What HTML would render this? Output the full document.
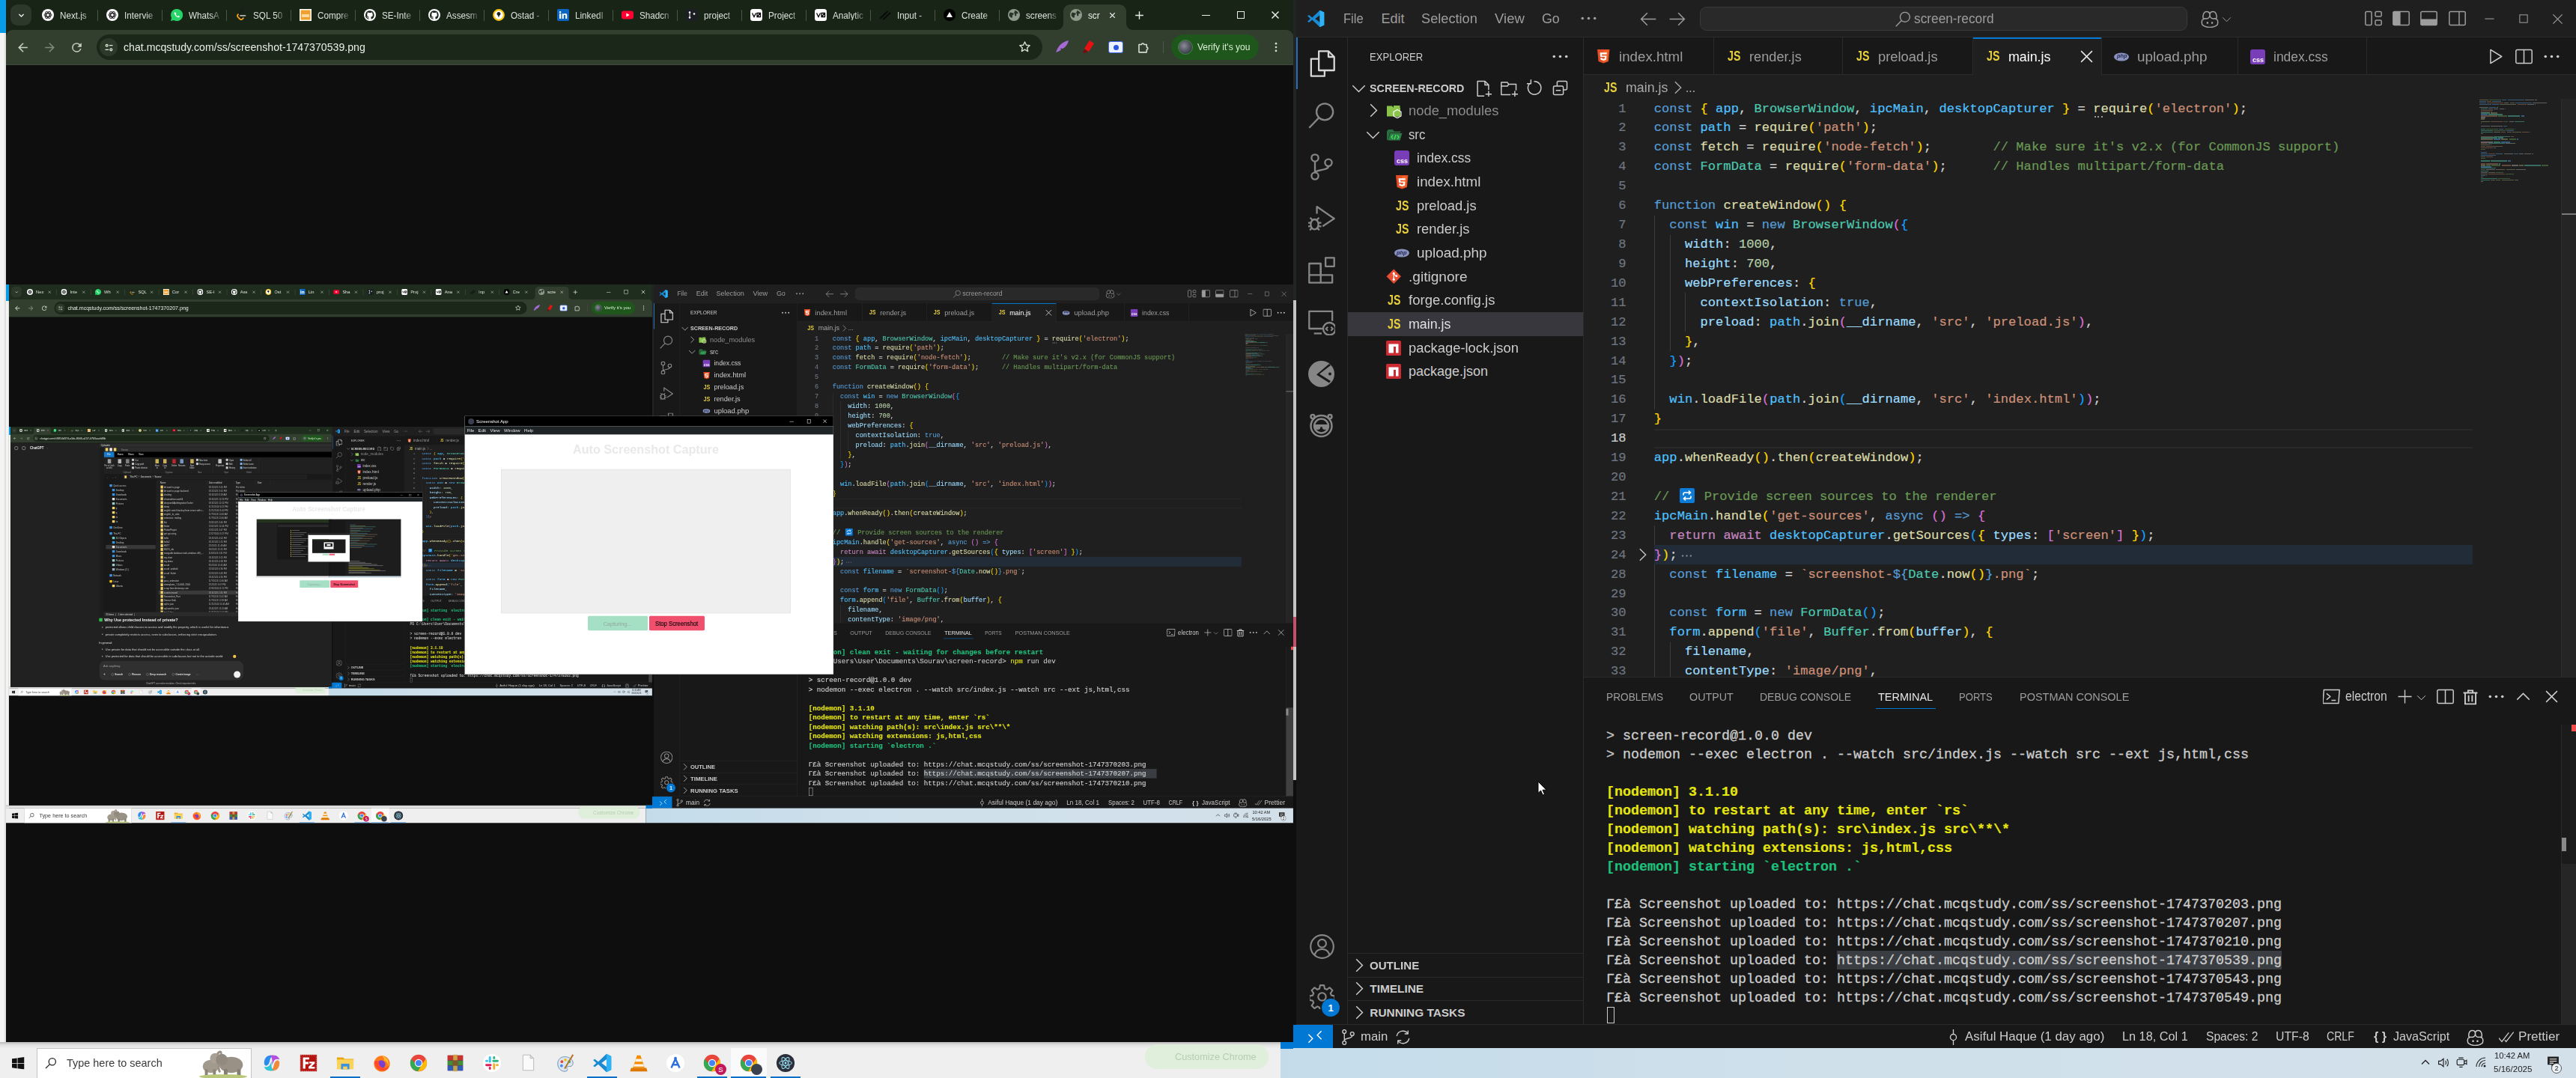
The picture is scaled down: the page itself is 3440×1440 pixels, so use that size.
<!DOCTYPE html><html><head><meta charset="utf-8"><title>screenshot</title><style>
html,body{margin:0;padding:0;background:#000;}
body{width:3440px;height:1440px;overflow:hidden;position:relative;font-family:"Liberation Sans",sans-serif;}
.desk{position:absolute;width:3440px;height:1440px;transform-origin:0 0;overflow:hidden;background:#0e0e0e;}
.b{position:absolute;}
.t{position:absolute;white-space:pre;line-height:1;transform-origin:0 0;font-family:"Liberation Sans",sans-serif;}
.m{position:absolute;white-space:pre;line-height:1;font-family:"Liberation Mono",monospace;-webkit-text-stroke:.2px;}
.m i{font-style:normal;}
.ic{position:absolute;overflow:visible;}
.tabt{overflow:hidden;-webkit-mask-image:linear-gradient(90deg,#000 65%,transparent 98%);mask-image:linear-gradient(90deg,#000 65%,transparent 98%);}
</style></head><body><svg width="0" height="0" style="position:absolute"><defs><symbol id="files" viewBox="1 1 14 14"><g fill="none" stroke="currentColor" stroke-width=".9" stroke-linejoin="round"><path d="M6.5 1.5h5l3 3v7h-8z"/><path d="M11.5 1.5v3h3"/><path d="M6.5 5.5h-4v9h7v-3"/></g></symbol><symbol id="search" viewBox="1 1 14 14"><g fill="none" stroke="currentColor" stroke-width=".9"><circle cx="9.6" cy="6.2" r="4.3"/><path d="M6.5 9.3L1.5 14.5"/></g></symbol><symbol id="scm" viewBox="1 1 14 14"><g fill="none" stroke="currentColor" stroke-width=".9"><circle cx="4.5" cy="3.3" r="1.8"/><circle cx="4.5" cy="12.7" r="1.8"/><circle cx="11.5" cy="5.8" r="1.8"/><path d="M4.5 5.1v5.8M11.5 7.6c0 2.5-7 1.6-7 3.6"/></g></symbol><symbol id="debug" viewBox="1 1 14 14"><g fill="none" stroke="currentColor" stroke-width=".9" stroke-linejoin="round"><path d="M5.5 5.5V1.8L14.5 8 8.5 12"/><ellipse cx="4.3" cy="11" rx="2" ry="2.6"/><path d="M2.3 10.2H.8M2.3 12H.8M6.3 10.2h1.5M6.3 12h1.5M3 8.6L2 7.5M5.6 8.6l1-1.1M2.8 13l-1 1M5.8 13l1 1"/></g></symbol><symbol id="ext" viewBox="1 1 14 14"><g fill="none" stroke="currentColor" stroke-width=".9" stroke-linejoin="round"><path d="M1.5 4.5h6v6h6v4h-12z"/><path d="M1.5 10.5h6v4M7.5 10.5v-6"/><rect x="10" y="1.5" width="4.5" height="4.5"/></g></symbol><symbol id="remoteexp" viewBox="1 1 14 14"><g fill="none" stroke="currentColor" stroke-width=".9" stroke-linejoin="round"><path d="M9 11.5H1.5v-9h12v5"/><path d="M4 14h4"/><circle cx="12" cy="11.6" r="3.2"/><path d="M11.2 10.6l-1 1 1 1M12.8 10.6l1 1-1 1" stroke-width=".8"/></g></symbol><symbol id="account" viewBox="1 1 14 14"><g fill="none" stroke="currentColor" stroke-width=".9"><circle cx="8" cy="8" r="6.5"/><circle cx="8" cy="6.2" r="2.3"/><path d="M3.8 12.9c.5-2.3 2.2-3.4 4.2-3.4s3.700 1.100 4.200 3.400"/></g></symbol><symbol id="gear" viewBox="1 1 14 14"><g fill="none" stroke="currentColor" stroke-width=".9" stroke-linejoin="round"><circle cx="8" cy="8" r="2.2"/><path d="M6.9 1.500h2.200l.4 1.900 1.200.5 1.600-1.100 1.600 1.600-1.100 1.600.5 1.200 1.900.4v2.200l-1.900.4-.5 1.200 1.100 1.600-1.600 1.600-1.600-1.100-1.200.5-.4 1.900h-2.200l-.4-1.900-1.200-.5-1.600 1.100-1.600-1.600 1.100-1.600-.5-1.200-1.900-.4v-2.200l1.900-.4.5-1.200-1.100-1.600 1.600-1.600 1.600 1.100 1.200-.5z"/></g></symbol><symbol id="chevr" viewBox="1 1 14 14"><path fill="none" stroke="currentColor" stroke-width=".9" d="M6 3l5 5-5 5"/></symbol><symbol id="chevd" viewBox="1 1 14 14"><path fill="none" stroke="currentColor" stroke-width=".9" d="M3 6l5 5 5-5"/></symbol><symbol id="chevu" viewBox="1 1 14 14"><path fill="none" stroke="currentColor" stroke-width=".9" d="M3 10.500l5-5 5 5"/></symbol><symbol id="newfile" viewBox="1 1 14 14"><g fill="none" stroke="currentColor" stroke-width=".9" stroke-linejoin="round"><path d="M9 14.500h-5.500v-12h6l3 3v4"/><path d="M9.500 2.500v3h3M12.500 10.500v5M10 13h5"/></g></symbol><symbol id="newfolder" viewBox="1 1 14 14"><g fill="none" stroke="currentColor" stroke-width=".9" stroke-linejoin="round"><path d="M9 13.500h-7.500v-10h5l1 1.500h6v5"/><path d="M1.500 6.500h5l1-1.500M12.500 10.500v5M10 13h5"/></g></symbol><symbol id="refresh" viewBox="1 1 14 14"><g fill="none" stroke="currentColor" stroke-width=".9"><path d="M4.700 4.200a5.300 5.300 0 1 0 3.300-1.500"/><path d="M5.500 1.200v3.300h-3.300" stroke-linejoin="round"/></g></symbol><symbol id="collapse" viewBox="1 1 14 14"><g fill="none" stroke="currentColor" stroke-width=".9" stroke-linejoin="round"><rect x="2.500" y="6.500" width="8" height="7" rx="1"/><path d="M5.500 6.500v-3a1 1 0 0 1 1-1h6a1 1 0 0 1 1 1v5a1 1 0 0 1-1 1h-2M4.500 10h4"/></g></symbol><symbol id="close" viewBox="1 1 14 14"><path fill="none" stroke="currentColor" stroke-width=".9" stroke-width="1.100" d="M3.500 3.500l9 9M12.500 3.500l-9 9"/></symbol><symbol id="run" viewBox="1 1 14 14"><path fill="none" stroke="currentColor" stroke-width=".9" stroke-linejoin="round" d="M4 2.500l9 5.500-9 5.500z"/></symbol><symbol id="split" viewBox="1 1 14 14"><g fill="none" stroke="currentColor" stroke-width=".9"><rect x="1.500" y="2.500" width="13" height="11" rx="1"/><path d="M8 2.500v11"/></g></symbol><symbol id="dots" viewBox="1 1 14 14"><g fill="currentColor"><circle cx="3" cy="8" r="1.100"/><circle cx="8" cy="8" r="1.100"/><circle cx="13" cy="8" r="1.100"/></g></symbol><symbol id="term" viewBox="1 1 14 14"><g fill="none" stroke="currentColor" stroke-width=".9" stroke-linejoin="round"><path d="M1.800 2.500h12.700l-.8 11h-12.700z"/><path d="M4 5.500l3 2.500-3 2.500M8 11h3.500"/></g></symbol><symbol id="plus" viewBox="1 1 14 14"><path fill="none" stroke="currentColor" stroke-width=".9" d="M8 2v12M2 8h12"/></symbol><symbol id="trash" viewBox="1 1 14 14"><g fill="none" stroke="currentColor" stroke-width=".9"><path d="M3.500 4.500h9v9.500h-9zM2 4.500h12M6 4.500v-2h4v2M6.500 6.500v5.500M9.500 6.500v5.500" stroke-width="1.200"/></g></symbol><symbol id="arrl" viewBox="1 1 14 14"><path fill="none" stroke="currentColor" stroke-width=".9" d="M14 8h-12M7 3l-5 5 5 5"/></symbol><symbol id="arrr" viewBox="1 1 14 14"><path fill="none" stroke="currentColor" stroke-width=".9" d="M2 8h12M9 3l5 5-5 5"/></symbol><symbol id="lay0" viewBox="1 1 14 14"><g fill="none" stroke="currentColor" stroke-width=".9"><rect x="1.500" y="2.500" width="5" height="11" rx="1"/><rect x="9.500" y="2.500" width="5" height="4" rx="1"/><rect x="9.500" y="9.500" width="5" height="4" rx="1"/></g></symbol><symbol id="lay1" viewBox="1 1 14 14"><g fill="none" stroke="currentColor" stroke-width=".9"><rect x="1.500" y="2.500" width="13" height="11" rx="1"/><path d="M2 3h5v10h-5z" fill="currentColor"/></g></symbol><symbol id="lay2" viewBox="1 1 14 14"><g fill="none" stroke="currentColor" stroke-width=".9"><rect x="1.500" y="2.500" width="13" height="11" rx="1"/><path d="M2 9h12v4h-12z" fill="currentColor"/></g></symbol><symbol id="lay3" viewBox="1 1 14 14"><g fill="none" stroke="currentColor" stroke-width=".9"><rect x="1.500" y="2.500" width="13" height="11" rx="1"/><path d="M9.500 2.500v11"/></g></symbol><symbol id="wmin" viewBox="1 1 14 14"><path fill="none" stroke="currentColor" stroke-width=".9" d="M3 8.500h10"/></symbol><symbol id="wmax" viewBox="1 1 14 14"><rect fill="none" stroke="currentColor" stroke-width=".9" x="3.500" y="3.500" width="9" height="9"/></symbol><symbol id="remote" viewBox="1 1 14 14"><path fill="none" stroke="currentColor" stroke-width=".9" stroke-width="1.200" d="M2.500 6l3.500 3.500-3.500 3.500M13.500 3l-3.500 3.500 3.500 3.500"/></symbol><symbol id="branch" viewBox="1 1 14 14"><g fill="none" stroke="currentColor" stroke-width=".9"><circle cx="4.500" cy="3" r="1.600"/><circle cx="4.500" cy="13" r="1.600"/><circle cx="11.500" cy="5" r="1.600"/><path d="M4.500 4.600v6.800M11.500 6.600c0 3-7 1.800-7 4.400"/></g></symbol><symbol id="sync" viewBox="1 1 14 14"><g fill="none" stroke="currentColor" stroke-width=".9"><path d="M2.500 7a5.500 5.500 0 0 1 10-2M13.500 9a5.500 5.500 0 0 1-10 2"/><path d="M12.500 2v3h-3M3.500 14v-3h3" stroke-linejoin="round"/></g></symbol><symbol id="commit" viewBox="1 1 14 14"><g fill="none" stroke="currentColor" stroke-width=".9"><circle cx="8" cy="8" r="2.700"/><path d="M8 1v4.300M8 10.700v4.300"/></g></symbol><symbol id="copilot" viewBox="1 1 14 14"><g fill="none" stroke="currentColor" stroke-width=".9" stroke-linejoin="round"><path d="M2.500 8.500c-1 .5-1 4 0 4.500 1.500 1.200 3.500 1.700 5.500 1.700s4-.5 5.500-1.700c1-.5 1-4 0-4.500"/><path d="M3 8.500c-1-3.500.5-6 2.500-6s2.500 1 2.500 2.500-1 3-2.500 3-2-.5-2.500.500zM13 8.500c1-3.500-.5-6-2.500-6s-2.500 1-2.500 2.500 1 3 2.500 3 2-.5 2.500.500z"/><path d="M6.200 10.500v1.500M9.800 10.500v1.500" stroke-width="1.300"/></g></symbol><symbol id="checkall" viewBox="1 1 14 14"><path fill="none" stroke="currentColor" stroke-width=".9" stroke-width="1.200" d="M.8 9l3 3.500 6.500-8.500M6.500 11l1.300 1.500 7-9"/></symbol><symbol id="cback" viewBox="0 0 24 24"><path fill="currentColor" d="M20 11H7.830l5.590-5.590L12 4l-8 8 8 8 1.410-1.410L7.830 13H20z"/></symbol><symbol id="cfwd" viewBox="0 0 24 24"><path fill="currentColor" d="M4 11h12.170l-5.590-5.590L12 4l8 8-8 8-1.410-1.410L16.170 13H4z"/></symbol><symbol id="creload" viewBox="0 0 24 24"><path fill="currentColor" d="M17.650 6.350A7.950 7.950 0 0 0 12 4a8 8 0 1 0 7.730 10h-2.080A6 6 0 1 1 12 6c1.660 0 3.140.690 4.220 1.780L13 11h7V4z"/></symbol><symbol id="ctune" viewBox="0 0 24 24"><g fill="none" stroke="currentColor" stroke-width="2"><circle cx="7.500" cy="7.500" r="2.300"/><path d="M12.500 7.500h7.500M4 16.500h7.500"/><circle cx="16.500" cy="16.500" r="2.300"/></g></symbol><symbol id="cstar" viewBox="0 0 24 24"><path fill="none" stroke="currentColor" stroke-width="1.800" stroke-linejoin="round" d="M12 3.800l2.500 5.400 5.900.6-4.400 4 1.200 5.800-5.200-3-5.200 3 1.200-5.800-4.400-4 5.900-.6z"/></symbol><symbol id="cpuzzle" viewBox="0 0 24 24"><path fill="none" stroke="currentColor" stroke-width="2" stroke-linejoin="round" d="M5 7h4.500a2 2 0 1 1 4 0H18v4.500a2 2 0 1 1 0 4V20H5z"/></symbol><symbol id="cmore" viewBox="0 0 24 24"><g fill="currentColor"><circle cx="12" cy="5.500" r="1.800"/><circle cx="12" cy="12" r="1.800"/><circle cx="12" cy="18.500" r="1.800"/></g></symbol><symbol id="cx" viewBox="0 0 24 24"><path fill="none" stroke="currentColor" stroke-width="2" d="M6 6l12 12M18 6L6 18"/></symbol><symbol id="cplus" viewBox="0 0 24 24"><path fill="none" stroke="currentColor" stroke-width="2" d="M12 4.500v15M4.500 12h15"/></symbol><symbol id="cchev" viewBox="0 0 24 24"><path fill="none" stroke="currentColor" stroke-width="2.200" d="M7 9.500l5 5 5-5"/></symbol><symbol id="globe" viewBox="0 0 24 24"><circle cx="12" cy="12" r="10" fill="#9aa89a"/><path fill="#3a4637" d="M5 7c2 0 3 1.500 5 1.500 1.500 0 1.500 2 0 3s-2 2-1.500 3.500-1 3-2 2.500S3 14 3 12s1-4 2-5zM14 3.500c2.500 1 5 3 6 6-1.500.5-2.500-.5-3.500.500s.5 3-.5 4-2.500.5-3-1 .5-2.500-.5-3.500-1-2.500 0-3.500 1-1.500 1.500-2.500z"/></symbol><symbol id="fgpt" viewBox="0 0 16 16"><circle cx="8" cy="8" r="8" fill="#fff"/><g fill="none" stroke="#222" stroke-width=".9"><circle cx="8" cy="8" r="2.200"/><ellipse cx="8" cy="8" rx="5" ry="2.600"/><ellipse cx="8" cy="8" rx="5" ry="2.600" transform="rotate(60 8 8)"/><ellipse cx="8" cy="8" rx="5" ry="2.600" transform="rotate(120 8 8)"/></g></symbol><symbol id="fwa" viewBox="0 0 16 16"><path fill="#25d366" d="M8 0a8 8 0 0 0-6.900 12L0 16l4.200-1.100A8 8 0 1 0 8 0z"/><path fill="#fff" d="M5.200 4.200c-.5.5-.8 1.300-.3 2.600 1 2.300 2.900 3.900 4.700 4.500 1 .3 1.800-.2 2.200-.8.200-.5-.1-.8-.8-1.200-.6-.3-.9-.3-1.300.2-.3.400-.6.300-1.200-.1-.8-.6-1.400-1.300-1.700-2 .7-.7.600-.9.300-1.600-.3-.9-.6-1.500-1.900-1.600z"/></symbol><symbol id="flc" viewBox="0 0 16 16"><g fill="none" stroke-linecap="round" stroke-width="1.800"><path stroke="#1a1a1a" d="M9.500 1.500L4 7.200"/><path stroke="#ffa116" d="M4 7.200c-1.300 1.400-1.300 2.700 0 4l2 2c1.300 1.200 2.700 1.200 4 0l1-1"/><path stroke="#b3b3b3" d="M7 8.800h6.500"/></g></symbol><symbol id="fjobs" viewBox="0 0 16 16"><rect width="16" height="16" fill="#fff"/><rect x="1.500" y="1.500" width="13" height="13" fill="#f0a030"/><rect x="3" y="7" width="10" height="4" fill="#fbd9a0"/></symbol><symbol id="fgh" viewBox="0 0 16 16"><circle cx="8" cy="8" r="8" fill="#fff"/><path fill="#18241a" d="M8 2.200a5.900 5.900 0 0 0-1.900 11.500c.3 0 .4-.1.400-.3v-1.100c-1.600.4-2-.7-2-.7-.3-.7-.7-.9-.7-.9-.5-.4 0-.4 0-.4.600 0 .9.600.9.600.5.900 1.400.7 1.800.5 0-.4.200-.7.400-.8-1.300-.2-2.700-.7-2.700-2.900 0-.7.200-1.200.600-1.600-.1-.2-.3-.8 0-1.600 0 0 .5-.2 1.700.6a5.700 5.700 0 0 1 3 0c1.100-.8 1.600-.6 1.600-.6.300.8.100 1.400.1 1.600.4.400.600.9.600 1.600 0 2.300-1.400 2.700-2.700 2.900.2.200.4.500.4 1.100v1.600c0 .2.100.3.400.3A5.900 5.900 0 0 0 8 2.200z"/></symbol><symbol id="fostad" viewBox="0 0 16 16"><circle cx="8" cy="8" r="6.800" fill="#fff" stroke="#f5c518" stroke-width="2.200"/><path fill="#222" d="M8 4a2.500 2.500 0 0 0-2.500 2.500c0 1 .6 1.700 1.500 2.200L8 11.500l1-2.800c.9-.5 1.500-1.200 1.500-2.200A2.500 2.500 0 0 0 8 4z"/></symbol><symbol id="fli" viewBox="0 0 16 16"><rect width="16" height="16" rx="2" fill="#0a66c2"/><path fill="#fff" d="M3 6.200h2.200V13H3zM4.100 2.900a1.300 1.300 0 1 1 0 2.600 1.300 1.300 0 0 1 0-2.600zM6.600 6.200h2.100v.9c.4-.7 1.200-1.100 2.200-1.100 2 0 2.400 1.300 2.400 3V13h-2.200V9.500c0-.8 0-1.700-1.100-1.700s-1.200.8-1.200 1.700V13H6.600z"/></symbol><symbol id="fyt" viewBox="0 0 16 16"><rect x="0" y="2.500" width="16" height="11" rx="3" fill="#f03"/><path fill="#fff" d="M6.400 5.500l4.300 2.500-4.300 2.500z"/></symbol><symbol id="fgit" viewBox="0 0 16 16"><rect width="16" height="16" rx="2" fill="#1b1f23"/><g fill="#fff"><circle cx="5" cy="4.500" r="1.300"/><circle cx="5" cy="11.500" r="1.300"/><circle cx="11" cy="6.500" r="1.300"/><rect x="4.600" y="5" width=".9" height="6"/></g></symbol><symbol id="fv0" viewBox="0 0 16 16"><rect width="16" height="16" rx="3.500" fill="#fff"/><path fill="none" stroke="#000" stroke-width="1.300" d="M2.500 5.500l2.500 5 2.500-5M9 5.500h4.500v5H9zM9 10.500l4.500-5"/></symbol><symbol id="fslash" viewBox="0 0 16 16"><path fill="none" stroke="#0a0a0a" stroke-width="2" stroke-linecap="round" d="M2 12L11 3.500M6 13.500l8.500-8"/></symbol><symbol id="ftri" viewBox="0 0 16 16"><circle cx="8" cy="8" r="8" fill="#000"/><path fill="#fff" d="M8 4l4 7H4z"/></symbol><symbol id="fglobe" viewBox="0 0 16 16"><circle cx="8" cy="8" r="8" fill="#8e9b8c"/><path fill="#28352a" d="M3 4.500c1.500 0 2.500 1 4 1 1 0 1 1.500 0 2.200s-1.500 1.300-1 2.300-.8 2-1.500 1.700S1.500 9.500 1.500 8s.8-2.800 1.500-3.500zM9.500 1.700c2 .7 3.700 2 4.500 4.300-1 .4-1.800-.3-2.500.400s.3 2-.4 2.700-1.700.3-2-.7.3-1.700-.4-2.400-.7-1.700 0-2.300.500-1.300.8-2z"/></symbol><symbol id="html5" viewBox="0 0 20 20"><path fill="#e44d26" d="M2 1h16l-1.500 15.600L10 19l-6.500-2.400z"/><path fill="#f16529" d="M10 2.300v15.400l5.300-1.900L16.400 2.300z"/><path fill="#fff" d="M5.500 5h9l-.2 2.200H7.900l.2 2h6l-.5 5.300L10 15.700l-3.600-1.200-.2-2.600h2.100l.1 1.100 1.600.5 1.600-.5.2-2.300H5.900z"/></symbol><symbol id="cssbg" viewBox="0 0 20 20"><rect width="20" height="20" rx="3" fill="#7a3db8"/></symbol><symbol id="phpbg" viewBox="0 0 20 12"><ellipse cx="10" cy="6" rx="10" ry="5.500" fill="#8993be"/></symbol><symbol id="gitf" viewBox="0 0 20 20"><path fill="#e84e32" d="M10 .5l9.500 9.500L10 19.500.5 10z"/><g fill="#fff"><circle cx="10" cy="6" r="1.500"/><circle cx="10" cy="14" r="1.500"/><circle cx="13.500" cy="9.500" r="1.400"/><rect x="9.400" y="6" width="1.200" height="8"/><path d="M10 6l3.500 3.500-.8.800L9.200 6.800z"/></g></symbol><symbol id="npmf" viewBox="0 0 20 20"><rect width="20" height="20" rx="1.500" fill="#cb2b31"/><path fill="#fff" d="M3.500 4.500h13v12h-3.500v-8.500h-3v8.500h-6.500z"/></symbol><symbol id="fnode" viewBox="0 0 22 20"><path fill="#8bc34a" d="M1 3.500h7l2 2.500h9v11.500H1z"/><path fill="#8bc34a" d="M10 3h8.500v3H10z"/><path fill="none" stroke="#fff" stroke-width="1.200" d="M15 8.500l5 2.800v5.600l-5 2.800-5-2.800v-5.600z"/><path fill="#8bc34a" d="M15 9.900l3.800 2.100v4.200L15 18.300l-3.800-2.100V12z"/></symbol><symbol id="fsrc" viewBox="0 0 22 20"><path fill="#2a6e40" d="M1 5.500L3 3h6l2 2.500h9l-1.500 2H5L2.500 17H1z"/><path fill="#2f7a47" d="M5.500 8h16l-3 9.500H2.500z"/><path fill="none" stroke="#3fe05a" stroke-width="1.400" d="M9 10.500l-2 2.500 2 2.500M15 10.500l2 2.500-2 2.500M13 10l-2 6"/></symbol><symbol id="emoji" viewBox="0 0 20 20"><rect width="20" height="20" rx="2" fill="#0d7bd8"/><path fill="none" stroke="#fff" stroke-width="1.700" d="M5 9.500V8a2 2 0 0 1 2-2h7M12 3.500L14.500 6 12 8.500M15 10.500V12a2 2 0 0 1-2 2H6M8 11.500L5.500 14 8 16.500"/></symbol><symbol id="tbwin" viewBox="0 0 16 16"><path fill="#111" d="M0 2.300l6.500-.9v6.300H0zM7.300 1.300L16 0v7.700H7.300zM0 8.400h6.500v6.300L0 13.800zM7.300 8.400H16V16l-8.700-1.200z"/></symbol><symbol id="tbsearch" viewBox="0 0 16 16"><g fill="none" stroke="#222" stroke-width="1.300"><circle cx="9.800" cy="6.200" r="4.600"/><path d="M6.500 9.600L1 15"/></g></symbol><symbol id="tbcopilot" viewBox="0 0 28 28"><path fill="#2b8cf0" d="M3 14C3 7 7 3 12 3h5c-4 1-5 4-6 8s-2 6-5 7c-2-.5-3-2-3-4z"/><path fill="#b44ee0" d="M11 3h6c4 0 7 2 8 6-3-1-6-1-8 2l-3 6c1-6 1-11-3-14z"/><path fill="#f28a3c" d="M25 14c0 7-4 11-9 11h-5c4-1 5-4 6-8s2-6 5-7c2 .5 3 2 3 4z"/><path fill="#2ec5d8" d="M17 25h-6c-4 0-7-2-8-6 3 1 6 1 8-2l3-6c-1 6-1 11 3 14z"/></symbol><symbol id="tbfz" viewBox="0 0 28 28"><rect x="2" y="2" width="24" height="24" fill="#b3140f"/><rect x="3" y="3" width="22" height="22" fill="none" stroke="#e8a9a0" stroke-width=".7" stroke-dasharray="1.500 1.500"/><path fill="#fff" d="M6 6h9v3h-5.500v3.500H14v3H9.500V22H6zM15 12h8v2.500l-5 5h5V22h-9v-2.500l5-5h-4z"/></symbol><symbol id="tbexp" viewBox="0 0 28 28"><path fill="#e8a712" d="M2 6h9l2 2h13v3H2z"/><path fill="#fbd35a" d="M2 9h24v14H2z"/><path fill="#3a93e0" d="M8 15h12v8H8z"/><path fill="#fbd35a" d="M11 19h6v4h-6z"/></symbol><symbol id="tbff" viewBox="0 0 28 28"><circle cx="14" cy="15" r="11.500" fill="#ff7a1a"/><path fill="#ffbd2e" d="M14 3c3 1 6 3 8 6 2 4 2 7 1 10 0-5-3-8-6-9 1-2-1-5-3-7z"/><circle cx="13" cy="16" r="6" fill="#7b3fd0"/><path fill="#ff4b2b" d="M3 12c1 8 6 13 12 13s9-4 10-8c-2 4-6 5-9 4-5-1-7-5-6-9-3-1-5-2-7 0z"/></symbol><symbol id="tbchrome" viewBox="0 0 28 28"><circle cx="14" cy="14" r="12" fill="#e8453c"/><path fill="#34a853" d="M3.600 8A12 12 0 0 0 13 26l5-9-8-1z"/><path fill="#fbbc05" d="M26 14a12 12 0 0 1-13 12l6-10.500L24.400 8c1 1.800 1.600 3.800 1.600 6z"/><circle cx="14" cy="14" r="5.600" fill="#fff"/><circle cx="14" cy="14" r="4.400" fill="#4285f4"/></symbol><symbol id="tbrar" viewBox="0 0 28 28"><rect x="3" y="3" width="22" height="22" fill="#7a1f6a"/><rect x="3" y="3" width="22" height="7" fill="#c6352b"/><rect x="3" y="10.500" width="22" height="7" fill="#3d8f3a"/><rect x="3" y="18" width="22" height="7" fill="#2f5fb5"/><rect x="11" y="2" width="6" height="24" fill="#c9a24a"/><rect x="10" y="10" width="8" height="8" fill="#7a5a2a"/></symbol><symbol id="tbslack" viewBox="0 0 28 28"><circle cx="14" cy="14" r="13" fill="#fff"/><g stroke-width="3.200" stroke-linecap="round"><path stroke="#36c5f0" d="M11 6v6M6 11h1"/><path stroke="#2eb67d" d="M22 11h-6M17 6v1"/><path stroke="#ecb22e" d="M17 22v-6M22 17h-1"/><path stroke="#e01e5a" d="M6 17h6M11 22v-1"/></g></symbol><symbol id="tbdoc" viewBox="0 0 28 28"><path fill="#fafafa" stroke="#b5b5b5" d="M6 2.500h11l5 5v18H6z"/><path fill="#ddd" stroke="#b5b5b5" d="M17 2.500v5h5z"/></symbol><symbol id="tbpaint" viewBox="0 0 28 28"><path fill="#d9e6f2" stroke="#6d8fae" d="M13 5c7 0 12 4 12 9s-4 5-7 5-2 3-1 4-1 3-4 3C7 26 3 21 3 15S7 5 13 5z"/><circle cx="9" cy="12" r="2" fill="#e8453c"/><circle cx="14" cy="9.500" r="2" fill="#fbbc05"/><circle cx="19.500" cy="12" r="2" fill="#34a853"/><circle cx="8.500" cy="18" r="2" fill="#4285f4"/><path stroke="#b5762a" stroke-width="2.200" d="M25 2L13 22"/></symbol><symbol id="tbvsc" viewBox="0 0 24 24"><path fill="#1a8ad4" fill-rule="evenodd" d="M17.500 .8L23.300 3.600v16.800L17.500 23.200 7.300 13.600 3.100 16.900 1 15.700 4.900 12 1 8.300l2.100-1.200 4.200 3.300zM17.500 7.300L11.300 12l6.200 4.700z"/><path fill="#2fb3f7" d="M17.500 .8L23.300 3.600v16.800L17.500 23.200z"/></symbol><symbol id="tbvlc" viewBox="0 0 28 28"><path fill="#f48b00" d="M11.500 3h5l6 18h-17z"/><path fill="#fff" d="M10 8h8l1.300 4H8.700zM7.500 15.500h13l1.200 3.500H6.300z" opacity=".9"/><path fill="#e07800" d="M3 21h22l1.500 5h-25z"/></symbol><symbol id="tbas" viewBox="0 0 28 28"><circle cx="14" cy="14" r="13" fill="#fff"/><path fill="none" stroke="#2f6fdd" stroke-width="2.600" d="M8 21l6-13 6 13M10 16.500h8"/><circle cx="14" cy="7" r="2" fill="#2f6fdd"/></symbol><symbol id="tbelectron" viewBox="0 0 28 28"><circle cx="14" cy="14" r="13" fill="#2b2e3b"/><g fill="none" stroke="#9feaf9" stroke-width="1"><ellipse cx="14" cy="14" rx="9" ry="3.500"/><ellipse cx="14" cy="14" rx="9" ry="3.500" transform="rotate(60 14 14)"/><ellipse cx="14" cy="14" rx="9" ry="3.500" transform="rotate(120 14 14)"/></g><circle cx="14" cy="14" r="1.500" fill="#9feaf9"/></symbol><symbol id="eleph" viewBox="0 0 70 40"><ellipse cx="18" cy="24" rx="11" ry="9" fill="#a39a8e"/><ellipse cx="46" cy="22" rx="16" ry="11" fill="#9a9186"/><circle cx="24" cy="13" r="7" fill="#aaa196"/><circle cx="33" cy="15" r="8" fill="#938a7f"/><path fill="none" stroke="#9a9186" stroke-width="3" d="M27 8c2-5 6-5 5-1M30 20c-2 6-1 10 1 12"/><rect x="10" y="28" width="4" height="9" fill="#8d8479"/><rect x="21" y="28" width="4" height="9" fill="#8d8479"/><rect x="36" y="28" width="5" height="10" fill="#857c72"/><rect x="54" y="28" width="5" height="10" fill="#857c72"/><ellipse cx="35" cy="38" rx="33" ry="3" fill="#b9c77a"/></symbol><symbol id="tray1" viewBox="0 0 16 16"><path fill="none" stroke="#222" stroke-width="1.300" d="M3 10.500l5-5 5 5"/></symbol><symbol id="tray2" viewBox="0 0 16 16"><path fill="none" stroke="#222" stroke-width="1.100" d="M1.500 6h2.500l3.500-3v10l-3.500-3h-2.500zM10 5.500c1 1 1 4 0 5M12 3.500c2 2 2 7 0 9"/></symbol><symbol id="tray3" viewBox="0 0 16 16"><g fill="none" stroke="#222" stroke-width="1.100"><rect x="2" y="4" width="9" height="7" rx="1.500"/><path d="M11 6.500l3-1.500v5l-3-1.500M5 13.500h4M4 2h6"/></g></symbol><symbol id="tray4" viewBox="0 0 16 16"><g fill="none" stroke="#222" stroke-width="1.100"><path d="M2 14a12 12 0 0 1 12-12M5.500 14a8.500 8.500 0 0 1 8.500-8.500M9 14a5 5 0 0 1 5-5"/></g><circle cx="13" cy="13" r="1.500" fill="#222"/></symbol><symbol id="tray5" viewBox="0 0 16 16"><path fill="#222" d="M1 1.500h14v10H9l-3 3v-3H1z"/><path stroke="#fff" stroke-width="1" d="M3.500 4.500h9M3.500 7h9M3.500 9.500h5"/></symbol></defs></svg><div class="desk" style="left:0;top:0"><div class="b" style="left:0px;top:0px;width:8px;height:44px;background:#0a9be6;"></div><div class="b" style="left:0px;top:44px;width:8px;height:1356px;background:linear-gradient(90deg,#f4f4f4 60%,#d8dad4);"></div><div class="b" style="left:0px;top:1392px;width:1727px;height:8px;background:linear-gradient(#bcbcbc,#e2e2e2 50%,#ededed);"></div><div class="b" style="left:8px;top:0px;width:1719px;height:1392px;background:#172416;"></div><div class="b" style="left:8px;top:40px;width:1719px;height:46px;background:#323f2f;border-radius:9px 9px 0 0;"></div><div class="b" style="left:8px;top:86px;width:1719px;height:1px;background:#3d4a3a;"></div><div class="b" style="left:8px;top:87px;width:1719px;height:1305px;background:#0e0e0e;overflow:hidden;"><div class="desk" style="left:0;top:293px;transform:scale(0.4997)"><div class="b" style="left:0px;top:0px;width:8px;height:44px;background:#0a9be6;"></div><div class="b" style="left:0px;top:44px;width:8px;height:1356px;background:linear-gradient(90deg,#f4f4f4 60%,#d8dad4);"></div><div class="b" style="left:0px;top:1392px;width:1727px;height:8px;background:linear-gradient(#bcbcbc,#e2e2e2 50%,#ededed);"></div><div class="b" style="left:8px;top:0px;width:1719px;height:1392px;background:#1e2d1d;"></div><div class="b" style="left:8px;top:40px;width:1719px;height:46px;background:#323f2f;border-radius:9px 9px 0 0;"></div><div class="b" style="left:8px;top:86px;width:1719px;height:1px;background:#3d4a3a;"></div><div class="b" style="left:8px;top:87px;width:1719px;height:1305px;background:#0e0e0e;overflow:hidden;"><div class="desk" style="left:0;top:293px;transform:scale(0.4997)"><div class="b" style="left:0px;top:0px;width:8px;height:44px;background:#0a9be6;"></div><div class="b" style="left:0px;top:44px;width:8px;height:1356px;background:linear-gradient(90deg,#f4f4f4 60%,#d8dad4);"></div><div class="b" style="left:0px;top:1392px;width:1727px;height:8px;background:linear-gradient(#bcbcbc,#e2e2e2 50%,#ededed);"></div><div class="b" style="left:8px;top:0px;width:1719px;height:1392px;background:#1e2d1d;"></div><div class="b" style="left:8px;top:40px;width:1719px;height:46px;background:#323f2f;border-radius:9px 9px 0 0;"></div><div class="b" style="left:8px;top:86px;width:1719px;height:1px;background:#3d4a3a;"></div><div class="b" style="left:8px;top:87px;width:1719px;height:1305px;background:#0e0e0e;overflow:hidden;"><div class="b" style="left:0px;top:0px;width:1719px;height:1305px;background:#212121;"></div><div class="b" style="left:22px;top:19px;width:18px;height:18px;border:2px solid #cfcfcf;border-radius:5px;box-sizing:border-box;"></div><div class="b" style="left:62px;top:19px;width:18px;height:18px;border:2px solid #cfcfcf;border-radius:5px;box-sizing:border-box;"></div><span class="t" style="left:104px;top:18.84px;font-size:18.5px;transform:scaleX(0.93);color:#e8e8e8;font-weight:bold;">ChatGPT</span><svg class="ic" style="left:190px;top:22px;width:14px;height:14px;color:#9a9a9a;"><use href="#cchev"/></svg><div class="b" style="left:474px;top:938px;width:18px;height:18px;background:#2fbf4a;border-radius:3px;"></div><span class="t" style="left:502px;top:938.07px;font-size:20px;transform:scaleX(1.08);color:#f2f2f2;font-weight:bold;">Why Use protected Instead of private?</span><div class="b" style="left:489px;top:984px;width:5px;height:5px;background:#ddd;border-radius:3px;"></div><span class="t" style="left:508px;top:978.88px;font-size:15.5px;transform:scaleX(1.01);color:#dcdcdc;">protected allows child classes to access and modify the property, which is useful for inheritance.</span><div class="b" style="left:489px;top:1021px;width:5px;height:5px;background:#ddd;border-radius:3px;"></div><span class="t" style="left:508px;top:1015.88px;font-size:15.5px;transform:scaleX(1.01);color:#dcdcdc;">private completely restricts access, even to subclasses, enforcing strict encapsulation.</span><div class="b" style="left:489px;top:1101px;width:5px;height:5px;background:#ddd;border-radius:3px;"></div><span class="t" style="left:508px;top:1095.88px;font-size:15.5px;transform:scaleX(1.01);color:#dcdcdc;">Use private for data that should not be accessible outside the class at all.</span><div class="b" style="left:489px;top:1139px;width:5px;height:5px;background:#ddd;border-radius:3px;"></div><span class="t" style="left:508px;top:1133.88px;font-size:15.5px;transform:scaleX(1.01);color:#dcdcdc;">Use protected for data that should be accessible in subclasses but not to the outside world.</span><span class="t" style="left:474px;top:1059.88px;font-size:15.5px;transform:scaleX(0.97);color:#e6e6e6;">In general:</span><div class="b" style="left:1190px;top:1134px;width:17px;height:17px;background:#f2c744;border-radius:9px;"></div><div class="b" style="left:474.6px;top:1166.5px;width:770px;height:102px;background:#303030;border-radius:28px;"></div><span class="t" style="left:497px;top:1186.46px;font-size:16px;transform:scaleX(0.97);color:#a5a5a5;">Ask anything</span><span class="t" style="left:497px;top:1227.07px;font-size:20px;color:#ddd;">+</span><div class="b" style="left:539px;top:1232px;width:13px;height:13px;border:1.500px solid #ddd;border-radius:7px;box-sizing:border-box;"></div><span class="t" style="left:558px;top:1232.07px;font-size:13.5px;transform:scaleX(0.95);color:#e0e0e0;font-weight:bold;">Search</span><div class="b" style="left:630.78px;top:1232px;width:13px;height:13px;border:1.500px solid #ddd;border-radius:7px;box-sizing:border-box;"></div><span class="t" style="left:649.78px;top:1232.07px;font-size:13.5px;transform:scaleX(0.95);color:#e0e0e0;font-weight:bold;">Reason</span><div class="b" style="left:726.11px;top:1232px;width:13px;height:13px;border:1.500px solid #ddd;border-radius:7px;box-sizing:border-box;"></div><span class="t" style="left:745.11px;top:1232.07px;font-size:13.5px;transform:scaleX(0.95);color:#e0e0e0;font-weight:bold;">Deep research</span><div class="b" style="left:863.51px;top:1232px;width:13px;height:13px;border:1.500px solid #ddd;border-radius:7px;box-sizing:border-box;"></div><span class="t" style="left:882.51px;top:1232.07px;font-size:13.5px;transform:scaleX(0.95);color:#e0e0e0;font-weight:bold;">Create image</span><svg class="ic" style="left:993.07px;top:1231px;width:16px;height:16px;color:#ddd;"><use href="#dots"/></svg><div class="b" style="left:1194px;top:1221px;width:36px;height:36px;background:#f4f4f4;border-radius:18px;"></div><span class="t" style="left:725.19px;top:1280.84px;font-size:12px;transform:scaleX(0.97);color:#b4b4b4;">ChatGPT can make mistakes. Check important info.</span></div><div class="b" style="left:14px;top:6px;width:28px;height:28px;background:#2b382a;border-radius:9px;"></div><svg class="ic" style="left:20.5px;top:12.5px;width:15px;height:15px;color:#e6ece3;"><use href="#cchev"/></svg><svg class="ic" style="left:56px;top:12px;width:16px;height:16px;"><use href="#fgpt"/></svg><span class="t tabt" style="left:80px;top:14.79px;font-size:12.300px;width:31.58px;color:#dde3da;transform:scaleX(.95)">Nex</span><svg class="ic" style="left:110.1px;top:13.5px;width:13px;height:13px;color:#cfd6cc;"><use href="#cx"/></svg><div class="b" style="left:132.6px;top:6px;width:91px;height:36px;background:#323f2f;border-radius:9px 9px 0 0;"></div><div class="b" style="left:124.6px;top:32px;width:8px;height:8px;background:radial-gradient(circle at 0 0,transparent 7.500px,#323f2f 8px)"></div><div class="b" style="left:223.6px;top:32px;width:8px;height:8px;background:radial-gradient(circle at 100% 0,transparent 7.500px,#323f2f 8px)"></div><svg class="ic" style="left:147px;top:12px;width:16px;height:16px;"><use href="#fgpt"/></svg><span class="t tabt" style="left:171px;top:14.79px;font-size:12.300px;width:31.58px;color:#dde3da;transform:scaleX(.95)">Inte</span><svg class="ic" style="left:201.1px;top:13.5px;width:13px;height:13px;color:#cfd6cc;"><use href="#cx"/></svg><svg class="ic" style="left:238px;top:12px;width:16px;height:16px;"><use href="#fwa"/></svg><span class="t tabt" style="left:262px;top:14.79px;font-size:12.300px;width:31.58px;color:#dde3da;transform:scaleX(.95)">Wh</span><svg class="ic" style="left:292.1px;top:13.5px;width:13px;height:13px;color:#cfd6cc;"><use href="#cx"/></svg><div class="b" style="left:316.8px;top:13px;width:1.6px;height:15px;background:#4a5747;border-radius:1px;"></div><svg class="ic" style="left:329px;top:12px;width:16px;height:16px;"><use href="#flc"/></svg><span class="t tabt" style="left:353px;top:14.79px;font-size:12.300px;width:31.58px;color:#dde3da;transform:scaleX(.95)">SQL</span><svg class="ic" style="left:383.1px;top:13.5px;width:13px;height:13px;color:#cfd6cc;"><use href="#cx"/></svg><div class="b" style="left:407.8px;top:13px;width:1.6px;height:15px;background:#4a5747;border-radius:1px;"></div><svg class="ic" style="left:420px;top:12px;width:16px;height:16px;"><use href="#fjobs"/></svg><span class="t tabt" style="left:444px;top:14.79px;font-size:12.300px;width:31.58px;color:#dde3da;transform:scaleX(.95)">Cor</span><svg class="ic" style="left:474.1px;top:13.5px;width:13px;height:13px;color:#cfd6cc;"><use href="#cx"/></svg><div class="b" style="left:498.8px;top:13px;width:1.6px;height:15px;background:#4a5747;border-radius:1px;"></div><svg class="ic" style="left:511px;top:12px;width:16px;height:16px;"><use href="#fgh"/></svg><span class="t tabt" style="left:535px;top:14.79px;font-size:12.300px;width:31.58px;color:#dde3da;transform:scaleX(.95)">SE-I</span><svg class="ic" style="left:565.1px;top:13.5px;width:13px;height:13px;color:#cfd6cc;"><use href="#cx"/></svg><div class="b" style="left:589.8px;top:13px;width:1.6px;height:15px;background:#4a5747;border-radius:1px;"></div><svg class="ic" style="left:602px;top:12px;width:16px;height:16px;"><use href="#fgh"/></svg><span class="t tabt" style="left:626px;top:14.79px;font-size:12.300px;width:31.58px;color:#dde3da;transform:scaleX(.95)">Ass</span><svg class="ic" style="left:656.1px;top:13.5px;width:13px;height:13px;color:#cfd6cc;"><use href="#cx"/></svg><div class="b" style="left:680.8px;top:13px;width:1.6px;height:15px;background:#4a5747;border-radius:1px;"></div><svg class="ic" style="left:693px;top:12px;width:16px;height:16px;"><use href="#fostad"/></svg><span class="t tabt" style="left:717px;top:14.79px;font-size:12.300px;width:31.58px;color:#dde3da;transform:scaleX(.95)">Ost</span><svg class="ic" style="left:747.1px;top:13.5px;width:13px;height:13px;color:#cfd6cc;"><use href="#cx"/></svg><div class="b" style="left:771.8px;top:13px;width:1.6px;height:15px;background:#4a5747;border-radius:1px;"></div><svg class="ic" style="left:784px;top:12px;width:16px;height:16px;"><use href="#fli"/></svg><span class="t tabt" style="left:808px;top:14.79px;font-size:12.300px;width:31.58px;color:#dde3da;transform:scaleX(.95)">Lin</span><svg class="ic" style="left:838.1px;top:13.5px;width:13px;height:13px;color:#cfd6cc;"><use href="#cx"/></svg><div class="b" style="left:862.8px;top:13px;width:1.6px;height:15px;background:#4a5747;border-radius:1px;"></div><svg class="ic" style="left:875px;top:12px;width:16px;height:16px;"><use href="#fyt"/></svg><span class="t tabt" style="left:899px;top:14.79px;font-size:12.300px;width:31.58px;color:#dde3da;transform:scaleX(.95)">Sha</span><svg class="ic" style="left:929.1px;top:13.5px;width:13px;height:13px;color:#cfd6cc;"><use href="#cx"/></svg><div class="b" style="left:953.8px;top:13px;width:1.6px;height:15px;background:#4a5747;border-radius:1px;"></div><svg class="ic" style="left:966px;top:12px;width:16px;height:16px;"><use href="#fgit"/></svg><span class="t tabt" style="left:990px;top:14.79px;font-size:12.300px;width:31.58px;color:#dde3da;transform:scaleX(.95)">proj</span><svg class="ic" style="left:1020.1px;top:13.5px;width:13px;height:13px;color:#cfd6cc;"><use href="#cx"/></svg><div class="b" style="left:1044.8px;top:13px;width:1.6px;height:15px;background:#4a5747;border-radius:1px;"></div><svg class="ic" style="left:1057px;top:12px;width:16px;height:16px;"><use href="#fv0"/></svg><span class="t tabt" style="left:1081px;top:14.79px;font-size:12.300px;width:31.58px;color:#dde3da;transform:scaleX(.95)">Proj</span><svg class="ic" style="left:1111.1px;top:13.5px;width:13px;height:13px;color:#cfd6cc;"><use href="#cx"/></svg><div class="b" style="left:1135.8px;top:13px;width:1.6px;height:15px;background:#4a5747;border-radius:1px;"></div><svg class="ic" style="left:1148px;top:12px;width:16px;height:16px;"><use href="#fv0"/></svg><span class="t tabt" style="left:1172px;top:14.79px;font-size:12.300px;width:31.58px;color:#dde3da;transform:scaleX(.95)">Ana</span><svg class="ic" style="left:1202.1px;top:13.5px;width:13px;height:13px;color:#cfd6cc;"><use href="#cx"/></svg><div class="b" style="left:1226.8px;top:13px;width:1.6px;height:15px;background:#4a5747;border-radius:1px;"></div><svg class="ic" style="left:1239px;top:12px;width:16px;height:16px;"><use href="#fslash"/></svg><span class="t tabt" style="left:1263px;top:14.79px;font-size:12.300px;width:31.58px;color:#dde3da;transform:scaleX(.95)">Inp</span><svg class="ic" style="left:1293.1px;top:13.5px;width:13px;height:13px;color:#cfd6cc;"><use href="#cx"/></svg><div class="b" style="left:1317.8px;top:13px;width:1.6px;height:15px;background:#4a5747;border-radius:1px;"></div><svg class="ic" style="left:1330px;top:12px;width:16px;height:16px;"><use href="#ftri"/></svg><span class="t tabt" style="left:1354px;top:14.79px;font-size:12.300px;width:31.58px;color:#dde3da;transform:scaleX(.95)">Cre</span><svg class="ic" style="left:1384.1px;top:13.5px;width:13px;height:13px;color:#cfd6cc;"><use href="#cx"/></svg><svg class="ic" style="left:1419.1px;top:11.5px;width:17px;height:17px;color:#e8ede6;"><use href="#cplus"/></svg><div class="b" style="left:1605px;top:19.5px;width:11px;height:1.2px;background:#e8ede6;"></div><div class="b" style="left:1652px;top:14.5px;width:10px;height:10px;border:1.200px solid #e8ede6;box-sizing:border-box;"></div><svg class="ic" style="left:1694px;top:11px;width:18px;height:18px;color:#e8ede6;stroke-width:.6;"><use href="#cx"/></svg><svg class="ic" style="left:20.5px;top:53.5px;width:19px;height:19px;color:#c7d0c3;"><use href="#cback"/></svg><svg class="ic" style="left:56.5px;top:53.5px;width:19px;height:19px;color:#7d8a79;"><use href="#cfwd"/></svg><svg class="ic" style="left:92.5px;top:53.5px;width:19px;height:19px;color:#c7d0c3;"><use href="#creload"/></svg><div class="b" style="left:128.5px;top:46px;width:1263px;height:34px;background:#1b2819;border-radius:17px;"></div><div class="b" style="left:133px;top:51px;width:24px;height:24px;background:#2c3a2a;border-radius:12px;"></div><svg class="ic" style="left:137.5px;top:55.5px;width:15px;height:15px;color:#e3e9df;"><use href="#ctune"/></svg><span class="t" style="left:165px;top:55.95px;font-size:14px;transform:scaleX(1.01);color:#e9eee6;">chatgpt.com/c/6814d374-a3dc-8006-a157-0763aacfdf6b</span><svg class="ic" style="left:1358.5px;top:53px;width:19px;height:19px;color:#d5dcd1;"><use href="#cstar"/></svg><svg class="ic" style="left:1409px;top:53px;width:19px;height:19px" viewBox="0 0 19 19"><path fill="#a66ad6" d="M1 18C3 10 8 3 18 1c-1 5-4 9-8 11l-3-.5 1 2c-2 1.500-4 2.500-7 3.500z"/></svg><svg class="ic" style="left:1444px;top:53px;width:19px;height:19px" viewBox="0 0 19 19"><path fill="#e81111" d="M11 1l6 4-7 11-6-4z"/><path fill="#7a0808" d="M4 13l4 2.500-1 1.500-5 1z"/></svg><div class="b" style="left:1480px;top:55px;width:20px;height:16px;background:#eef1ff;border-radius:3px;border:1.500px solid #3b6cf0;box-sizing:border-box;"></div><div class="b" style="left:1486.5px;top:59.5px;width:7px;height:7px;background:#2a57e0;border-radius:4px;"></div><svg class="ic" style="left:1516.5px;top:53.5px;width:19px;height:19px;color:#d5dcd1;"><use href="#cpuzzle"/></svg><div class="b" style="left:1552.5px;top:55px;width:1.5px;height:16px;background:#4c5a49;"></div><div class="b" style="left:1564px;top:46px;width:117px;height:34px;background:#1f561c;border-radius:17px;"></div><div class="b" style="left:1573px;top:53px;width:20px;height:20px;background:#55624f;border-radius:10px;border:1.500px solid #3f8a3a;box-sizing:border-box;background:radial-gradient(circle at 40% 40%,#8a8a96,#3a3f4a 70%);"></div><span class="t" style="left:1599px;top:56.72px;font-size:12.5px;transform:scaleX(0.96);color:#dcefd8;">Verify it's you</span><svg class="ic" style="left:1695px;top:54px;width:18px;height:18px;color:#d5dcd1;"><use href="#cmore"/></svg><div class="b" style="left:484px;top:90px;width:1243px;height:925px;background:#1c1c1c;"></div><div class="b" style="left:484px;top:90px;width:1243px;height:20px;background:#2d2d2d;"></div><span class="t" style="left:494px;top:94.84px;font-size:12px;transform:scaleX(0.96);color:#ddd;">Uploader</span><div class="b" style="left:508px;top:110px;width:1219px;height:905px;background:#202020;"></div><div class="b" style="left:508px;top:110px;width:1219px;height:25px;background:#2b2b2b;"></div><div class="b" style="left:516px;top:114px;width:14px;height:17px;background:#f5d36b;"></div><div class="b" style="left:538px;top:114px;width:14px;height:17px;background:#eee;"></div><div class="b" style="left:560px;top:114px;width:14px;height:17px;background:#f5d36b;"></div><span class="t" style="left:600px;top:117.84px;font-size:12px;transform:scaleX(0.96);color:#9a9a9a;">Sourav</span><div class="b" style="left:508px;top:135px;width:1219px;height:29px;background:#000;"></div><div class="b" style="left:508px;top:135px;width:55px;height:29px;background:#1979ca;"></div><span class="t" style="left:525px;top:143.84px;font-size:12px;transform:scaleX(0.96);color:#f0f0f0;">File</span><span class="t" style="left:580px;top:143.84px;font-size:12px;transform:scaleX(0.96);color:#f0f0f0;">Home</span><span class="t" style="left:637px;top:143.84px;font-size:12px;transform:scaleX(0.96);color:#f0f0f0;">Share</span><span class="t" style="left:694px;top:143.84px;font-size:12px;transform:scaleX(0.96);color:#f0f0f0;">View</span><div class="b" style="left:528px;top:174px;width:18px;height:23px;background:#bbb;border-radius:2px;opacity:.8;"></div><span class="t" style="left:510.11px;top:205.11px;font-size:10.5px;transform:scaleX(0.95);color:#cfcfcf;">Pin to Quick</span><span class="t" style="left:521.48px;top:217.11px;font-size:10.5px;transform:scaleX(0.95);color:#cfcfcf;">access</span><div class="b" style="left:583px;top:174px;width:18px;height:23px;background:#ddd;border-radius:2px;opacity:.8;"></div><span class="t" style="left:580.36px;top:205.11px;font-size:10.5px;transform:scaleX(0.95);color:#cfcfcf;">Copy</span><div class="b" style="left:625px;top:174px;width:18px;height:23px;background:#999;border-radius:2px;opacity:.8;"></div><span class="t" style="left:621.25px;top:205.11px;font-size:10.5px;transform:scaleX(0.95);color:#cfcfcf;">Paste</span><div class="b" style="left:783px;top:174px;width:18px;height:23px;background:#f5d36b;border-radius:2px;opacity:.8;"></div><span class="t" style="left:779.8px;top:205.11px;font-size:10.5px;transform:scaleX(0.95);color:#cfcfcf;">Move</span><span class="t" style="left:787.84px;top:217.11px;font-size:10.5px;transform:scaleX(0.95);color:#cfcfcf;">to</span><div class="b" style="left:825px;top:174px;width:18px;height:23px;background:#f5d36b;border-radius:2px;opacity:.8;"></div><span class="t" style="left:822.36px;top:205.11px;font-size:10.5px;transform:scaleX(0.95);color:#cfcfcf;">Copy</span><span class="t" style="left:829.84px;top:217.11px;font-size:10.5px;transform:scaleX(0.95);color:#cfcfcf;">to</span><div class="b" style="left:874px;top:174px;width:18px;height:23px;background:#e0282e;border-radius:2px;opacity:.8;"></div><span class="t" style="left:868.58px;top:205.11px;font-size:10.5px;transform:scaleX(0.95);color:#cfcfcf;">Delete</span><div class="b" style="left:915px;top:174px;width:18px;height:23px;background:#8ab4e8;border-radius:2px;opacity:.8;"></div><span class="t" style="left:905.15px;top:205.11px;font-size:10.5px;transform:scaleX(0.95);color:#cfcfcf;">Rename</span><div class="b" style="left:970px;top:174px;width:18px;height:23px;background:#f5d36b;border-radius:2px;opacity:.8;"></div><span class="t" style="left:969.02px;top:205.11px;font-size:10.5px;transform:scaleX(0.95);color:#cfcfcf;">New</span><span class="t" style="left:966.52px;top:217.11px;font-size:10.5px;transform:scaleX(0.95);color:#cfcfcf;">folder</span><div class="b" style="left:1119px;top:174px;width:18px;height:23px;background:#eee;border-radius:2px;opacity:.8;"></div><span class="t" style="left:1105.27px;top:205.11px;font-size:10.5px;transform:scaleX(0.95);color:#cfcfcf;">Properties</span><div class="b" style="left:657px;top:172px;width:12px;height:12px;background:#c9c9c9;"></div><span class="t" style="left:674px;top:173.69px;font-size:11px;transform:scaleX(0.95);color:#d8d8d8;">Cut</span><div class="b" style="left:657px;top:193px;width:12px;height:12px;background:#c9c9c9;"></div><span class="t" style="left:674px;top:194.69px;font-size:11px;transform:scaleX(0.95);color:#d8d8d8;">Copy path</span><div class="b" style="left:657px;top:214px;width:12px;height:12px;background:#c9c9c9;"></div><span class="t" style="left:674px;top:215.69px;font-size:11px;transform:scaleX(0.95);color:#d8d8d8;">Paste shortcut</span><div class="b" style="left:1001px;top:172px;width:12px;height:12px;background:#c9c9c9;"></div><span class="t" style="left:1018px;top:173.69px;font-size:11px;transform:scaleX(0.95);color:#d8d8d8;">New item</span><div class="b" style="left:1001px;top:193px;width:12px;height:12px;background:#c9c9c9;"></div><span class="t" style="left:1018px;top:194.69px;font-size:11px;transform:scaleX(0.95);color:#d8d8d8;">Easy access</span><div class="b" style="left:1160px;top:172px;width:12px;height:12px;background:#c9c9c9;"></div><span class="t" style="left:1177px;top:173.69px;font-size:11px;transform:scaleX(0.95);color:#d8d8d8;">Open</span><div class="b" style="left:1160px;top:193px;width:12px;height:12px;background:#c9c9c9;"></div><span class="t" style="left:1177px;top:194.69px;font-size:11px;transform:scaleX(0.95);color:#d8d8d8;">Edit</span><div class="b" style="left:1160px;top:214px;width:12px;height:12px;background:#c9c9c9;"></div><span class="t" style="left:1177px;top:215.69px;font-size:11px;transform:scaleX(0.95);color:#d8d8d8;">History</span><div class="b" style="left:1236px;top:172px;width:12px;height:12px;background:#7fb2e5;"></div><span class="t" style="left:1253px;top:173.69px;font-size:11px;transform:scaleX(0.95);color:#d8d8d8;">Select all</span><div class="b" style="left:1236px;top:193px;width:12px;height:12px;background:#7fb2e5;"></div><span class="t" style="left:1253px;top:194.69px;font-size:11px;transform:scaleX(0.95);color:#d8d8d8;">Select none</span><div class="b" style="left:1236px;top:214px;width:12px;height:12px;background:#7fb2e5;"></div><span class="t" style="left:1253px;top:215.69px;font-size:11px;transform:scaleX(0.95);color:#d8d8d8;">Invert selection</span><span class="t" style="left:610px;top:239.11px;font-size:10.5px;transform:scaleX(0.95);color:#8a8a8a;">Clipboard</span><span class="t" style="left:835px;top:239.11px;font-size:10.5px;transform:scaleX(0.95);color:#8a8a8a;">Organize</span><span class="t" style="left:1010px;top:239.11px;font-size:10.5px;transform:scaleX(0.95);color:#8a8a8a;">New</span><span class="t" style="left:1150px;top:239.11px;font-size:10.5px;transform:scaleX(0.95);color:#8a8a8a;">Open</span><span class="t" style="left:1270px;top:239.11px;font-size:10.5px;transform:scaleX(0.95);color:#8a8a8a;">Select</span><div class="b" style="left:757px;top:170px;width:1px;height:80px;background:#3a3a3a;"></div><div class="b" style="left:945px;top:170px;width:1px;height:80px;background:#3a3a3a;"></div><div class="b" style="left:1090px;top:170px;width:1px;height:80px;background:#3a3a3a;"></div><div class="b" style="left:1220px;top:170px;width:1px;height:80px;background:#3a3a3a;"></div><div class="b" style="left:1335px;top:170px;width:1px;height:80px;background:#3a3a3a;"></div><div class="b" style="left:508px;top:254px;width:1219px;height:30px;background:#191919;"></div><div class="b" style="left:612px;top:259px;width:980px;height:21px;background:#1f1f1f;border:1px solid #3a3a3a;box-sizing:border-box;"></div><span class="t" style="left:522px;top:264px;font-size:13px;color:#ccc;">←   →  ↑</span><div class="b" style="left:618px;top:262px;width:11px;height:14px;background:#f5d36b;"></div><span class="t" style="left:646px;top:264.34px;font-size:12px;transform:scaleX(0.96);color:#e0e0e0;">This PC  ›  Documents  ›  Sourav</span><div class="b" style="left:508px;top:284px;width:278px;height:731px;background:#191919;"></div><div class="b" style="left:538px;top:309px;width:14px;height:13px;background:#3a93e0;border-radius:2px;"></div><span class="t" style="left:558px;top:309.84px;font-size:12px;transform:scaleX(0.96);color:#c9c9c9;">Quick access</span><div class="b" style="left:552px;top:333px;width:14px;height:13px;background:#3a93e0;border-radius:2px;"></div><span class="t" style="left:572px;top:333.84px;font-size:12px;transform:scaleX(0.96);color:#c9c9c9;">Desktop</span><div class="b" style="left:552px;top:357px;width:14px;height:13px;background:#3a93e0;border-radius:2px;"></div><span class="t" style="left:572px;top:357.84px;font-size:12px;transform:scaleX(0.96);color:#c9c9c9;">Downloads</span><div class="b" style="left:552px;top:381px;width:14px;height:13px;background:#ddd;border-radius:2px;"></div><span class="t" style="left:572px;top:381.84px;font-size:12px;transform:scaleX(0.96);color:#c9c9c9;">Documents</span><div class="b" style="left:552px;top:405px;width:14px;height:13px;background:#9cc;border-radius:2px;"></div><span class="t" style="left:572px;top:405.84px;font-size:12px;transform:scaleX(0.96);color:#c9c9c9;">Pictures</span><div class="b" style="left:552px;top:429px;width:14px;height:13px;background:#f5d36b;border-radius:2px;"></div><span class="t" style="left:572px;top:429.84px;font-size:12px;transform:scaleX(0.96);color:#c9c9c9;">p</span><div class="b" style="left:552px;top:453px;width:14px;height:13px;background:#f5d36b;border-radius:2px;"></div><span class="t" style="left:572px;top:453.84px;font-size:12px;transform:scaleX(0.96);color:#c9c9c9;">q</span><div class="b" style="left:552px;top:477px;width:14px;height:13px;background:#f5d36b;border-radius:2px;"></div><span class="t" style="left:572px;top:477.84px;font-size:12px;transform:scaleX(0.96);color:#c9c9c9;">ts</span><div class="b" style="left:552px;top:501px;width:14px;height:13px;background:#f5d36b;border-radius:2px;"></div><span class="t" style="left:572px;top:501.84px;font-size:12px;transform:scaleX(0.96);color:#c9c9c9;">te</span><div class="b" style="left:538px;top:533px;width:14px;height:13px;background:#3a93e0;border-radius:2px;"></div><span class="t" style="left:558px;top:533.84px;font-size:12px;transform:scaleX(0.96);color:#c9c9c9;">OneDrive</span><div class="b" style="left:538px;top:565px;width:14px;height:13px;background:#3a93e0;border-radius:2px;"></div><span class="t" style="left:558px;top:565.84px;font-size:12px;transform:scaleX(0.96);color:#c9c9c9;">This PC</span><div class="b" style="left:552px;top:589px;width:14px;height:13px;background:#6cc;border-radius:2px;"></div><span class="t" style="left:572px;top:589.84px;font-size:12px;transform:scaleX(0.96);color:#c9c9c9;">3D Objects</span><div class="b" style="left:552px;top:613px;width:14px;height:13px;background:#3a93e0;border-radius:2px;"></div><span class="t" style="left:572px;top:613.84px;font-size:12px;transform:scaleX(0.96);color:#c9c9c9;">Desktop</span><div class="b" style="left:518px;top:633px;width:266px;height:22px;background:#383838;"></div><div class="b" style="left:552px;top:637px;width:14px;height:13px;background:#ddd;border-radius:2px;"></div><span class="t" style="left:572px;top:637.84px;font-size:12px;transform:scaleX(0.96);color:#c9c9c9;">Documents</span><div class="b" style="left:552px;top:661px;width:14px;height:13px;background:#3a93e0;border-radius:2px;"></div><span class="t" style="left:572px;top:661.84px;font-size:12px;transform:scaleX(0.96);color:#c9c9c9;">Downloads</span><div class="b" style="left:552px;top:685px;width:14px;height:13px;background:#3a93e0;border-radius:2px;"></div><span class="t" style="left:572px;top:685.84px;font-size:12px;transform:scaleX(0.96);color:#c9c9c9;">Music</span><div class="b" style="left:552px;top:709px;width:14px;height:13px;background:#9cc;border-radius:2px;"></div><span class="t" style="left:572px;top:709.84px;font-size:12px;transform:scaleX(0.96);color:#c9c9c9;">Pictures</span><div class="b" style="left:552px;top:733px;width:14px;height:13px;background:#9cc;border-radius:2px;"></div><span class="t" style="left:572px;top:733.84px;font-size:12px;transform:scaleX(0.96);color:#c9c9c9;">Videos</span><div class="b" style="left:552px;top:757px;width:14px;height:13px;background:#9ab;border-radius:2px;"></div><span class="t" style="left:572px;top:757.84px;font-size:12px;transform:scaleX(0.96);color:#c9c9c9;">Windows (C:)</span><div class="b" style="left:538px;top:789px;width:14px;height:13px;background:#3a93e0;border-radius:2px;"></div><span class="t" style="left:558px;top:789.84px;font-size:12px;transform:scaleX(0.96);color:#c9c9c9;">Network</span><div class="b" style="left:538px;top:821px;width:14px;height:13px;background:#f5c518;border-radius:2px;"></div><span class="t" style="left:558px;top:821.84px;font-size:12px;transform:scaleX(0.96);color:#c9c9c9;">Linux</span><div class="b" style="left:552px;top:845px;width:14px;height:13px;background:#f5d36b;border-radius:2px;"></div><span class="t" style="left:572px;top:845.84px;font-size:12px;transform:scaleX(0.96);color:#c9c9c9;">Ubuntu</span><span class="t" style="left:808px;top:295.84px;font-size:12px;transform:scaleX(0.96);color:#dcdcdc;">Name</span><span class="t" style="left:1068px;top:295.84px;font-size:12px;transform:scaleX(0.96);color:#dcdcdc;">Date modified</span><span class="t" style="left:1212px;top:295.84px;font-size:12px;transform:scaleX(0.96);color:#dcdcdc;">Type</span><span class="t" style="left:1329px;top:295.84px;font-size:12px;transform:scaleX(0.96);color:#dcdcdc;">Size</span><div class="b" style="left:1060px;top:288px;width:1px;height:24px;background:#3a3a3a;"></div><div class="b" style="left:1204px;top:288px;width:1px;height:24px;background:#3a3a3a;"></div><div class="b" style="left:1320px;top:288px;width:1px;height:24px;background:#3a3a3a;"></div><div class="b" style="left:1395px;top:288px;width:1px;height:24px;background:#3a3a3a;"></div><div class="b" style="left:811px;top:315px;width:13px;height:16px;background:#f5d36b;"></div><span class="t" style="left:829px;top:317.84px;font-size:12px;transform:scaleX(0.96);color:#c9c9c9;">bit word vs page</span><span class="t" style="left:1068px;top:317.84px;font-size:12px;transform:scaleX(0.96);color:#b4b4b4;">5/15/2025 3:10 PM</span><span class="t" style="left:1212px;top:317.84px;font-size:12px;transform:scaleX(0.96);color:#b4b4b4;">File folder</span><div class="b" style="left:811px;top:335.9px;width:13px;height:16px;background:#f5d36b;"></div><span class="t" style="left:829px;top:338.74px;font-size:12px;transform:scaleX(0.96);color:#c9c9c9;">bit word vs page backend</span><span class="t" style="left:1068px;top:338.74px;font-size:12px;transform:scaleX(0.96);color:#b4b4b4;">5/15/2025 3:10 PM</span><span class="t" style="left:1212px;top:338.74px;font-size:12px;transform:scaleX(0.96);color:#b4b4b4;">File folder</span><div class="b" style="left:811px;top:356.8px;width:13px;height:16px;background:#f5d36b;"></div><span class="t" style="left:829px;top:359.64px;font-size:12px;transform:scaleX(0.96);color:#c9c9c9;">chatting</span><span class="t" style="left:1068px;top:359.64px;font-size:12px;transform:scaleX(0.96);color:#b4b4b4;">5/16/2025 8:29 AM</span><span class="t" style="left:1212px;top:359.64px;font-size:12px;transform:scaleX(0.96);color:#b4b4b4;">File folder</span><div class="b" style="left:811px;top:377.7px;width:13px;height:16px;background:#f5d36b;"></div><span class="t" style="left:829px;top:380.54px;font-size:12px;transform:scaleX(0.96);color:#c9c9c9;">chromedriver-win64</span><span class="t" style="left:1068px;top:380.54px;font-size:12px;transform:scaleX(0.96);color:#b4b4b4;">5/16/2025 12:53 PM</span><span class="t" style="left:1212px;top:380.54px;font-size:12px;transform:scaleX(0.96);color:#b4b4b4;">File folder</span><div class="b" style="left:811px;top:398.6px;width:13px;height:16px;background:#f5d36b;"></div><span class="t" style="left:829px;top:401.44px;font-size:12px;transform:scaleX(0.96);color:#c9c9c9;">deepseekApiIntegrationTucker</span><span class="t" style="left:1068px;top:401.44px;font-size:12px;transform:scaleX(0.96);color:#b4b4b4;">5/16/2025 12:52 PM</span><span class="t" style="left:1212px;top:401.44px;font-size:12px;transform:scaleX(0.96);color:#b4b4b4;">File folder</span><div class="b" style="left:811px;top:419.5px;width:13px;height:16px;background:#f5d36b;"></div><span class="t" style="left:829px;top:422.34px;font-size:12px;transform:scaleX(0.96);color:#c9c9c9;">dump</span><span class="t" style="left:1068px;top:422.34px;font-size:12px;transform:scaleX(0.96);color:#b4b4b4;">11/15/2024 6:21 PM</span><span class="t" style="left:1212px;top:422.34px;font-size:12px;transform:scaleX(0.96);color:#b4b4b4;">File folder</span><div class="b" style="left:811px;top:440.4px;width:13px;height:16px;background:#f5d36b;"></div><span class="t" style="left:829px;top:443.24px;font-size:12px;transform:scaleX(0.96);color:#c9c9c9;">english watch backup from server with s...</span><span class="t" style="left:1068px;top:443.24px;font-size:12px;transform:scaleX(0.96);color:#b4b4b4;">11/25/2024 4:40 PM</span><span class="t" style="left:1212px;top:443.24px;font-size:12px;transform:scaleX(0.96);color:#b4b4b4;">File folder</span><div class="b" style="left:811px;top:461.3px;width:13px;height:16px;background:#f5d36b;"></div><span class="t" style="left:829px;top:464.14px;font-size:12px;transform:scaleX(0.96);color:#c9c9c9;">english_to_urdu</span><span class="t" style="left:1068px;top:464.14px;font-size:12px;transform:scaleX(0.96);color:#b4b4b4;">11/7/2024 11:46 AM</span><span class="t" style="left:1212px;top:464.14px;font-size:12px;transform:scaleX(0.96);color:#b4b4b4;">File folder</span><div class="b" style="left:811px;top:482.2px;width:13px;height:16px;background:#f5d36b;"></div><span class="t" style="left:829px;top:485.04px;font-size:12px;transform:scaleX(0.96);color:#c9c9c9;">extension_making</span><span class="t" style="left:1068px;top:485.04px;font-size:12px;transform:scaleX(0.96);color:#b4b4b4;">11/7/2024 11:46 AM</span><span class="t" style="left:1212px;top:485.04px;font-size:12px;transform:scaleX(0.96);color:#b4b4b4;">File folder</span><div class="b" style="left:811px;top:503.1px;width:13px;height:16px;background:#f5d36b;"></div><span class="t" style="left:829px;top:505.94px;font-size:12px;transform:scaleX(0.96);color:#c9c9c9;">flut</span><span class="t" style="left:1068px;top:505.94px;font-size:12px;transform:scaleX(0.96);color:#b4b4b4;">2/24/2025 3:40 PM</span><span class="t" style="left:1212px;top:505.94px;font-size:12px;transform:scaleX(0.96);color:#b4b4b4;">File folder</span><div class="b" style="left:811px;top:524px;width:13px;height:16px;background:#f5d36b;"></div><span class="t" style="left:829px;top:526.84px;font-size:12px;transform:scaleX(0.96);color:#c9c9c9;">flutter</span><span class="t" style="left:1068px;top:526.84px;font-size:12px;transform:scaleX(0.96);color:#b4b4b4;">1/31/2025 12:04 PM</span><span class="t" style="left:1212px;top:526.84px;font-size:12px;transform:scaleX(0.96);color:#b4b4b4;">File folder</span><div class="b" style="left:811px;top:544.9px;width:13px;height:16px;background:#f5d36b;"></div><span class="t" style="left:829px;top:547.74px;font-size:12px;transform:scaleX(0.96);color:#c9c9c9;">FlutterProject</span><span class="t" style="left:1068px;top:547.74px;font-size:12px;transform:scaleX(0.96);color:#b4b4b4;">1/31/2025 3:47 PM</span><span class="t" style="left:1212px;top:547.74px;font-size:12px;transform:scaleX(0.96);color:#b4b4b4;">File folder</span><div class="b" style="left:811px;top:565.8px;width:13px;height:16px;background:#f5d36b;"></div><span class="t" style="left:829px;top:568.64px;font-size:12px;transform:scaleX(0.96);color:#c9c9c9;">get api using</span><span class="t" style="left:1068px;top:568.64px;font-size:12px;transform:scaleX(0.96);color:#b4b4b4;">12/27/2024 3:27 PM</span><span class="t" style="left:1212px;top:568.64px;font-size:12px;transform:scaleX(0.96);color:#b4b4b4;">File folder</span><div class="b" style="left:811px;top:586.7px;width:13px;height:16px;background:#f5d36b;"></div><span class="t" style="left:829px;top:589.54px;font-size:12px;transform:scaleX(0.96);color:#c9c9c9;">hello</span><span class="t" style="left:1068px;top:589.54px;font-size:12px;transform:scaleX(0.96);color:#b4b4b4;">5/13/2025 4:02 PM</span><span class="t" style="left:1212px;top:589.54px;font-size:12px;transform:scaleX(0.96);color:#b4b4b4;">File folder</span><div class="b" style="left:811px;top:607.6px;width:13px;height:16px;background:#f5d36b;"></div><span class="t" style="left:829px;top:610.44px;font-size:12px;transform:scaleX(0.96);color:#c9c9c9;">hello2</span><span class="t" style="left:1068px;top:610.44px;font-size:12px;transform:scaleX(0.96);color:#b4b4b4;">5/13/2025 5:31 PM</span><span class="t" style="left:1212px;top:610.44px;font-size:12px;transform:scaleX(0.96);color:#b4b4b4;">File folder</span><div class="b" style="left:811px;top:628.5px;width:13px;height:16px;background:#f5d36b;"></div><span class="t" style="left:829px;top:631.34px;font-size:12px;transform:scaleX(0.96);color:#c9c9c9;">HSTT</span><span class="t" style="left:1068px;top:631.34px;font-size:12px;transform:scaleX(0.96);color:#b4b4b4;">2/5/2025 11:49 AM</span><span class="t" style="left:1212px;top:631.34px;font-size:12px;transform:scaleX(0.96);color:#b4b4b4;">File folder</span><div class="b" style="left:811px;top:649.4px;width:13px;height:16px;background:#f5d36b;"></div><span class="t" style="left:829px;top:652.24px;font-size:12px;transform:scaleX(0.96);color:#c9c9c9;">IELTS_ela</span><span class="t" style="left:1068px;top:652.24px;font-size:12px;transform:scaleX(0.96);color:#b4b4b4;">5/6/2025 12:31 PM</span><span class="t" style="left:1212px;top:652.24px;font-size:12px;transform:scaleX(0.96);color:#b4b4b4;">File folder</span><div class="b" style="left:811px;top:670.3px;width:13px;height:16px;background:#f5d36b;"></div><span class="t" style="left:829px;top:673.14px;font-size:12px;transform:scaleX(0.96);color:#c9c9c9;">mongodb database tools windows x86_...</span><span class="t" style="left:1068px;top:673.14px;font-size:12px;transform:scaleX(0.96);color:#b4b4b4;">11/6/2024 3:31 PM</span><span class="t" style="left:1212px;top:673.14px;font-size:12px;transform:scaleX(0.96);color:#b4b4b4;">File folder</span><div class="b" style="left:811px;top:691.2px;width:13px;height:16px;background:#f5d36b;"></div><span class="t" style="left:829px;top:694.04px;font-size:12px;transform:scaleX(0.96);color:#c9c9c9;">my chart</span><span class="t" style="left:1068px;top:694.04px;font-size:12px;transform:scaleX(0.96);color:#b4b4b4;">5/13/2025 3:25 PM</span><span class="t" style="left:1212px;top:694.04px;font-size:12px;transform:scaleX(0.96);color:#b4b4b4;">File folder</span><div class="b" style="left:811px;top:712.1px;width:13px;height:16px;background:#f5d36b;"></div><span class="t" style="left:829px;top:714.94px;font-size:12px;transform:scaleX(0.96);color:#c9c9c9;">my demo</span><span class="t" style="left:1068px;top:714.94px;font-size:12px;transform:scaleX(0.96);color:#b4b4b4;">5/13/2025 4:08 PM</span><span class="t" style="left:1212px;top:714.94px;font-size:12px;transform:scaleX(0.96);color:#b4b4b4;">File folder</span><div class="b" style="left:811px;top:733px;width:13px;height:16px;background:#f5d36b;"></div><span class="t" style="left:829px;top:735.84px;font-size:12px;transform:scaleX(0.96);color:#c9c9c9;">ocurd</span><span class="t" style="left:1068px;top:735.84px;font-size:12px;transform:scaleX(0.96);color:#b4b4b4;">8/5/2024 10:41 AM</span><span class="t" style="left:1212px;top:735.84px;font-size:12px;transform:scaleX(0.96);color:#b4b4b4;">File folder</span><div class="b" style="left:811px;top:753.9px;width:13px;height:16px;background:#f5d36b;"></div><span class="t" style="left:829px;top:756.74px;font-size:12px;transform:scaleX(0.96);color:#c9c9c9;">ocurd_android</span><span class="t" style="left:1068px;top:756.74px;font-size:12px;transform:scaleX(0.96);color:#b4b4b4;">2/20/2025 6:36 PM</span><span class="t" style="left:1212px;top:756.74px;font-size:12px;transform:scaleX(0.96);color:#b4b4b4;">File folder</span><div class="b" style="left:811px;top:774.8px;width:13px;height:16px;background:#f5d36b;"></div><span class="t" style="left:829px;top:777.64px;font-size:12px;transform:scaleX(0.96);color:#c9c9c9;">ocurd_flutter</span><span class="t" style="left:1068px;top:777.64px;font-size:12px;transform:scaleX(0.96);color:#b4b4b4;">2/20/2025 6:43 PM</span><span class="t" style="left:1212px;top:777.64px;font-size:12px;transform:scaleX(0.96);color:#b4b4b4;">File folder</span><div class="b" style="left:811px;top:795.7px;width:13px;height:16px;background:#f5d36b;"></div><span class="t" style="left:829px;top:798.54px;font-size:12px;transform:scaleX(0.96);color:#c9c9c9;">p</span><span class="t" style="left:1068px;top:798.54px;font-size:12px;transform:scaleX(0.96);color:#b4b4b4;">5/14/2025 4:30 PM</span><span class="t" style="left:1212px;top:798.54px;font-size:12px;transform:scaleX(0.96);color:#b4b4b4;">File folder</span><div class="b" style="left:811px;top:816.6px;width:13px;height:16px;background:#f5d36b;"></div><span class="t" style="left:829px;top:819.44px;font-size:12px;transform:scaleX(0.96);color:#c9c9c9;">pass_extension</span><span class="t" style="left:1068px;top:819.44px;font-size:12px;transform:scaleX(0.96);color:#b4b4b4;">11/7/2024 11:46 AM</span><span class="t" style="left:1212px;top:819.44px;font-size:12px;transform:scaleX(0.96);color:#b4b4b4;">File folder</span><div class="b" style="left:811px;top:837.5px;width:13px;height:16px;background:#f5d36b;"></div><span class="t" style="left:829px;top:840.34px;font-size:12px;transform:scaleX(0.96);color:#c9c9c9;">sitemplates_7-3-0001-7000</span><span class="t" style="left:1068px;top:840.34px;font-size:12px;transform:scaleX(0.96);color:#b4b4b4;">2/5/2025 3:07 PM</span><span class="t" style="left:1212px;top:840.34px;font-size:12px;transform:scaleX(0.96);color:#b4b4b4;">File folder</span><div class="b" style="left:811px;top:858.4px;width:13px;height:16px;background:#f5d36b;"></div><span class="t" style="left:829px;top:861.24px;font-size:12px;transform:scaleX(0.96);color:#c9c9c9;">scrap from dictionary com</span><span class="t" style="left:1068px;top:861.24px;font-size:12px;transform:scaleX(0.96);color:#b4b4b4;">12/26/2024 4:11 PM</span><span class="t" style="left:1212px;top:861.24px;font-size:12px;transform:scaleX(0.96);color:#b4b4b4;">File folder</span><div class="b" style="left:800px;top:877.3px;width:595px;height:21px;background:#3a3a3a;"></div><div class="b" style="left:811px;top:879.3px;width:13px;height:16px;background:#f5d36b;"></div><span class="t" style="left:829px;top:882.14px;font-size:12px;transform:scaleX(0.96);color:#c9c9c9;">screen record</span><span class="t" style="left:1068px;top:882.14px;font-size:12px;transform:scaleX(0.96);color:#b4b4b4;">5/16/2025 2:45 PM</span><span class="t" style="left:1212px;top:882.14px;font-size:12px;transform:scaleX(0.96);color:#b4b4b4;">File folder</span><div class="b" style="left:811px;top:900.2px;width:13px;height:16px;background:#f5d36b;"></div><span class="t" style="left:829px;top:903.04px;font-size:12px;transform:scaleX(0.96);color:#c9c9c9;">Screenshot_Part</span><span class="t" style="left:1068px;top:903.04px;font-size:12px;transform:scaleX(0.96);color:#b4b4b4;">11/7/2024 11:42 AM</span><span class="t" style="left:1212px;top:903.04px;font-size:12px;transform:scaleX(0.96);color:#b4b4b4;">File folder</span><div class="b" style="left:811px;top:921.1px;width:13px;height:16px;background:#f5d36b;"></div><span class="t" style="left:829px;top:923.94px;font-size:12px;transform:scaleX(0.96);color:#c9c9c9;">Sourav Urdu</span><span class="t" style="left:1068px;top:923.94px;font-size:12px;transform:scaleX(0.96);color:#b4b4b4;">11/7/2024 11:38 AM</span><span class="t" style="left:1212px;top:923.94px;font-size:12px;transform:scaleX(0.96);color:#b4b4b4;">File folder</span><div class="b" style="left:811px;top:942px;width:13px;height:16px;background:#f5d36b;"></div><span class="t" style="left:829px;top:944.84px;font-size:12px;transform:scaleX(0.96);color:#c9c9c9;">sql to json</span><span class="t" style="left:1068px;top:944.84px;font-size:12px;transform:scaleX(0.96);color:#b4b4b4;">11/15/2024 10:45 AM</span><span class="t" style="left:1212px;top:944.84px;font-size:12px;transform:scaleX(0.96);color:#b4b4b4;">File folder</span><div class="b" style="left:811px;top:962.9px;width:13px;height:16px;background:#f5d36b;"></div><span class="t" style="left:829px;top:965.74px;font-size:12px;transform:scaleX(0.96);color:#c9c9c9;">sql word to json</span><span class="t" style="left:1068px;top:965.74px;font-size:12px;transform:scaleX(0.96);color:#b4b4b4;">1/14/2025 11:20 AM</span><span class="t" style="left:1212px;top:965.74px;font-size:12px;transform:scaleX(0.96);color:#b4b4b4;">File folder</span><div class="b" style="left:811px;top:983.8px;width:13px;height:16px;background:#f5d36b;"></div><span class="t" style="left:829px;top:986.64px;font-size:12px;transform:scaleX(0.96);color:#c9c9c9;">test 1 (ma</span><span class="t" style="left:1068px;top:986.64px;font-size:12px;transform:scaleX(0.96);color:#b4b4b4;">11/26/2024 2:01 PM</span><span class="t" style="left:1212px;top:986.64px;font-size:12px;transform:scaleX(0.96);color:#b4b4b4;">File folder</span><div class="b" style="left:508px;top:992px;width:1219px;height:23px;background:#2b2b2b;"></div><span class="t" style="left:518px;top:997.84px;font-size:12px;transform:scaleX(0.96);color:#d8d8d8;">33 items   |   1 item selected   |</span><div class="b" style="left:1727px;top:0px;width:1713px;height:1400px;background:#181818;"></div><div class="b" style="left:1727px;top:0px;width:1713px;height:49px;background:#1f1f1f;"></div><div class="b" style="left:1727px;top:49px;width:1713px;height:1px;background:#2b2b2b;"></div><svg class="ic" style="left:1744.500px;top:12.500px;width:24px;height:24px" viewBox="0 0 24 24"><path fill="#1a8ad4" fill-rule="evenodd" d="M17.500 .8L23.300 3.600v16.800L17.500 23.200 7.300 13.600 3.100 16.900 1 15.700 4.900 12 1 8.300l2.100-1.200 4.200 3.300zM17.500 7.300L11.300 12l6.200 4.700z"/><path fill="#2fb3f7" d="M17.500 .8L23.300 3.600v16.800L17.500 23.200z"/></svg><span class="t" style="left:1793.5px;top:16.46px;font-size:18px;transform:scaleX(0.92);color:#9d9d9d;">File</span><span class="t" style="left:1844.4px;top:16.46px;font-size:18px;color:#9d9d9d;">Edit</span><span class="t" style="left:1898.3px;top:16.46px;font-size:18px;transform:scaleX(1.01);color:#9d9d9d;">Selection</span><span class="t" style="left:1996.3px;top:16.46px;font-size:18px;transform:scaleX(1.03);color:#9d9d9d;">View</span><span class="t" style="left:2058.9px;top:16.46px;font-size:18px;transform:scaleX(0.99);color:#9d9d9d;">Go</span><svg class="ic" style="left:2110px;top:13.2px;width:23px;height:23px;color:#9d9d9d;"><use href="#dots"/></svg><svg class="ic" style="left:2190px;top:13.5px;width:23px;height:23px;color:#9d9d9d;"><use href="#arrl"/></svg><svg class="ic" style="left:2227.5px;top:13.5px;width:23px;height:23px;color:#9d9d9d;"><use href="#arrr"/></svg><div class="b" style="left:2269.5px;top:8.5px;width:651px;height:32.5px;background:#292929;border:1px solid #3a3a3a;border-radius:9px;box-sizing:border-box;"></div><svg class="ic" style="left:2530.5px;top:14.5px;width:21px;height:21px;color:#9d9d9d;"><use href="#search"/></svg><span class="t" style="left:2555.5px;top:16.06px;font-size:18px;transform:scaleX(0.96);color:#9d9d9d;">screen-record</span><svg class="ic" style="left:2938.5px;top:13px;width:24px;height:24px;color:#9d9d9d;"><use href="#copilot"/></svg><svg class="ic" style="left:2966px;top:18px;width:15px;height:15px;color:#9d9d9d;"><use href="#chevd"/></svg><svg class="ic" style="left:3157.5px;top:13px;width:23px;height:23px;color:#9d9d9d;"><use href="#lay0"/></svg><svg class="ic" style="left:3194.5px;top:13px;width:23px;height:23px;color:#9d9d9d;"><use href="#lay1"/></svg><svg class="ic" style="left:3231.5px;top:13px;width:23px;height:23px;color:#9d9d9d;"><use href="#lay2"/></svg><svg class="ic" style="left:3269.5px;top:13px;width:23px;height:23px;color:#9d9d9d;"><use href="#lay3"/></svg><svg class="ic" style="left:3315.8px;top:15.5px;width:17px;height:17px;color:#9d9d9d;"><use href="#wmin"/></svg><svg class="ic" style="left:3361.7px;top:17px;width:16px;height:16px;color:#9d9d9d;"><use href="#wmax"/></svg><svg class="ic" style="left:3406.3px;top:15.5px;width:19px;height:19px;color:#9d9d9d;"><use href="#close"/></svg><div class="b" style="left:1799px;top:50px;width:1px;height:1318px;background:#2b2b2b;"></div><div class="b" style="left:1730px;top:50px;width:3px;height:69px;background:#2a6fb5;"></div><svg class="ic" style="left:1746.5px;top:66.55px;width:36px;height:36px;color:#d7d7d7;"><use href="#files"/></svg><svg class="ic" style="left:1746.5px;top:135.65px;width:36px;height:36px;color:#868686;"><use href="#search"/></svg><svg class="ic" style="left:1746.5px;top:204.75px;width:36px;height:36px;color:#868686;"><use href="#scm"/></svg><svg class="ic" style="left:1746.5px;top:273.85px;width:36px;height:36px;color:#868686;"><use href="#debug"/></svg><svg class="ic" style="left:1746.5px;top:342.95px;width:36px;height:36px;color:#868686;"><use href="#ext"/></svg><svg class="ic" style="left:1746.5px;top:412.05px;width:36px;height:36px;color:#868686;"><use href="#remoteexp"/></svg><svg class="ic" style="left:1747px;top:481.65px;width:35px;height:35px" viewBox="0 0 35 35"><circle cx="17.500" cy="17.500" r="17.500" fill="#868686"/><path fill="#181818" d="M30 6L15 17.500l15 9.500-2 2.500L11 18.500 28 4z"/><circle cx="29" cy="17.500" r="2" fill="#181818"/></svg><svg class="ic" style="left:1747px;top:550.25px;width:35px;height:35px" viewBox="0 0 35 35"><g fill="none" stroke="#868686" stroke-width="2.500"><circle cx="17.500" cy="19" r="14"/><circle cx="17.500" cy="19" r="9.500"/><circle cx="6" cy="6.500" r="2.500"/><circle cx="29" cy="6.500" r="2.500"/></g><path fill="#868686" d="M8.500 17h18v3a4 4 0 0 1-8 0 4 4 0 0 1-2 0 4 4 0 0 1-8 0z"/></svg><svg class="ic" style="left:1748.5px;top:1247.5px;width:33px;height:33px;color:#868686;"><use href="#account"/></svg><svg class="ic" style="left:1748.5px;top:1315px;width:33px;height:33px;color:#868686;"><use href="#gear"/></svg><div class="b" style="left:1765px;top:1333.5px;width:24px;height:24px;background:#0078d4;border-radius:12px;"></div><span class="t" style="left:1773.38px;top:1340px;font-size:13px;color:#fff;font-weight:bold;">1</span><div class="b" style="left:2114px;top:50px;width:1px;height:1318px;background:#2b2b2b;"></div><span class="t" style="left:1829.3px;top:68.26px;font-size:15.4px;transform:scaleX(0.85);color:#cccccc;">EXPLORER</span><svg class="ic" style="left:2071.5px;top:64.1px;width:23px;height:23px;color:#cccccc;"><use href="#dots"/></svg><svg class="ic" style="left:1802.5px;top:105.5px;width:23px;height:23px;color:#cccccc;"><use href="#chevd"/></svg><span class="t" style="left:1829.3px;top:109.66px;font-size:15.4px;transform:scaleX(0.93);color:#cccccc;font-weight:bold;">SCREEN-RECORD</span><svg class="ic" style="left:1968.9px;top:105.5px;width:23px;height:23px;color:#cccccc;"><use href="#newfile"/></svg><svg class="ic" style="left:2003.7px;top:105.5px;width:23px;height:23px;color:#cccccc;"><use href="#newfolder"/></svg><svg class="ic" style="left:2037.4px;top:105.5px;width:23px;height:23px;color:#cccccc;"><use href="#refresh"/></svg><svg class="ic" style="left:2072.1px;top:105.5px;width:23px;height:23px;color:#cccccc;"><use href="#collapse"/></svg><svg class="ic" style="left:1821.5px;top:136.44px;width:23px;height:23px;color:#cccccc;"><use href="#chevr"/></svg><svg class="ic" style="left:1850.5px;top:137.94px;width:22px;height:20px;"><use href="#fnode"/></svg><span class="t" style="left:1881px;top:139px;font-size:18px;transform:scaleX(1.02);color:#8c8c8c;">node_modules</span><svg class="ic" style="left:1821.5px;top:168.12px;width:23px;height:23px;color:#cccccc;"><use href="#chevd"/></svg><svg class="ic" style="left:1850.5px;top:169.62px;width:22px;height:20px;"><use href="#fsrc"/></svg><span class="t" style="left:1881px;top:170.68px;font-size:18px;transform:scaleX(0.93);color:#cccccc;">src</span><svg class="ic" style="left:1862px;top:201.3px;width:20px;height:20px;"><use href="#cssbg"/></svg><span class="t" style="left:1864.8px;top:210.46px;font-size:9.5px;transform:scaleX(0.95);color:#fff;font-weight:bold;">css</span><span class="t" style="left:1892.3px;top:202.36px;font-size:18px;transform:scaleX(0.96);color:#cccccc;">index.css</span><svg class="ic" style="left:1861.75px;top:232.73px;width:20.5px;height:20.5px;"><use href="#html5"/></svg><span class="t" style="left:1892.3px;top:234.04px;font-size:18px;transform:scaleX(1.04);color:#cccccc;">index.html</span><span class="t" style="left:1863.5px;top:265.6px;font-size:18.5px;transform:scaleX(0.77);color:#e6cd3c;font-weight:bold;">JS</span><span class="t" style="left:1892.3px;top:265.72px;font-size:18px;transform:scaleX(1.02);color:#cccccc;">preload.js</span><span class="t" style="left:1863.5px;top:297.28px;font-size:18.5px;transform:scaleX(0.77);color:#e6cd3c;font-weight:bold;">JS</span><span class="t" style="left:1892.3px;top:297.4px;font-size:18px;transform:scaleX(1.02);color:#cccccc;">render.js</span><svg class="ic" style="left:1862px;top:332.02px;width:20px;height:12px;"><use href="#phpbg"/></svg><span class="t" style="left:1865.3px;top:333.95px;font-size:8px;transform:scaleX(0.92);color:#222a50;font-weight:bold;font-style:italic;">php</span><span class="t" style="left:1892.3px;top:329.08px;font-size:18px;transform:scaleX(1.05);color:#cccccc;">upload.php</span><svg class="ic" style="left:1850.75px;top:359.45px;width:20.5px;height:20.5px;"><use href="#gitf"/></svg><span class="t" style="left:1881px;top:360.76px;font-size:18px;transform:scaleX(1.06);color:#cccccc;">.gitignore</span><span class="t" style="left:1852.5px;top:392.32px;font-size:18.5px;transform:scaleX(0.77);color:#e6cd3c;font-weight:bold;">JS</span><span class="t" style="left:1881px;top:392.44px;font-size:18px;transform:scaleX(1.03);color:#cccccc;">forge.config.js</span><div class="b" style="left:1800px;top:417.22px;width:314px;height:31.68px;background:#37373d;"></div><span class="t" style="left:1852.5px;top:424px;font-size:18.5px;transform:scaleX(0.77);color:#e6cd3c;font-weight:bold;">JS</span><span class="t" style="left:1881px;top:424.12px;font-size:18px;transform:scaleX(0.99);color:#e0e0e0;">main.js</span><svg class="ic" style="left:1851px;top:454.74px;width:20px;height:20px;"><use href="#npmf"/></svg><span class="t" style="left:1881px;top:455.8px;font-size:18px;transform:scaleX(1.02);color:#cccccc;">package-lock.json</span><svg class="ic" style="left:1851px;top:486.42px;width:20px;height:20px;"><use href="#npmf"/></svg><span class="t" style="left:1881px;top:487.48px;font-size:18px;color:#cccccc;">package.json</span><div class="b" style="left:1800px;top:1273px;width:314px;height:1px;background:#2b2b2b;"></div><svg class="ic" style="left:1803px;top:1277.5px;width:23px;height:23px;color:#cccccc;"><use href="#chevr"/></svg><span class="t" style="left:1829.3px;top:1281.66px;font-size:15.4px;transform:scaleX(0.98);color:#cccccc;font-weight:bold;">OUTLINE</span><div class="b" style="left:1800px;top:1304.68px;width:314px;height:1px;background:#2b2b2b;"></div><svg class="ic" style="left:1803px;top:1309.18px;width:23px;height:23px;color:#cccccc;"><use href="#chevr"/></svg><span class="t" style="left:1829.3px;top:1313.34px;font-size:15.4px;color:#cccccc;font-weight:bold;">TIMELINE</span><div class="b" style="left:1800px;top:1336.36px;width:314px;height:1px;background:#2b2b2b;"></div><svg class="ic" style="left:1803px;top:1340.86px;width:23px;height:23px;color:#cccccc;"><use href="#chevr"/></svg><span class="t" style="left:1829.3px;top:1345.02px;font-size:15.4px;color:#cccccc;font-weight:bold;">RUNNING TASKS</span><div class="b" style="left:2115px;top:50px;width:1325px;height:854px;background:#1f1f1f;"></div><div class="b" style="left:2115px;top:50px;width:1325px;height:49px;background:#181818;"></div><div class="b" style="left:2115px;top:99px;width:1325px;height:1px;background:#2b2b2b;"></div><div class="b" style="left:2287.6px;top:50px;width:1px;height:49px;background:#2b2b2b;"></div><svg class="ic" style="left:2131.25px;top:65.25px;width:20.5px;height:20.5px;"><use href="#html5"/></svg><span class="t" style="left:2162px;top:67.06px;font-size:18px;transform:scaleX(1.04);color:#9d9d9d;">index.html</span><div class="b" style="left:2460.4px;top:50px;width:1px;height:49px;background:#2b2b2b;"></div><span class="t" style="left:2306.6px;top:66.44px;font-size:18.5px;transform:scaleX(0.77);color:#e6cd3c;font-weight:bold;">JS</span><span class="t" style="left:2335.6px;top:67.06px;font-size:18px;transform:scaleX(1.01);color:#9d9d9d;">render.js</span><div class="b" style="left:2633.5px;top:50px;width:1px;height:49px;background:#2b2b2b;"></div><span class="t" style="left:2479.4px;top:66.44px;font-size:18.5px;transform:scaleX(0.77);color:#e6cd3c;font-weight:bold;">JS</span><span class="t" style="left:2508.4px;top:67.06px;font-size:18px;transform:scaleX(1.02);color:#9d9d9d;">preload.js</span><div class="b" style="left:2634.5px;top:50px;width:172.2px;height:50px;background:#1f1f1f;"></div><div class="b" style="left:2634.5px;top:50px;width:172.2px;height:1.5px;background:#0078d4;"></div><svg class="ic" style="left:2775px;top:64px;width:23px;height:23px;color:#e8e8e8;"><use href="#close"/></svg><div class="b" style="left:2805.7px;top:50px;width:1px;height:50px;background:#2b2b2b;"></div><span class="t" style="left:2652.5px;top:66.44px;font-size:18.5px;transform:scaleX(0.77);color:#e6cd3c;font-weight:bold;">JS</span><span class="t" style="left:2681.5px;top:67.06px;font-size:18px;transform:scaleX(0.99);color:#ffffff;">main.js</span><div class="b" style="left:2987.8px;top:50px;width:1px;height:49px;background:#2b2b2b;"></div><svg class="ic" style="left:2823.2px;top:69.5px;width:20px;height:12px;"><use href="#phpbg"/></svg><span class="t" style="left:2826.5px;top:71.43px;font-size:8px;transform:scaleX(0.92);color:#222a50;font-weight:bold;font-style:italic;">php</span><span class="t" style="left:2853.7px;top:67.06px;font-size:18px;transform:scaleX(1.05);color:#9d9d9d;">upload.php</span><div class="b" style="left:3160.3px;top:50px;width:1px;height:49px;background:#2b2b2b;"></div><svg class="ic" style="left:3005.3px;top:65.5px;width:20px;height:20px;"><use href="#cssbg"/></svg><span class="t" style="left:3008.1px;top:74.66px;font-size:9.5px;transform:scaleX(0.95);color:#fff;font-weight:bold;">css</span><span class="t" style="left:3035.8px;top:67.06px;font-size:18px;transform:scaleX(0.97);color:#9d9d9d;">index.css</span><svg class="ic" style="left:3320.5px;top:63.5px;width:23px;height:23px;color:#cccccc;"><use href="#run"/></svg><svg class="ic" style="left:3358.9px;top:63.5px;width:23px;height:23px;color:#cccccc;"><use href="#split"/></svg><svg class="ic" style="left:3395.8px;top:63.5px;width:23px;height:23px;color:#cccccc;"><use href="#dots"/></svg><span class="t" style="left:2142px;top:107.94px;font-size:18.5px;transform:scaleX(0.77);color:#e6cd3c;font-weight:bold;">JS</span><span class="t" style="left:2171px;top:107.76px;font-size:18px;transform:scaleX(0.99);color:#a9a9a9;">main.js</span><svg class="ic" style="left:2228.5px;top:105.5px;width:22px;height:22px;color:#a9a9a9;"><use href="#chevr"/></svg><span class="t" style="left:2251px;top:107.76px;font-size:18px;transform:scaleX(0.87);color:#a9a9a9;">...</span><div class="b" style="left:0;top:0;width:3440px;height:904px;overflow:hidden"><div class="b" style="left:2209px;top:572.74px;width:1093px;height:25.92px;border-top:2px solid #292929;border-bottom:2px solid #292929;box-sizing:border-box;"></div><div class="b" style="left:2209px;top:728.26px;width:1093px;height:25.92px;background:#212c38;"></div><div class="b" style="left:2209px;top:287.62px;width:1px;height:259.2px;background:#3b3b3b;"></div><div class="b" style="left:2209px;top:702.34px;width:1px;height:25.92px;background:#3b3b3b;"></div><div class="b" style="left:2209px;top:754.18px;width:1px;height:155.52px;background:#3b3b3b;"></div><div class="b" style="left:2229.58px;top:313.54px;width:1px;height:155.52px;background:#3b3b3b;"></div><div class="b" style="left:2229.58px;top:857.86px;width:1px;height:51.84px;background:#3b3b3b;"></div><div class="b" style="left:2250.16px;top:391.3px;width:1px;height:51.84px;background:#3b3b3b;"></div><span class="m" style="left:2161.21px;top:136.55px;font-size:17.15px;color:#6e7681;">1</span><span class="m" style="left:2208.8px;top:136.55px;font-size:17.15px;"><i style="color:#569cd6">const </i><i style="color:#ffd700">{</i><i style="color:#4fc1ff"> app</i><i style="color:#d4d4d4">, </i><i style="color:#4ec9b0">BrowserWindow</i><i style="color:#d4d4d4">, </i><i style="color:#4fc1ff">ipcMain</i><i style="color:#d4d4d4">, </i><i style="color:#4fc1ff">desktopCapturer</i><i style="color:#d4d4d4"> </i><i style="color:#ffd700">}</i><i style="color:#d4d4d4"> = </i><i style="color:#dcdcaa">require</i><i style="color:#ffd700">(</i><i style="color:#ce9178">'electron'</i><i style="color:#ffd700">)</i><i style="color:#d4d4d4">;</i></span><span class="m" style="left:2161.21px;top:162.47px;font-size:17.15px;color:#6e7681;">2</span><span class="m" style="left:2208.8px;top:162.47px;font-size:17.15px;"><i style="color:#569cd6">const </i><i style="color:#4fc1ff">path</i><i style="color:#d4d4d4"> = </i><i style="color:#dcdcaa">require</i><i style="color:#ffd700">(</i><i style="color:#ce9178">'path'</i><i style="color:#ffd700">)</i><i style="color:#d4d4d4">;</i></span><span class="m" style="left:2161.21px;top:188.39px;font-size:17.15px;color:#6e7681;">3</span><span class="m" style="left:2208.8px;top:188.39px;font-size:17.15px;"><i style="color:#569cd6">const </i><i style="color:#dcdcaa">fetch</i><i style="color:#d4d4d4"> = </i><i style="color:#dcdcaa">require</i><i style="color:#ffd700">(</i><i style="color:#ce9178">'node-fetch'</i><i style="color:#ffd700">)</i><i style="color:#d4d4d4">;</i><i style="color:#d4d4d4">        </i><i style="color:#6a9955">// Make sure it's v2.x (for CommonJS support)</i></span><span class="m" style="left:2161.21px;top:214.31px;font-size:17.15px;color:#6e7681;">4</span><span class="m" style="left:2208.8px;top:214.31px;font-size:17.15px;"><i style="color:#569cd6">const </i><i style="color:#4ec9b0">FormData</i><i style="color:#d4d4d4"> = </i><i style="color:#dcdcaa">require</i><i style="color:#ffd700">(</i><i style="color:#ce9178">'form-data'</i><i style="color:#ffd700">)</i><i style="color:#d4d4d4">;</i><i style="color:#d4d4d4">      </i><i style="color:#6a9955">// Handles multipart/form-data</i></span><span class="m" style="left:2161.21px;top:240.23px;font-size:17.15px;color:#6e7681;">5</span><span class="m" style="left:2161.21px;top:266.15px;font-size:17.15px;color:#6e7681;">6</span><span class="m" style="left:2208.8px;top:266.15px;font-size:17.15px;"><i style="color:#569cd6">function </i><i style="color:#dcdcaa">createWindow</i><i style="color:#ffd700">()</i><i style="color:#d4d4d4"> </i><i style="color:#ffd700">{</i></span><span class="m" style="left:2161.21px;top:292.07px;font-size:17.15px;color:#6e7681;">7</span><span class="m" style="left:2208.8px;top:292.07px;font-size:17.15px;"><i style="color:#569cd6">  const </i><i style="color:#4fc1ff">win</i><i style="color:#d4d4d4"> = </i><i style="color:#569cd6">new </i><i style="color:#4ec9b0">BrowserWindow</i><i style="color:#da70d6">(</i><i style="color:#179fff">{</i></span><span class="m" style="left:2161.21px;top:317.99px;font-size:17.15px;color:#6e7681;">8</span><span class="m" style="left:2208.8px;top:317.99px;font-size:17.15px;"><i style="color:#9cdcfe">    width</i><i style="color:#d4d4d4">: </i><i style="color:#b5cea8">1000</i><i style="color:#d4d4d4">,</i></span><span class="m" style="left:2161.21px;top:343.91px;font-size:17.15px;color:#6e7681;">9</span><span class="m" style="left:2208.8px;top:343.91px;font-size:17.15px;"><i style="color:#9cdcfe">    height</i><i style="color:#d4d4d4">: </i><i style="color:#b5cea8">700</i><i style="color:#d4d4d4">,</i></span><span class="m" style="left:2150.92px;top:369.83px;font-size:17.15px;color:#6e7681;">10</span><span class="m" style="left:2208.8px;top:369.83px;font-size:17.15px;"><i style="color:#9cdcfe">    webPreferences</i><i style="color:#d4d4d4">: </i><i style="color:#ffd700">{</i></span><span class="m" style="left:2150.92px;top:395.75px;font-size:17.15px;color:#6e7681;">11</span><span class="m" style="left:2208.8px;top:395.75px;font-size:17.15px;"><i style="color:#9cdcfe">      contextIsolation</i><i style="color:#d4d4d4">: </i><i style="color:#569cd6">true</i><i style="color:#d4d4d4">,</i></span><span class="m" style="left:2150.92px;top:421.67px;font-size:17.15px;color:#6e7681;">12</span><span class="m" style="left:2208.8px;top:421.67px;font-size:17.15px;"><i style="color:#9cdcfe">      preload</i><i style="color:#d4d4d4">: </i><i style="color:#4fc1ff">path</i><i style="color:#d4d4d4">.</i><i style="color:#dcdcaa">join</i><i style="color:#da70d6">(</i><i style="color:#9cdcfe">__dirname</i><i style="color:#d4d4d4">, </i><i style="color:#ce9178">'src'</i><i style="color:#d4d4d4">, </i><i style="color:#ce9178">'preload.js'</i><i style="color:#da70d6">)</i><i style="color:#d4d4d4">,</i></span><span class="m" style="left:2150.92px;top:447.59px;font-size:17.15px;color:#6e7681;">13</span><span class="m" style="left:2208.8px;top:447.59px;font-size:17.15px;"><i style="color:#d4d4d4">    </i><i style="color:#ffd700">}</i><i style="color:#d4d4d4">,</i></span><span class="m" style="left:2150.92px;top:473.51px;font-size:17.15px;color:#6e7681;">14</span><span class="m" style="left:2208.8px;top:473.51px;font-size:17.15px;"><i style="color:#d4d4d4">  </i><i style="color:#179fff">}</i><i style="color:#da70d6">)</i><i style="color:#d4d4d4">;</i></span><span class="m" style="left:2150.92px;top:499.43px;font-size:17.15px;color:#6e7681;">15</span><span class="m" style="left:2150.92px;top:525.35px;font-size:17.15px;color:#6e7681;">16</span><span class="m" style="left:2208.8px;top:525.35px;font-size:17.15px;"><i style="color:#4fc1ff">  win</i><i style="color:#d4d4d4">.</i><i style="color:#dcdcaa">loadFile</i><i style="color:#da70d6">(</i><i style="color:#4fc1ff">path</i><i style="color:#d4d4d4">.</i><i style="color:#dcdcaa">join</i><i style="color:#179fff">(</i><i style="color:#9cdcfe">__dirname</i><i style="color:#d4d4d4">, </i><i style="color:#ce9178">'src'</i><i style="color:#d4d4d4">, </i><i style="color:#ce9178">'index.html'</i><i style="color:#179fff">)</i><i style="color:#da70d6">)</i><i style="color:#d4d4d4">;</i></span><span class="m" style="left:2150.92px;top:551.27px;font-size:17.15px;color:#6e7681;">17</span><span class="m" style="left:2208.8px;top:551.27px;font-size:17.15px;"><i style="color:#ffd700">}</i></span><span class="m" style="left:2150.92px;top:577.19px;font-size:17.15px;color:#cccccc;">18</span><span class="m" style="left:2150.92px;top:603.11px;font-size:17.15px;color:#6e7681;">19</span><span class="m" style="left:2208.8px;top:603.11px;font-size:17.15px;"><i style="color:#4fc1ff">app</i><i style="color:#d4d4d4">.</i><i style="color:#dcdcaa">whenReady</i><i style="color:#ffd700">()</i><i style="color:#d4d4d4">.</i><i style="color:#dcdcaa">then</i><i style="color:#ffd700">(</i><i style="color:#dcdcaa">createWindow</i><i style="color:#ffd700">)</i><i style="color:#d4d4d4">;</i></span><span class="m" style="left:2150.92px;top:629.03px;font-size:17.15px;color:#6e7681;">20</span><span class="m" style="left:2150.92px;top:654.95px;font-size:17.15px;color:#6e7681;">21</span><span class="m" style="left:2208.8px;top:654.95px;font-size:17.15px;"><i style="color:#6a9955">// </i></span><svg class="ic" style="left:2243px;top:651.6px;width:20px;height:20px;"><use href="#emoji"/></svg><span class="m" style="left:2265.38px;top:654.95px;font-size:17.15px;"><i style="color:#6a9955"> Provide screen sources to the renderer</i></span><span class="m" style="left:2150.92px;top:680.87px;font-size:17.15px;color:#6e7681;">22</span><span class="m" style="left:2208.8px;top:680.87px;font-size:17.15px;"><i style="color:#4fc1ff">ipcMain</i><i style="color:#d4d4d4">.</i><i style="color:#dcdcaa">handle</i><i style="color:#ffd700">(</i><i style="color:#ce9178">'get-sources'</i><i style="color:#d4d4d4">, </i><i style="color:#569cd6">async </i><i style="color:#da70d6">()</i><i style="color:#d4d4d4"> </i><i style="color:#569cd6">=&gt;</i><i style="color:#d4d4d4"> </i><i style="color:#da70d6">{</i></span><span class="m" style="left:2150.92px;top:706.79px;font-size:17.15px;color:#6e7681;">23</span><span class="m" style="left:2208.8px;top:706.79px;font-size:17.15px;"><i style="color:#c586c0">  return </i><i style="color:#c586c0">await </i><i style="color:#4fc1ff">desktopCapturer</i><i style="color:#d4d4d4">.</i><i style="color:#dcdcaa">getSources</i><i style="color:#179fff">(</i><i style="color:#ffd700">{</i><i style="color:#9cdcfe"> types</i><i style="color:#d4d4d4">: </i><i style="color:#da70d6">[</i><i style="color:#ce9178">'screen'</i><i style="color:#da70d6">]</i><i style="color:#d4d4d4"> </i><i style="color:#ffd700">}</i><i style="color:#179fff">)</i><i style="color:#d4d4d4">;</i></span><span class="m" style="left:2150.92px;top:732.71px;font-size:17.15px;color:#6e7681;">24</span><span class="m" style="left:2208.8px;top:732.71px;font-size:17.15px;"><i style="color:#da70d6">}</i><i style="color:#ffd700">)</i><i style="color:#d4d4d4">;</i></span><span class="m" style="left:2150.92px;top:758.63px;font-size:17.15px;color:#6e7681;">28</span><span class="m" style="left:2208.8px;top:758.63px;font-size:17.15px;"><i style="color:#569cd6">  const </i><i style="color:#4fc1ff">filename</i><i style="color:#d4d4d4"> = </i><i style="color:#ce9178">`screenshot-</i><i style="color:#569cd6">${</i><i style="color:#4ec9b0">Date</i><i style="color:#d4d4d4">.</i><i style="color:#dcdcaa">now</i><i style="color:#ffd700">()</i><i style="color:#569cd6">}</i><i style="color:#ce9178">.png`</i><i style="color:#d4d4d4">;</i></span><span class="m" style="left:2150.92px;top:784.55px;font-size:17.15px;color:#6e7681;">29</span><span class="m" style="left:2150.92px;top:810.47px;font-size:17.15px;color:#6e7681;">30</span><span class="m" style="left:2208.8px;top:810.47px;font-size:17.15px;"><i style="color:#569cd6">  const </i><i style="color:#4fc1ff">form</i><i style="color:#d4d4d4"> = </i><i style="color:#569cd6">new </i><i style="color:#4ec9b0">FormData</i><i style="color:#179fff">()</i><i style="color:#d4d4d4">;</i></span><span class="m" style="left:2150.92px;top:836.39px;font-size:17.15px;color:#6e7681;">31</span><span class="m" style="left:2208.8px;top:836.39px;font-size:17.15px;"><i style="color:#4fc1ff">  form</i><i style="color:#d4d4d4">.</i><i style="color:#dcdcaa">append</i><i style="color:#179fff">(</i><i style="color:#ce9178">'file'</i><i style="color:#d4d4d4">, </i><i style="color:#4ec9b0">Buffer</i><i style="color:#d4d4d4">.</i><i style="color:#dcdcaa">from</i><i style="color:#ffd700">(</i><i style="color:#9cdcfe">buffer</i><i style="color:#ffd700">)</i><i style="color:#d4d4d4">, </i><i style="color:#ffd700">{</i></span><span class="m" style="left:2150.92px;top:862.31px;font-size:17.15px;color:#6e7681;">32</span><span class="m" style="left:2208.8px;top:862.31px;font-size:17.15px;"><i style="color:#9cdcfe">    filename</i><i style="color:#d4d4d4">,</i></span><span class="m" style="left:2150.92px;top:888.23px;font-size:17.15px;color:#6e7681;">33</span><span class="m" style="left:2208.8px;top:888.23px;font-size:17.15px;"><i style="color:#9cdcfe">    contentType</i><i style="color:#d4d4d4">: </i><i style="color:#ce9178">'image/png'</i><i style="color:#d4d4d4">,</i></span><svg class="ic" style="left:2182px;top:730.22px;width:22px;height:22px;color:#c5c5c5;"><use href="#chevr"/></svg><svg class="ic" style="left:2244.5px;top:734.72px;width:15px;height:15px;color:#7c8690;"><use href="#dots"/></svg><div class="b" style="left:2796.5px;top:155px;width:2px;height:2px;background:#9a9a9a;"></div><div class="b" style="left:2801.1px;top:155px;width:2px;height:2px;background:#9a9a9a;"></div><div class="b" style="left:2805.7px;top:155px;width:2px;height:2px;background:#9a9a9a;"></div></div><div class="b" style="left:3311px;top:133px;width:12px;height:1.3px;background:#6d6d52;opacity:.75;"></div><div class="b" style="left:3324.2px;top:133px;width:16px;height:1.3px;background:#47693f;opacity:.75;"></div><div class="b" style="left:3341.4px;top:133px;width:6px;height:1.3px;background:#3f6f96;opacity:.75;"></div><div class="b" style="left:3348.6px;top:133px;width:22px;height:1.3px;background:#3f6f96;opacity:.75;"></div><div class="b" style="left:3371.8px;top:133px;width:12px;height:1.3px;background:#777;opacity:.75;"></div><div class="b" style="left:3385px;top:133px;width:3px;height:1.3px;background:#777;opacity:.75;"></div><div class="b" style="left:3311px;top:134.94px;width:9px;height:1.3px;background:#3f6f96;opacity:.75;"></div><div class="b" style="left:3321.2px;top:134.94px;width:6px;height:1.3px;background:#7a5a4a;opacity:.75;"></div><div class="b" style="left:3328.4px;top:134.94px;width:11.6px;height:1.3px;background:#3f6f96;opacity:.75;"></div><div class="b" style="left:3311px;top:136.88px;width:9px;height:1.3px;background:#3f6f96;opacity:.75;"></div><div class="b" style="left:3321.2px;top:136.88px;width:22px;height:1.3px;background:#7a5a4a;opacity:.75;"></div><div class="b" style="left:3344.4px;top:136.88px;width:6px;height:1.3px;background:#777;opacity:.75;"></div><div class="b" style="left:3351.6px;top:136.88px;width:6px;height:1.3px;background:#6d6d52;opacity:.75;"></div><div class="b" style="left:3358.8px;top:136.88px;width:22px;height:1.3px;background:#3f6f96;opacity:.75;"></div><div class="b" style="left:3382px;top:136.88px;width:19px;height:1.3px;background:#777;opacity:.75;"></div><div class="b" style="left:3311px;top:138.82px;width:16px;height:1.3px;background:#3f6f96;opacity:.75;"></div><div class="b" style="left:3328.2px;top:138.82px;width:9px;height:1.3px;background:#3f6f96;opacity:.75;"></div><div class="b" style="left:3338.4px;top:138.82px;width:22px;height:1.3px;background:#6d6d52;opacity:.75;"></div><div class="b" style="left:3361.6px;top:138.82px;width:12px;height:1.3px;background:#7a5a4a;opacity:.75;"></div><div class="b" style="left:3374.8px;top:138.82px;width:9px;height:1.3px;background:#777;opacity:.75;"></div><div class="b" style="left:3385px;top:138.82px;width:1px;height:1.3px;background:#777;opacity:.75;"></div><div class="b" style="left:3311px;top:142.7px;width:12px;height:1.3px;background:#777;opacity:.75;"></div><div class="b" style="left:3324.2px;top:142.7px;width:9px;height:1.3px;background:#3f6f96;opacity:.75;"></div><div class="b" style="left:3334.4px;top:142.7px;width:1.6px;height:1.3px;background:#777;opacity:.75;"></div><div class="b" style="left:3313px;top:144.64px;width:9px;height:1.3px;background:#3f8877;opacity:.75;"></div><div class="b" style="left:3323.2px;top:144.64px;width:6px;height:1.3px;background:#777;opacity:.75;"></div><div class="b" style="left:3330.4px;top:144.64px;width:6px;height:1.3px;background:#777;opacity:.75;"></div><div class="b" style="left:3337.6px;top:144.64px;width:6px;height:1.3px;background:#777;opacity:.75;"></div><div class="b" style="left:3344.8px;top:144.64px;width:1.2px;height:1.3px;background:#7a5a4a;opacity:.75;"></div><div class="b" style="left:3313px;top:146.58px;width:16px;height:1.3px;background:#7a5a4a;opacity:.75;"></div><div class="b" style="left:3313px;top:148.52px;width:12px;height:1.3px;background:#7a5a4a;opacity:.75;"></div><div class="b" style="left:3326.2px;top:148.52px;width:1.8px;height:1.3px;background:#7a5a4a;opacity:.75;"></div><div class="b" style="left:3313px;top:150.46px;width:12px;height:1.3px;background:#3f8877;opacity:.75;"></div><div class="b" style="left:3326.2px;top:150.46px;width:8.8px;height:1.3px;background:#6d6d52;opacity:.75;"></div><div class="b" style="left:3313px;top:152.4px;width:9px;height:1.3px;background:#3f6f96;opacity:.75;"></div><div class="b" style="left:3323.2px;top:152.4px;width:18.8px;height:1.3px;background:#3f8877;opacity:.75;"></div><div class="b" style="left:3313px;top:154.34px;width:22px;height:1.3px;background:#7a5a4a;opacity:.75;"></div><div class="b" style="left:3336.2px;top:154.34px;width:12px;height:1.3px;background:#47693f;opacity:.75;"></div><div class="b" style="left:3349.4px;top:154.34px;width:16px;height:1.3px;background:#3f8877;opacity:.75;"></div><div class="b" style="left:3366.6px;top:154.34px;width:4.4px;height:1.3px;background:#3f6f96;opacity:.75;"></div><div class="b" style="left:3313px;top:156.28px;width:6px;height:1.3px;background:#777;opacity:.75;"></div><div class="b" style="left:3313px;top:158.22px;width:5px;height:1.3px;background:#6d6d52;opacity:.75;"></div><div class="b" style="left:3313px;top:162.1px;width:12px;height:1.3px;background:#6d6d52;opacity:.75;"></div><div class="b" style="left:3326.2px;top:162.1px;width:16px;height:1.3px;background:#7a5a4a;opacity:.75;"></div><div class="b" style="left:3343.4px;top:162.1px;width:6px;height:1.3px;background:#47693f;opacity:.75;"></div><div class="b" style="left:3350.6px;top:162.1px;width:6px;height:1.3px;background:#777;opacity:.75;"></div><div class="b" style="left:3357.8px;top:162.1px;width:13.2px;height:1.3px;background:#3f8877;opacity:.75;"></div><div class="b" style="left:3313px;top:164.04px;width:1px;height:1.3px;background:#47693f;opacity:.75;"></div><div class="b" style="left:3313px;top:167.92px;width:12px;height:1.3px;background:#777;opacity:.75;"></div><div class="b" style="left:3326.2px;top:167.92px;width:16px;height:1.3px;background:#777;opacity:.75;"></div><div class="b" style="left:3343.4px;top:167.92px;width:4.6px;height:1.3px;background:#3f6f96;opacity:.75;"></div><div class="b" style="left:3313px;top:171.8px;width:6px;height:1.3px;background:#3f8877;opacity:.75;"></div><div class="b" style="left:3320.2px;top:171.8px;width:16px;height:1.3px;background:#47693f;opacity:.75;"></div><div class="b" style="left:3337.4px;top:171.8px;width:6px;height:1.3px;background:#3f6f96;opacity:.75;"></div><div class="b" style="left:3344.6px;top:171.8px;width:12px;height:1.3px;background:#47693f;opacity:.75;"></div><div class="b" style="left:3357.8px;top:171.8px;width:0.2px;height:1.3px;background:#47693f;opacity:.75;"></div><div class="b" style="left:3313px;top:173.74px;width:16px;height:1.3px;background:#3f8877;opacity:.75;"></div><div class="b" style="left:3330.2px;top:173.74px;width:16px;height:1.3px;background:#47693f;opacity:.75;"></div><div class="b" style="left:3347.4px;top:173.74px;width:9.6px;height:1.3px;background:#3f6f96;opacity:.75;"></div><div class="b" style="left:3313px;top:175.68px;width:16px;height:1.3px;background:#3f8877;opacity:.75;"></div><div class="b" style="left:3330.2px;top:175.68px;width:9px;height:1.3px;background:#777;opacity:.75;"></div><div class="b" style="left:3340.4px;top:175.68px;width:6px;height:1.3px;background:#7a5a4a;opacity:.75;"></div><div class="b" style="left:3347.6px;top:175.68px;width:6px;height:1.3px;background:#6d6d52;opacity:.75;"></div><div class="b" style="left:3354.8px;top:175.68px;width:12px;height:1.3px;background:#6d6d52;opacity:.75;"></div><div class="b" style="left:3368px;top:175.68px;width:9px;height:1.3px;background:#7a5a4a;opacity:.75;"></div><div class="b" style="left:3378.2px;top:175.68px;width:0.8px;height:1.3px;background:#7a5a4a;opacity:.75;"></div><div class="b" style="left:3313px;top:177.62px;width:3px;height:1.3px;background:#6d6d52;opacity:.75;"></div><div class="b" style="left:3313px;top:181.5px;width:16px;height:1.3px;background:#7a5a4a;opacity:.75;"></div><div class="b" style="left:3330.2px;top:181.5px;width:22px;height:1.3px;background:#3f8877;opacity:.75;"></div><div class="b" style="left:3353.4px;top:181.5px;width:3.6px;height:1.3px;background:#7a5a4a;opacity:.75;"></div><div class="b" style="left:3313px;top:183.44px;width:22px;height:1.3px;background:#3f8877;opacity:.75;"></div><div class="b" style="left:3336.2px;top:183.44px;width:6.8px;height:1.3px;background:#3f8877;opacity:.75;"></div><div class="b" style="left:3313px;top:185.38px;width:16px;height:1.3px;background:#6d6d52;opacity:.75;"></div><div class="b" style="left:3330.2px;top:185.38px;width:9px;height:1.3px;background:#3f6f96;opacity:.75;"></div><div class="b" style="left:3340.4px;top:185.38px;width:9px;height:1.3px;background:#6d6d52;opacity:.75;"></div><div class="b" style="left:3350.6px;top:185.38px;width:9px;height:1.3px;background:#47693f;opacity:.75;"></div><div class="b" style="left:3360.8px;top:185.38px;width:2.2px;height:1.3px;background:#3f6f96;opacity:.75;"></div><div class="b" style="left:3313px;top:189.26px;width:16px;height:1.3px;background:#777;opacity:.75;"></div><div class="b" style="left:3330.2px;top:189.26px;width:9px;height:1.3px;background:#3f8877;opacity:.75;"></div><div class="b" style="left:3340.4px;top:189.26px;width:12px;height:1.3px;background:#3f6f96;opacity:.75;"></div><div class="b" style="left:3313px;top:191.2px;width:9px;height:1.3px;background:#7a5a4a;opacity:.75;"></div><div class="b" style="left:3323.2px;top:191.2px;width:22px;height:1.3px;background:#3f8877;opacity:.75;"></div><div class="b" style="left:3346.4px;top:191.2px;width:12.6px;height:1.3px;background:#777;opacity:.75;"></div><div class="b" style="left:3313px;top:193.14px;width:12px;height:1.3px;background:#6d6d52;opacity:.75;"></div><div class="b" style="left:3326.2px;top:193.14px;width:0.8px;height:1.3px;background:#777;opacity:.75;"></div><div class="b" style="left:3313px;top:195.08px;width:6px;height:1.3px;background:#7a5a4a;opacity:.75;"></div><div class="b" style="left:3320.2px;top:195.08px;width:22px;height:1.3px;background:#7a5a4a;opacity:.75;"></div><div class="b" style="left:3313px;top:197.02px;width:16px;height:1.3px;background:#7a5a4a;opacity:.75;"></div><div class="b" style="left:3330.2px;top:197.02px;width:2.8px;height:1.3px;background:#3f6f96;opacity:.75;"></div><div class="b" style="left:3313px;top:198.96px;width:6px;height:1.3px;background:#47693f;opacity:.75;"></div><div class="b" style="left:3313px;top:202.84px;width:8px;height:1.3px;background:#3f6f96;opacity:.75;"></div><div class="b" style="left:3313px;top:204.78px;width:9px;height:1.3px;background:#3f6f96;opacity:.75;"></div><div class="b" style="left:3323.2px;top:204.78px;width:9px;height:1.3px;background:#7a5a4a;opacity:.75;"></div><div class="b" style="left:3333.4px;top:204.78px;width:9px;height:1.3px;background:#3f6f96;opacity:.75;"></div><div class="b" style="left:3343.6px;top:204.78px;width:12px;height:1.3px;background:#777;opacity:.75;"></div><div class="b" style="left:3356.8px;top:204.78px;width:6px;height:1.3px;background:#3f6f96;opacity:.75;"></div><div class="b" style="left:3364px;top:204.78px;width:6px;height:1.3px;background:#777;opacity:.75;"></div><div class="b" style="left:3371.2px;top:204.78px;width:9px;height:1.3px;background:#777;opacity:.75;"></div><div class="b" style="left:3381.4px;top:204.78px;width:1.6px;height:1.3px;background:#3f8877;opacity:.75;"></div><div class="b" style="left:3313px;top:206.72px;width:20px;height:1.3px;background:#3f6f96;opacity:.75;"></div><div class="b" style="left:3313px;top:208.66px;width:6px;height:1.3px;background:#6d6d52;opacity:.75;"></div><div class="b" style="left:3320.2px;top:208.66px;width:8.8px;height:1.3px;background:#7a5a4a;opacity:.75;"></div><div class="b" style="left:3313px;top:210.6px;width:6px;height:1.3px;background:#47693f;opacity:.75;"></div><div class="b" style="left:3313px;top:214.48px;width:12px;height:1.3px;background:#3f8877;opacity:.75;"></div><div class="b" style="left:3326.2px;top:214.48px;width:22px;height:1.3px;background:#3f8877;opacity:.75;"></div><div class="b" style="left:3349.4px;top:214.48px;width:3.6px;height:1.3px;background:#3f6f96;opacity:.75;"></div><div class="b" style="left:3313px;top:218.36px;width:6px;height:1.3px;background:#7a5a4a;opacity:.75;"></div><div class="b" style="left:3320.2px;top:218.36px;width:16px;height:1.3px;background:#7a5a4a;opacity:.75;"></div><div class="b" style="left:3337.4px;top:218.36px;width:1.6px;height:1.3px;background:#3f8877;opacity:.75;"></div><div class="b" style="left:3313px;top:220.3px;width:6px;height:1.3px;background:#6d6d52;opacity:.75;"></div><div class="b" style="left:3320.2px;top:220.3px;width:6px;height:1.3px;background:#47693f;opacity:.75;"></div><div class="b" style="left:3327.4px;top:220.3px;width:12px;height:1.3px;background:#47693f;opacity:.75;"></div><div class="b" style="left:3340.6px;top:220.3px;width:12px;height:1.3px;background:#7a5a4a;opacity:.75;"></div><div class="b" style="left:3353.8px;top:220.3px;width:9px;height:1.3px;background:#777;opacity:.75;"></div><div class="b" style="left:3364px;top:220.3px;width:6px;height:1.3px;background:#6d6d52;opacity:.75;"></div><div class="b" style="left:3371.2px;top:220.3px;width:22px;height:1.3px;background:#3f8877;opacity:.75;"></div><div class="b" style="left:3394.4px;top:220.3px;width:8.6px;height:1.3px;background:#47693f;opacity:.75;"></div><div class="b" style="left:3313px;top:222.24px;width:14px;height:1.3px;background:#3f6f96;opacity:.75;"></div><div class="b" style="left:3313px;top:224.18px;width:20px;height:1.3px;background:#3f8877;opacity:.75;"></div><div class="b" style="left:3313px;top:226.12px;width:6px;height:1.3px;background:#47693f;opacity:.75;"></div><div class="b" style="left:3320.2px;top:226.12px;width:12px;height:1.3px;background:#777;opacity:.75;"></div><div class="b" style="left:3333.4px;top:226.12px;width:12px;height:1.3px;background:#6d6d52;opacity:.75;"></div><div class="b" style="left:3346.6px;top:226.12px;width:12px;height:1.3px;background:#6d6d52;opacity:.75;"></div><div class="b" style="left:3359.8px;top:226.12px;width:13.2px;height:1.3px;background:#777;opacity:.75;"></div><div class="b" style="left:3313px;top:228.06px;width:10px;height:1.3px;background:#3f8877;opacity:.75;"></div><div class="b" style="left:3313px;top:230px;width:9px;height:1.3px;background:#777;opacity:.75;"></div><div class="b" style="left:3323.2px;top:230px;width:9px;height:1.3px;background:#6d6d52;opacity:.75;"></div><div class="b" style="left:3333.4px;top:230px;width:9.6px;height:1.3px;background:#47693f;opacity:.75;"></div><div class="b" style="left:3313px;top:231.94px;width:9px;height:1.3px;background:#6d6d52;opacity:.75;"></div><div class="b" style="left:3323.2px;top:231.94px;width:22px;height:1.3px;background:#7a5a4a;opacity:.75;"></div><div class="b" style="left:3346.4px;top:231.94px;width:10.6px;height:1.3px;background:#47693f;opacity:.75;"></div><div class="b" style="left:3313px;top:233.88px;width:6px;height:1.3px;background:#3f6f96;opacity:.75;"></div><div class="b" style="left:3320.2px;top:233.88px;width:0.8px;height:1.3px;background:#7a5a4a;opacity:.75;"></div><div class="b" style="left:3313px;top:235.82px;width:3px;height:1.3px;background:#6d6d52;opacity:.75;"></div><div class="b" style="left:3313px;top:237.76px;width:22px;height:1.3px;background:#3f8877;opacity:.75;"></div><div class="b" style="left:3336.2px;top:237.76px;width:16px;height:1.3px;background:#47693f;opacity:.75;"></div><div class="b" style="left:3313px;top:239.7px;width:12px;height:1.3px;background:#3f8877;opacity:.75;"></div><div class="b" style="left:3326.2px;top:239.7px;width:6px;height:1.3px;background:#6d6d52;opacity:.75;"></div><div class="b" style="left:3333.4px;top:239.7px;width:6px;height:1.3px;background:#6d6d52;opacity:.75;"></div><div class="b" style="left:3340.6px;top:239.7px;width:16px;height:1.3px;background:#6d6d52;opacity:.75;"></div><div class="b" style="left:3357.8px;top:239.7px;width:5.2px;height:1.3px;background:#6d6d52;opacity:.75;"></div><div class="b" style="left:3313px;top:241.64px;width:3px;height:1.3px;background:#777;opacity:.75;"></div><div class="b" style="left:3420px;top:132px;width:20px;height:772px;background:#252525;border-left:1px solid #2e2e2e;box-sizing:border-box;"></div><div class="b" style="left:3421px;top:285px;width:19px;height:2px;background:#7a7a7a;"></div><div class="b" style="left:2115px;top:904px;width:1325px;height:1px;background:#2b2b2b;"></div><span class="t" style="left:2145.2px;top:922.96px;font-size:15.4px;transform:scaleX(0.89);color:#9d9d9d;">PROBLEMS</span><span class="t" style="left:2256.2px;top:922.96px;font-size:15.4px;transform:scaleX(0.93);color:#9d9d9d;">OUTPUT</span><span class="t" style="left:2350.2px;top:922.96px;font-size:15.4px;transform:scaleX(0.91);color:#9d9d9d;">DEBUG CONSOLE</span><span class="t" style="left:2508px;top:922.96px;font-size:15.4px;transform:scaleX(0.94);color:#e7e7e7;">TERMINAL</span><span class="t" style="left:2616.4px;top:922.96px;font-size:15.4px;transform:scaleX(0.85);color:#9d9d9d;">PORTS</span><span class="t" style="left:2696.7px;top:922.96px;font-size:15.4px;transform:scaleX(0.94);color:#9d9d9d;">POSTMAN CONSOLE</span><div class="b" style="left:2505px;top:945.5px;width:79.5px;height:1.5px;background:#0078d4;"></div><svg class="ic" style="left:3102px;top:919px;width:23px;height:23px;color:#cccccc;"><use href="#term"/></svg><span class="t" style="left:3132.3px;top:921.26px;font-size:18px;transform:scaleX(0.87);color:#cccccc;">electron</span><svg class="ic" style="left:3200.5px;top:920px;width:21px;height:21px;color:#cccccc;"><use href="#plus"/></svg><svg class="ic" style="left:3225.5px;top:923.5px;width:15px;height:15px;color:#cccccc;"><use href="#chevd"/></svg><svg class="ic" style="left:3254px;top:919px;width:23px;height:23px;color:#cccccc;"><use href="#split"/></svg><svg class="ic" style="left:3287.6px;top:919.5px;width:22px;height:22px;color:#cccccc;"><use href="#trash"/></svg><svg class="ic" style="left:3322.3px;top:919px;width:23px;height:23px;color:#cccccc;"><use href="#dots"/></svg><svg class="ic" style="left:3358.2px;top:919px;width:23px;height:23px;color:#cccccc;"><use href="#chevu"/></svg><svg class="ic" style="left:3395.8px;top:919px;width:23px;height:23px;color:#cccccc;"><use href="#close"/></svg><span class="m" style="left:2145px;top:974.55px;font-size:18.33px;font-weight:bold;color:#1ec17c;">[nodemon] starting `electron .`</span><span class="m" style="left:2145px;top:1024.55px;font-size:18.33px;font-weight:bold;color:#1ec17c;">[nodemon] clean exit - waiting for changes before restart</span><span class="m" style="left:2145px;top:1049.55px;font-size:18.33px;"><i style="color:#cccccc">PS C:\Users\User\Documents\Sourav\screen-record&gt; </i><i style="color:#e5e510">npm</i><i style="color:#cccccc"> run dev</i></span><span class="m" style="left:2145px;top:1099.55px;font-size:18.33px;-webkit-text-stroke:.3px #cccccc;color:#cccccc;">&gt; screen-record@1.0.0 dev</span><span class="m" style="left:2145px;top:1124.55px;font-size:18.33px;-webkit-text-stroke:.3px #cccccc;color:#cccccc;">&gt; nodemon --exec electron . --watch src/index.js --watch src --ext js,html,css</span><span class="m" style="left:2145px;top:1174.55px;font-size:18.33px;font-weight:bold;color:#e5e510;">[nodemon] 3.1.10</span><span class="m" style="left:2145px;top:1199.55px;font-size:18.33px;font-weight:bold;color:#e5e510;">[nodemon] to restart at any time, enter `rs`</span><span class="m" style="left:2145px;top:1224.55px;font-size:18.33px;font-weight:bold;color:#e5e510;">[nodemon] watching path(s): src\index.js src\**\*</span><span class="m" style="left:2145px;top:1249.55px;font-size:18.33px;font-weight:bold;color:#e5e510;">[nodemon] watching extensions: js,html,css</span><span class="m" style="left:2145px;top:1274.55px;font-size:18.33px;font-weight:bold;color:#1ec17c;">[nodemon] starting `electron .`</span><span class="m" style="left:2145px;top:1324.55px;font-size:18.33px;-webkit-text-stroke:.3px #cccccc;color:#cccccc;">Γ£à Screenshot uploaded to: https://chat.mcqstudy.com/ss/screenshot-1747370203.png</span><div class="b" style="left:2145.5px;top:1345.1px;width:10px;height:22px;border:1px solid #cccccc;box-sizing:border-box;"></div><div class="b" style="left:3420px;top:968px;width:20px;height:400px;background:#1b1b1b;border-left:1px solid #2b2b2b;box-sizing:border-box;"></div><div class="b" style="left:3421px;top:1131px;width:19px;height:237px;background:#404040;"></div><div class="b" style="left:3421px;top:1134px;width:6px;height:18px;background:#8a8a8a;"></div><div class="b" style="left:3434px;top:968px;width:6px;height:9px;background:#f14c4c;"></div><div class="b" style="left:1727px;top:1368px;width:1713px;height:1px;background:#2b2b2b;"></div><div class="b" style="left:1727px;top:1369px;width:53px;height:31px;background:#0078d4;"></div><svg class="ic" style="left:1744.7px;top:1374px;width:22px;height:22px;color:#fff;"><use href="#remote"/></svg><svg class="ic" style="left:1790px;top:1374.5px;width:21px;height:21px;color:#cccccc;"><use href="#branch"/></svg><span class="t" style="left:1817px;top:1376.95px;font-size:16.6px;transform:scaleX(1.01);color:#cccccc;">main</span><svg class="ic" style="left:1862.9px;top:1374.5px;width:21px;height:21px;color:#cccccc;"><use href="#sync"/></svg><svg class="ic" style="left:2597.5px;top:1374.5px;width:21px;height:21px;color:#cccccc;"><use href="#commit"/></svg><span class="t" style="left:2623.5px;top:1376.95px;font-size:16.6px;transform:scaleX(1.02);color:#cccccc;">Asiful Haque (1 day ago)</span><span class="t" style="left:2833.9px;top:1376.95px;font-size:16.6px;transform:scaleX(0.98);color:#cccccc;">Ln 18, Col 1</span><span class="t" style="left:2945.7px;top:1376.95px;font-size:16.6px;transform:scaleX(0.94);color:#cccccc;">Spaces: 2</span><span class="t" style="left:3039.2px;top:1376.95px;font-size:16.6px;transform:scaleX(0.95);color:#cccccc;">UTF-8</span><span class="t" style="left:3107.3px;top:1376.95px;font-size:16.6px;transform:scaleX(0.85);color:#cccccc;">CRLF</span><span class="t" style="left:3196.2px;top:1376.95px;font-size:16.6px;transform:scaleX(0.97);color:#cccccc;">JavaScript</span><span class="t" style="left:3363.3px;top:1376.95px;font-size:16.6px;transform:scaleX(1.03);color:#cccccc;">Prettier</span><span class="t" style="left:3169.7px;top:1376.96px;font-size:16px;transform:scaleX(1.01);color:#cccccc;font-weight:bold;">{ }</span><svg class="ic" style="left:3293.5px;top:1373.5px;width:23px;height:23px;color:#cccccc;"><use href="#copilot"/></svg><svg class="ic" style="left:3337px;top:1375px;width:20px;height:20px;color:#cccccc;"><use href="#checkall"/></svg><div class="b" style="left:1726.5px;top:0px;width:4.5px;height:401px;background:#222526;"></div><div class="b" style="left:1726.5px;top:401px;width:4.5px;height:641px;background:#c4c4c4;"></div><div class="b" style="left:1726.5px;top:824px;width:4.5px;height:40px;background:#c4506a;"></div><div class="b" style="left:1726.5px;top:1042px;width:4.5px;height:327px;background:#0e0e0e;"></div><div class="b" style="left:0px;top:1400px;width:1710px;height:40px;background:#efefef;"></div><div class="b" style="left:1710px;top:1400px;width:1730px;height:40px;background:linear-gradient(90deg,#c4dcea,#cfe0eb 40%,#d3e0ea);"></div><svg class="ic" style="left:15.75px;top:1411.75px;width:16.5px;height:16.5px;"><use href="#tbwin"/></svg><div class="b" style="left:48.5px;top:1400px;width:287px;height:40px;background:#fff;border:1px solid #c4c4c4;border-bottom:none;box-sizing:border-box;"></div><svg class="ic" style="left:60px;top:1412px;width:16px;height:16px;"><use href="#tbsearch"/></svg><span class="t" style="left:88.8px;top:1413.14px;font-size:14.6px;transform:scaleX(0.99);color:#3b3b3b;">Type here to search</span><svg class="ic" style="left:263px;top:1401px;width:70px;height:39px;"><use href="#eleph"/></svg><svg class="ic" style="left:349.8px;top:1406.5px;width:26px;height:26px;"><use href="#tbcopilot"/></svg><svg class="ic" style="left:398.8px;top:1406.5px;width:26px;height:26px;"><use href="#tbfz"/></svg><svg class="ic" style="left:447.8px;top:1406.5px;width:26px;height:26px;"><use href="#tbexp"/></svg><div class="b" style="left:440.8px;top:1437.5px;width:40px;height:2.5px;background:#0a6fc9;"></div><svg class="ic" style="left:496.8px;top:1406.5px;width:26px;height:26px;"><use href="#tbff"/></svg><svg class="ic" style="left:545.8px;top:1406.5px;width:26px;height:26px;"><use href="#tbchrome"/></svg><svg class="ic" style="left:594.8px;top:1406.5px;width:26px;height:26px;"><use href="#tbrar"/></svg><svg class="ic" style="left:643.8px;top:1406.5px;width:26px;height:26px;"><use href="#tbslack"/></svg><svg class="ic" style="left:693.3px;top:1407px;width:25px;height:25px;"><use href="#tbdoc"/></svg><svg class="ic" style="left:741.8px;top:1406.5px;width:26px;height:26px;"><use href="#tbpaint"/></svg><svg class="ic" style="left:790.8px;top:1406.5px;width:26px;height:26px;"><use href="#tbvsc"/></svg><div class="b" style="left:783.8px;top:1437.5px;width:40px;height:2.5px;background:#0a6fc9;"></div><svg class="ic" style="left:839.8px;top:1406.5px;width:26px;height:26px;"><use href="#tbvlc"/></svg><svg class="ic" style="left:888.8px;top:1406.5px;width:26px;height:26px;"><use href="#tbas"/></svg><svg class="ic" style="left:937.8px;top:1406.5px;width:26px;height:26px;"><use href="#tbchrome"/></svg><div class="b" style="left:930.8px;top:1437.5px;width:40px;height:2.5px;background:#0a6fc9;"></div><div class="b" style="left:975.8px;top:1400px;width:48px;height:40px;background:#fafafa;"></div><svg class="ic" style="left:986.8px;top:1406.5px;width:26px;height:26px;"><use href="#tbchrome"/></svg><div class="b" style="left:976.3px;top:1437.5px;width:47px;height:2.5px;background:#0a6fc9;"></div><svg class="ic" style="left:1035.8px;top:1406.5px;width:26px;height:26px;"><use href="#tbelectron"/></svg><div class="b" style="left:1028.8px;top:1437.5px;width:40px;height:2.5px;background:#0a6fc9;"></div><div class="b" style="left:955px;top:1421px;width:15px;height:15px;background:#c2185b;border-radius:8px;"></div><span class="t" style="left:959.33px;top:1423.96px;font-size:9.5px;color:#fff;">S</span><div class="b" style="left:1003px;top:1421px;width:15px;height:15px;background:#3a4250;border-radius:8px;"></div><div class="b" style="left:1528.5px;top:1395px;width:165px;height:33px;background:#dcefd7;border-radius:16px;opacity:.85;"></div><span class="t" style="left:1569px;top:1405.07px;font-size:13.5px;transform:scaleX(0.94);color:#b7cdb3;">Customize Chrome</span><div class="b" style="left:1710px;top:1392px;width:17px;height:9px;background:#0078d4;"></div><svg class="ic" style="left:3230.6px;top:1411px;width:16px;height:16px;"><use href="#tray1"/></svg><svg class="ic" style="left:3254.5px;top:1410.5px;width:17px;height:17px;"><use href="#tray2"/></svg><svg class="ic" style="left:3278.5px;top:1410.5px;width:17px;height:17px;"><use href="#tray3"/></svg><svg class="ic" style="left:3304.6px;top:1411px;width:16px;height:16px;"><use href="#tray4"/></svg><span class="t" style="left:3330.5px;top:1405.01px;font-size:11.8px;transform:scaleX(0.95);color:#222;">10:42 AM</span><span class="t" style="left:3329.5px;top:1423.01px;font-size:11.8px;transform:scaleX(0.98);color:#222;">5/16/2025</span><svg class="ic" style="left:3400.5px;top:1409.5px;width:17px;height:17px;"><use href="#tray5"/></svg><div class="b" style="left:3407px;top:1420px;width:14px;height:14px;background:#eef3f7;border:1px solid #555;border-radius:8px;box-sizing:border-box;"></div><span class="t" style="left:3411.5px;top:1423.38px;font-size:9px;color:#222;">2</span><div class="b" style="left:1226px;top:352px;width:985px;height:690px;background:#fff;box-shadow:0 0 0 1px #333;"></div><div class="b" style="left:1226px;top:352px;width:985px;height:27px;background:#000;"></div><div class="b" style="left:1235px;top:357.5px;width:16px;height:16px;background:#3a3f4f;border-radius:8px;"></div><span class="t" style="left:1257px;top:360.09px;font-size:12.3px;transform:scaleX(0.98);color:#fff;">Screenshot App</span><div class="b" style="left:2094px;top:365.5px;width:11px;height:1.2px;background:#fff;"></div><div class="b" style="left:2141px;top:360.5px;width:10px;height:10px;border:1.200px solid #fff;box-sizing:border-box;"></div><svg class="ic" style="left:2179.5px;top:357px;width:17px;height:17px;color:#fff;"><use href="#cx"/></svg><div class="b" style="left:1226px;top:379px;width:985px;height:22px;background:#1f2426;"></div><span class="t" style="left:1232px;top:384.59px;font-size:12.3px;transform:scaleX(0.98);color:#e6e6e6;">File</span><span class="t" style="left:1262.42px;top:384.59px;font-size:12.3px;transform:scaleX(0.98);color:#e6e6e6;">Edit</span><span class="t" style="left:1294.2px;top:384.59px;font-size:12.3px;transform:scaleX(0.98);color:#e6e6e6;">View</span><span class="t" style="left:1331.11px;top:384.59px;font-size:12.3px;transform:scaleX(0.98);color:#e6e6e6;">Window</span><span class="t" style="left:1384.98px;top:384.59px;font-size:12.3px;transform:scaleX(0.98);color:#e6e6e6;">Help</span><span class="t" style="left:1514.5px;top:424.57px;font-size:33px;transform:scaleX(0.98);color:#e9e9e9;font-weight:bold;">Auto Screenshot Capture</span><div class="b" style="left:1323px;top:494px;width:774px;height:313px;background:#efefef;border:1px solid #dcdcdc;box-sizing:border-box;overflow:hidden;"><div class="b" style="left:0;top:0;width:774px;height:324px;transform:scaleY(.966);transform-origin:0 0"><div class="b" style="left:0px;top:0px;width:774px;height:324px;background:#1b1b1b;"></div><div class="b" style="left:0px;top:0px;width:388px;height:19px;background:#26341f;"></div><div class="b" style="left:0px;top:19px;width:388px;height:296px;background:#202020;"></div><div class="b" style="left:110px;top:24px;width:278px;height:200px;background:#181818;"></div><div class="b" style="left:114px;top:30px;width:270px;height:14px;background:#2a2a2a;"></div><div class="b" style="left:182px;top:60px;width:4px;height:6px;background:#d9b84f;"></div><div class="b" style="left:190px;top:62px;width:40px;height:2px;background:#9a9a9a;"></div><div class="b" style="left:182px;top:71px;width:4px;height:6px;background:#d9b84f;"></div><div class="b" style="left:190px;top:73px;width:77px;height:2px;background:#9a9a9a;"></div><div class="b" style="left:182px;top:82px;width:4px;height:6px;background:#d9b84f;"></div><div class="b" style="left:190px;top:84px;width:64px;height:2px;background:#9a9a9a;"></div><div class="b" style="left:182px;top:93px;width:4px;height:6px;background:#d9b84f;"></div><div class="b" style="left:190px;top:95px;width:51px;height:2px;background:#9a9a9a;"></div><div class="b" style="left:182px;top:104px;width:4px;height:6px;background:#d9b84f;"></div><div class="b" style="left:190px;top:106px;width:88px;height:2px;background:#9a9a9a;"></div><div class="b" style="left:182px;top:115px;width:4px;height:6px;background:#d9b84f;"></div><div class="b" style="left:190px;top:117px;width:75px;height:2px;background:#9a9a9a;"></div><div class="b" style="left:182px;top:126px;width:4px;height:6px;background:#d9b84f;"></div><div class="b" style="left:190px;top:128px;width:62px;height:2px;background:#9a9a9a;"></div><div class="b" style="left:182px;top:137px;width:4px;height:6px;background:#d9b84f;"></div><div class="b" style="left:190px;top:139px;width:49px;height:2px;background:#9a9a9a;"></div><div class="b" style="left:182px;top:148px;width:4px;height:6px;background:#d9b84f;"></div><div class="b" style="left:190px;top:150px;width:86px;height:2px;background:#9a9a9a;"></div><div class="b" style="left:182px;top:159px;width:4px;height:6px;background:#d9b84f;"></div><div class="b" style="left:190px;top:161px;width:73px;height:2px;background:#9a9a9a;"></div><div class="b" style="left:182px;top:170px;width:4px;height:6px;background:#d9b84f;"></div><div class="b" style="left:190px;top:172px;width:60px;height:2px;background:#9a9a9a;"></div><div class="b" style="left:182px;top:181px;width:4px;height:6px;background:#d9b84f;"></div><div class="b" style="left:190px;top:183px;width:47px;height:2px;background:#9a9a9a;"></div><div class="b" style="left:182px;top:192px;width:4px;height:6px;background:#d9b84f;"></div><div class="b" style="left:190px;top:194px;width:84px;height:2px;background:#9a9a9a;"></div><div class="b" style="left:182px;top:203px;width:4px;height:6px;background:#d9b84f;"></div><div class="b" style="left:190px;top:205px;width:71px;height:2px;background:#9a9a9a;"></div><div class="b" style="left:388px;top:0px;width:386px;height:315px;background:#1d1d1d;"></div><div class="b" style="left:388px;top:0px;width:16px;height:315px;background:#161616;"></div><div class="b" style="left:404px;top:11px;width:70px;height:304px;background:#181818;"></div><div class="b" style="left:500px;top:30px;width:30px;height:2px;background:#4a7fa8;"></div><div class="b" style="left:500px;top:36px;width:83px;height:2px;background:#8a8a62;"></div><div class="b" style="left:500px;top:42px;width:136px;height:2px;background:#4a9c88;"></div><div class="b" style="left:500px;top:48px;width:69px;height:2px;background:#9a6a55;"></div><div class="b" style="left:500px;top:54px;width:122px;height:2px;background:#4a7fa8;"></div><div class="b" style="left:500px;top:60px;width:55px;height:2px;background:#8a8a62;"></div><div class="b" style="left:500px;top:66px;width:108px;height:2px;background:#4a9c88;"></div><div class="b" style="left:500px;top:72px;width:41px;height:2px;background:#9a6a55;"></div><div class="b" style="left:500px;top:78px;width:94px;height:2px;background:#4a7fa8;"></div><div class="b" style="left:500px;top:84px;width:147px;height:2px;background:#8a8a62;"></div><div class="b" style="left:500px;top:90px;width:80px;height:2px;background:#4a9c88;"></div><div class="b" style="left:500px;top:96px;width:133px;height:2px;background:#9a6a55;"></div><div class="b" style="left:500px;top:102px;width:66px;height:2px;background:#4a7fa8;"></div><div class="b" style="left:500px;top:108px;width:119px;height:2px;background:#8a8a62;"></div><div class="b" style="left:500px;top:114px;width:52px;height:2px;background:#4a9c88;"></div><div class="b" style="left:500px;top:120px;width:105px;height:2px;background:#9a6a55;"></div><div class="b" style="left:500px;top:126px;width:38px;height:2px;background:#4a7fa8;"></div><div class="b" style="left:500px;top:132px;width:91px;height:2px;background:#8a8a62;"></div><div class="b" style="left:500px;top:138px;width:144px;height:2px;background:#4a9c88;"></div><div class="b" style="left:500px;top:144px;width:77px;height:2px;background:#9a6a55;"></div><div class="b" style="left:500px;top:150px;width:130px;height:2px;background:#4a7fa8;"></div><div class="b" style="left:500px;top:156px;width:63px;height:2px;background:#8a8a62;"></div><div class="b" style="left:492px;top:232px;width:60px;height:2px;background:#9a9a9a;"></div><div class="b" style="left:492px;top:238px;width:91px;height:2px;background:#9a9a9a;"></div><div class="b" style="left:492px;top:244px;width:122px;height:2px;background:#9a9a9a;"></div><div class="b" style="left:492px;top:250px;width:153px;height:2px;background:#9a9a9a;"></div><div class="b" style="left:492px;top:256px;width:184px;height:2px;background:#9a9a9a;"></div><div class="b" style="left:492px;top:262px;width:75px;height:2px;background:#a9a92a;"></div><div class="b" style="left:492px;top:268px;width:106px;height:2px;background:#a9a92a;"></div><div class="b" style="left:492px;top:274px;width:137px;height:2px;background:#a9a92a;"></div><div class="b" style="left:492px;top:280px;width:168px;height:2px;background:#a9a92a;"></div><div class="b" style="left:492px;top:286px;width:199px;height:2px;background:#9a9a9a;"></div><div class="b" style="left:492px;top:292px;width:90px;height:2px;background:#9a9a9a;"></div><div class="b" style="left:492px;top:298px;width:121px;height:2px;background:#9a9a9a;"></div><div class="b" style="left:276px;top:80px;width:222px;height:156px;background:#fff;"></div><div class="b" style="left:276px;top:80px;width:222px;height:7px;background:#000;"></div><div class="b" style="left:298px;top:112px;width:178px;height:76px;background:#1c1c1c;"></div><div class="b" style="left:298px;top:112px;width:88px;height:5px;background:#26341f;"></div><div class="b" style="left:360px;top:128px;width:52px;height:38px;background:#fff;"></div><div class="b" style="left:366px;top:134px;width:40px;height:19px;background:#222;"></div><div class="b" style="left:376px;top:139px;width:20px;height:9px;background:#fff;"></div><div class="b" style="left:353px;top:192px;width:32px;height:8px;background:#a5dfc4;"></div><div class="b" style="left:388px;top:192px;width:30px;height:8px;background:#f0506e;"></div><div class="b" style="left:0px;top:315px;width:388px;height:9px;background:#eeeeee;"></div><div class="b" style="left:388px;top:315px;width:386px;height:9px;background:#c9dde9;"></div></div></div><div class="b" style="left:1554.5px;top:822px;width:160px;height:39px;background:#a5dfc4;border-radius:3px;"></div><span class="t" style="left:1596.44px;top:834.88px;font-size:15.5px;transform:scaleX(0.95);color:#92a99e;">Capturing...</span><div class="b" style="left:1718.5px;top:822px;width:148.5px;height:39px;background:#f0506e;border-radius:3px;"></div><span class="t" style="left:1735.45px;top:834.2px;font-size:16.3px;transform:scaleX(0.95);color:#16080b;-webkit-text-stroke:.3px;">Stop Screenshot</span></div></div><div class="b" style="left:14px;top:6px;width:28px;height:28px;background:#2b382a;border-radius:9px;"></div><svg class="ic" style="left:20.5px;top:12.5px;width:15px;height:15px;color:#e6ece3;"><use href="#cchev"/></svg><svg class="ic" style="left:56px;top:12px;width:16px;height:16px;"><use href="#fgpt"/></svg><span class="t tabt" style="left:80px;top:14.79px;font-size:12.300px;width:31.58px;color:#dde3da;transform:scaleX(.95)">Nex</span><svg class="ic" style="left:110.1px;top:13.5px;width:13px;height:13px;color:#cfd6cc;"><use href="#cx"/></svg><div class="b" style="left:134.8px;top:13px;width:1.6px;height:15px;background:#4a5747;border-radius:1px;"></div><svg class="ic" style="left:147px;top:12px;width:16px;height:16px;"><use href="#fgpt"/></svg><span class="t tabt" style="left:171px;top:14.79px;font-size:12.300px;width:31.58px;color:#dde3da;transform:scaleX(.95)">Inte</span><svg class="ic" style="left:201.1px;top:13.5px;width:13px;height:13px;color:#cfd6cc;"><use href="#cx"/></svg><div class="b" style="left:225.8px;top:13px;width:1.6px;height:15px;background:#4a5747;border-radius:1px;"></div><svg class="ic" style="left:238px;top:12px;width:16px;height:16px;"><use href="#fwa"/></svg><span class="t tabt" style="left:262px;top:14.79px;font-size:12.300px;width:31.58px;color:#dde3da;transform:scaleX(.95)">Wh</span><svg class="ic" style="left:292.1px;top:13.5px;width:13px;height:13px;color:#cfd6cc;"><use href="#cx"/></svg><div class="b" style="left:316.8px;top:13px;width:1.6px;height:15px;background:#4a5747;border-radius:1px;"></div><svg class="ic" style="left:329px;top:12px;width:16px;height:16px;"><use href="#flc"/></svg><span class="t tabt" style="left:353px;top:14.79px;font-size:12.300px;width:31.58px;color:#dde3da;transform:scaleX(.95)">SQL</span><svg class="ic" style="left:383.1px;top:13.5px;width:13px;height:13px;color:#cfd6cc;"><use href="#cx"/></svg><div class="b" style="left:407.8px;top:13px;width:1.6px;height:15px;background:#4a5747;border-radius:1px;"></div><svg class="ic" style="left:420px;top:12px;width:16px;height:16px;"><use href="#fjobs"/></svg><span class="t tabt" style="left:444px;top:14.79px;font-size:12.300px;width:31.58px;color:#dde3da;transform:scaleX(.95)">Cor</span><svg class="ic" style="left:474.1px;top:13.5px;width:13px;height:13px;color:#cfd6cc;"><use href="#cx"/></svg><div class="b" style="left:498.8px;top:13px;width:1.6px;height:15px;background:#4a5747;border-radius:1px;"></div><svg class="ic" style="left:511px;top:12px;width:16px;height:16px;"><use href="#fgh"/></svg><span class="t tabt" style="left:535px;top:14.79px;font-size:12.300px;width:31.58px;color:#dde3da;transform:scaleX(.95)">SE-I</span><svg class="ic" style="left:565.1px;top:13.5px;width:13px;height:13px;color:#cfd6cc;"><use href="#cx"/></svg><div class="b" style="left:589.8px;top:13px;width:1.6px;height:15px;background:#4a5747;border-radius:1px;"></div><svg class="ic" style="left:602px;top:12px;width:16px;height:16px;"><use href="#fgh"/></svg><span class="t tabt" style="left:626px;top:14.79px;font-size:12.300px;width:31.58px;color:#dde3da;transform:scaleX(.95)">Ass</span><svg class="ic" style="left:656.1px;top:13.5px;width:13px;height:13px;color:#cfd6cc;"><use href="#cx"/></svg><div class="b" style="left:680.8px;top:13px;width:1.6px;height:15px;background:#4a5747;border-radius:1px;"></div><svg class="ic" style="left:693px;top:12px;width:16px;height:16px;"><use href="#fostad"/></svg><span class="t tabt" style="left:717px;top:14.79px;font-size:12.300px;width:31.58px;color:#dde3da;transform:scaleX(.95)">Ost</span><svg class="ic" style="left:747.1px;top:13.5px;width:13px;height:13px;color:#cfd6cc;"><use href="#cx"/></svg><div class="b" style="left:771.8px;top:13px;width:1.6px;height:15px;background:#4a5747;border-radius:1px;"></div><svg class="ic" style="left:784px;top:12px;width:16px;height:16px;"><use href="#fli"/></svg><span class="t tabt" style="left:808px;top:14.79px;font-size:12.300px;width:31.58px;color:#dde3da;transform:scaleX(.95)">Lin</span><svg class="ic" style="left:838.1px;top:13.5px;width:13px;height:13px;color:#cfd6cc;"><use href="#cx"/></svg><div class="b" style="left:862.8px;top:13px;width:1.6px;height:15px;background:#4a5747;border-radius:1px;"></div><svg class="ic" style="left:875px;top:12px;width:16px;height:16px;"><use href="#fyt"/></svg><span class="t tabt" style="left:899px;top:14.79px;font-size:12.300px;width:31.58px;color:#dde3da;transform:scaleX(.95)">Sha</span><svg class="ic" style="left:929.1px;top:13.5px;width:13px;height:13px;color:#cfd6cc;"><use href="#cx"/></svg><div class="b" style="left:953.8px;top:13px;width:1.6px;height:15px;background:#4a5747;border-radius:1px;"></div><svg class="ic" style="left:966px;top:12px;width:16px;height:16px;"><use href="#fgit"/></svg><span class="t tabt" style="left:990px;top:14.79px;font-size:12.300px;width:31.58px;color:#dde3da;transform:scaleX(.95)">proj</span><svg class="ic" style="left:1020.1px;top:13.5px;width:13px;height:13px;color:#cfd6cc;"><use href="#cx"/></svg><div class="b" style="left:1044.8px;top:13px;width:1.6px;height:15px;background:#4a5747;border-radius:1px;"></div><svg class="ic" style="left:1057px;top:12px;width:16px;height:16px;"><use href="#fv0"/></svg><span class="t tabt" style="left:1081px;top:14.79px;font-size:12.300px;width:31.58px;color:#dde3da;transform:scaleX(.95)">Proj</span><svg class="ic" style="left:1111.1px;top:13.5px;width:13px;height:13px;color:#cfd6cc;"><use href="#cx"/></svg><div class="b" style="left:1135.8px;top:13px;width:1.6px;height:15px;background:#4a5747;border-radius:1px;"></div><svg class="ic" style="left:1148px;top:12px;width:16px;height:16px;"><use href="#fv0"/></svg><span class="t tabt" style="left:1172px;top:14.79px;font-size:12.300px;width:31.58px;color:#dde3da;transform:scaleX(.95)">Ana</span><svg class="ic" style="left:1202.1px;top:13.5px;width:13px;height:13px;color:#cfd6cc;"><use href="#cx"/></svg><div class="b" style="left:1226.8px;top:13px;width:1.6px;height:15px;background:#4a5747;border-radius:1px;"></div><svg class="ic" style="left:1239px;top:12px;width:16px;height:16px;"><use href="#fslash"/></svg><span class="t tabt" style="left:1263px;top:14.79px;font-size:12.300px;width:31.58px;color:#dde3da;transform:scaleX(.95)">Inp</span><svg class="ic" style="left:1293.1px;top:13.5px;width:13px;height:13px;color:#cfd6cc;"><use href="#cx"/></svg><div class="b" style="left:1317.8px;top:13px;width:1.6px;height:15px;background:#4a5747;border-radius:1px;"></div><svg class="ic" style="left:1330px;top:12px;width:16px;height:16px;"><use href="#ftri"/></svg><span class="t tabt" style="left:1354px;top:14.79px;font-size:12.300px;width:31.58px;color:#dde3da;transform:scaleX(.95)">Cre</span><svg class="ic" style="left:1384.1px;top:13.5px;width:13px;height:13px;color:#cfd6cc;"><use href="#cx"/></svg><div class="b" style="left:1414px;top:6px;width:90px;height:36px;background:#323f2f;border-radius:9px 9px 0 0;"></div><div class="b" style="left:1406px;top:32px;width:8px;height:8px;background:radial-gradient(circle at 0 0,transparent 7.500px,#323f2f 8px)"></div><div class="b" style="left:1504px;top:32px;width:8px;height:8px;background:radial-gradient(circle at 100% 0,transparent 7.500px,#323f2f 8px)"></div><svg class="ic" style="left:1423px;top:12px;width:16px;height:16px;"><use href="#fglobe"/></svg><span class="t" style="left:1447px;top:14.79px;font-size:12.3px;transform:scaleX(0.95);color:#eef3ec;">scre</span><svg class="ic" style="left:1478.5px;top:13.5px;width:13px;height:13px;color:#e8ede6;"><use href="#cx"/></svg><svg class="ic" style="left:1512.5px;top:11.5px;width:17px;height:17px;color:#e8ede6;"><use href="#cplus"/></svg><div class="b" style="left:1605px;top:19.5px;width:11px;height:1.2px;background:#e8ede6;"></div><div class="b" style="left:1652px;top:14.5px;width:10px;height:10px;border:1.200px solid #e8ede6;box-sizing:border-box;"></div><svg class="ic" style="left:1694px;top:11px;width:18px;height:18px;color:#e8ede6;stroke-width:.6;"><use href="#cx"/></svg><svg class="ic" style="left:20.5px;top:53.5px;width:19px;height:19px;color:#c7d0c3;"><use href="#cback"/></svg><svg class="ic" style="left:56.5px;top:53.5px;width:19px;height:19px;color:#7d8a79;"><use href="#cfwd"/></svg><svg class="ic" style="left:92.5px;top:53.5px;width:19px;height:19px;color:#c7d0c3;"><use href="#creload"/></svg><div class="b" style="left:128.5px;top:46px;width:1263px;height:34px;background:#1b2819;border-radius:17px;"></div><div class="b" style="left:133px;top:51px;width:24px;height:24px;background:#2c3a2a;border-radius:12px;"></div><svg class="ic" style="left:137.5px;top:55.5px;width:15px;height:15px;color:#e3e9df;"><use href="#ctune"/></svg><span class="t" style="left:165px;top:55.95px;font-size:14px;transform:scaleX(1.01);color:#e9eee6;">chat.mcqstudy.com/ss/screenshot-1747370207.png</span><svg class="ic" style="left:1358.5px;top:53px;width:19px;height:19px;color:#d5dcd1;"><use href="#cstar"/></svg><svg class="ic" style="left:1409px;top:53px;width:19px;height:19px" viewBox="0 0 19 19"><path fill="#a66ad6" d="M1 18C3 10 8 3 18 1c-1 5-4 9-8 11l-3-.5 1 2c-2 1.500-4 2.500-7 3.500z"/></svg><svg class="ic" style="left:1444px;top:53px;width:19px;height:19px" viewBox="0 0 19 19"><path fill="#e81111" d="M11 1l6 4-7 11-6-4z"/><path fill="#7a0808" d="M4 13l4 2.500-1 1.500-5 1z"/></svg><div class="b" style="left:1480px;top:55px;width:20px;height:16px;background:#eef1ff;border-radius:3px;border:1.500px solid #3b6cf0;box-sizing:border-box;"></div><div class="b" style="left:1486.5px;top:59.5px;width:7px;height:7px;background:#2a57e0;border-radius:4px;"></div><svg class="ic" style="left:1516.5px;top:53.5px;width:19px;height:19px;color:#d5dcd1;"><use href="#cpuzzle"/></svg><div class="b" style="left:1552.5px;top:55px;width:1.5px;height:16px;background:#4c5a49;"></div><div class="b" style="left:1564px;top:46px;width:117px;height:34px;background:#1f561c;border-radius:17px;"></div><div class="b" style="left:1573px;top:53px;width:20px;height:20px;background:#55624f;border-radius:10px;border:1.500px solid #3f8a3a;box-sizing:border-box;background:radial-gradient(circle at 40% 40%,#8a8a96,#3a3f4a 70%);"></div><span class="t" style="left:1599px;top:56.72px;font-size:12.5px;transform:scaleX(0.96);color:#dcefd8;">Verify it's you</span><svg class="ic" style="left:1695px;top:54px;width:18px;height:18px;color:#d5dcd1;"><use href="#cmore"/></svg><div class="b" style="left:1727px;top:0px;width:1713px;height:1400px;background:#181818;"></div><div class="b" style="left:1727px;top:0px;width:1713px;height:49px;background:#1f1f1f;"></div><div class="b" style="left:1727px;top:49px;width:1713px;height:1px;background:#2b2b2b;"></div><svg class="ic" style="left:1744.500px;top:12.500px;width:24px;height:24px" viewBox="0 0 24 24"><path fill="#1a8ad4" fill-rule="evenodd" d="M17.500 .8L23.300 3.600v16.800L17.500 23.200 7.300 13.600 3.100 16.900 1 15.700 4.900 12 1 8.300l2.100-1.200 4.200 3.300zM17.500 7.300L11.300 12l6.200 4.700z"/><path fill="#2fb3f7" d="M17.500 .8L23.300 3.600v16.800L17.500 23.200z"/></svg><span class="t" style="left:1793.5px;top:16.46px;font-size:18px;transform:scaleX(0.92);color:#9d9d9d;">File</span><span class="t" style="left:1844.4px;top:16.46px;font-size:18px;color:#9d9d9d;">Edit</span><span class="t" style="left:1898.3px;top:16.46px;font-size:18px;transform:scaleX(1.01);color:#9d9d9d;">Selection</span><span class="t" style="left:1996.3px;top:16.46px;font-size:18px;transform:scaleX(1.03);color:#9d9d9d;">View</span><span class="t" style="left:2058.9px;top:16.46px;font-size:18px;transform:scaleX(0.99);color:#9d9d9d;">Go</span><svg class="ic" style="left:2110px;top:13.2px;width:23px;height:23px;color:#9d9d9d;"><use href="#dots"/></svg><svg class="ic" style="left:2190px;top:13.5px;width:23px;height:23px;color:#9d9d9d;"><use href="#arrl"/></svg><svg class="ic" style="left:2227.5px;top:13.5px;width:23px;height:23px;color:#9d9d9d;"><use href="#arrr"/></svg><div class="b" style="left:2269.5px;top:8.5px;width:651px;height:32.5px;background:#292929;border:1px solid #3a3a3a;border-radius:9px;box-sizing:border-box;"></div><svg class="ic" style="left:2530.5px;top:14.5px;width:21px;height:21px;color:#9d9d9d;"><use href="#search"/></svg><span class="t" style="left:2555.5px;top:16.06px;font-size:18px;transform:scaleX(0.96);color:#9d9d9d;">screen-record</span><svg class="ic" style="left:2938.5px;top:13px;width:24px;height:24px;color:#9d9d9d;"><use href="#copilot"/></svg><svg class="ic" style="left:2966px;top:18px;width:15px;height:15px;color:#9d9d9d;"><use href="#chevd"/></svg><svg class="ic" style="left:3157.5px;top:13px;width:23px;height:23px;color:#9d9d9d;"><use href="#lay0"/></svg><svg class="ic" style="left:3194.5px;top:13px;width:23px;height:23px;color:#9d9d9d;"><use href="#lay1"/></svg><svg class="ic" style="left:3231.5px;top:13px;width:23px;height:23px;color:#9d9d9d;"><use href="#lay2"/></svg><svg class="ic" style="left:3269.5px;top:13px;width:23px;height:23px;color:#9d9d9d;"><use href="#lay3"/></svg><svg class="ic" style="left:3315.8px;top:15.5px;width:17px;height:17px;color:#9d9d9d;"><use href="#wmin"/></svg><svg class="ic" style="left:3361.7px;top:17px;width:16px;height:16px;color:#9d9d9d;"><use href="#wmax"/></svg><svg class="ic" style="left:3406.3px;top:15.5px;width:19px;height:19px;color:#9d9d9d;"><use href="#close"/></svg><div class="b" style="left:1799px;top:50px;width:1px;height:1318px;background:#2b2b2b;"></div><div class="b" style="left:1730px;top:50px;width:3px;height:69px;background:#2a6fb5;"></div><svg class="ic" style="left:1746.5px;top:66.55px;width:36px;height:36px;color:#d7d7d7;"><use href="#files"/></svg><svg class="ic" style="left:1746.5px;top:135.65px;width:36px;height:36px;color:#868686;"><use href="#search"/></svg><svg class="ic" style="left:1746.5px;top:204.75px;width:36px;height:36px;color:#868686;"><use href="#scm"/></svg><svg class="ic" style="left:1746.5px;top:273.85px;width:36px;height:36px;color:#868686;"><use href="#debug"/></svg><svg class="ic" style="left:1746.5px;top:342.95px;width:36px;height:36px;color:#868686;"><use href="#ext"/></svg><svg class="ic" style="left:1746.5px;top:412.05px;width:36px;height:36px;color:#868686;"><use href="#remoteexp"/></svg><svg class="ic" style="left:1747px;top:481.65px;width:35px;height:35px" viewBox="0 0 35 35"><circle cx="17.500" cy="17.500" r="17.500" fill="#868686"/><path fill="#181818" d="M30 6L15 17.500l15 9.500-2 2.500L11 18.500 28 4z"/><circle cx="29" cy="17.500" r="2" fill="#181818"/></svg><svg class="ic" style="left:1747px;top:550.25px;width:35px;height:35px" viewBox="0 0 35 35"><g fill="none" stroke="#868686" stroke-width="2.500"><circle cx="17.500" cy="19" r="14"/><circle cx="17.500" cy="19" r="9.500"/><circle cx="6" cy="6.500" r="2.500"/><circle cx="29" cy="6.500" r="2.500"/></g><path fill="#868686" d="M8.500 17h18v3a4 4 0 0 1-8 0 4 4 0 0 1-2 0 4 4 0 0 1-8 0z"/></svg><svg class="ic" style="left:1748.5px;top:1247.5px;width:33px;height:33px;color:#868686;"><use href="#account"/></svg><svg class="ic" style="left:1748.5px;top:1315px;width:33px;height:33px;color:#868686;"><use href="#gear"/></svg><div class="b" style="left:1765px;top:1333.5px;width:24px;height:24px;background:#0078d4;border-radius:12px;"></div><span class="t" style="left:1773.38px;top:1340px;font-size:13px;color:#fff;font-weight:bold;">1</span><div class="b" style="left:2114px;top:50px;width:1px;height:1318px;background:#2b2b2b;"></div><span class="t" style="left:1829.3px;top:68.26px;font-size:15.4px;transform:scaleX(0.85);color:#cccccc;">EXPLORER</span><svg class="ic" style="left:2071.5px;top:64.1px;width:23px;height:23px;color:#cccccc;"><use href="#dots"/></svg><svg class="ic" style="left:1802.5px;top:105.5px;width:23px;height:23px;color:#cccccc;"><use href="#chevd"/></svg><span class="t" style="left:1829.3px;top:109.66px;font-size:15.4px;transform:scaleX(0.93);color:#cccccc;font-weight:bold;">SCREEN-RECORD</span><svg class="ic" style="left:1821.5px;top:136.44px;width:23px;height:23px;color:#cccccc;"><use href="#chevr"/></svg><svg class="ic" style="left:1850.5px;top:137.94px;width:22px;height:20px;"><use href="#fnode"/></svg><span class="t" style="left:1881px;top:139px;font-size:18px;transform:scaleX(1.02);color:#8c8c8c;">node_modules</span><svg class="ic" style="left:1821.5px;top:168.12px;width:23px;height:23px;color:#cccccc;"><use href="#chevd"/></svg><svg class="ic" style="left:1850.5px;top:169.62px;width:22px;height:20px;"><use href="#fsrc"/></svg><span class="t" style="left:1881px;top:170.68px;font-size:18px;transform:scaleX(0.93);color:#cccccc;">src</span><svg class="ic" style="left:1862px;top:201.3px;width:20px;height:20px;"><use href="#cssbg"/></svg><span class="t" style="left:1864.8px;top:210.46px;font-size:9.5px;transform:scaleX(0.95);color:#fff;font-weight:bold;">css</span><span class="t" style="left:1892.3px;top:202.36px;font-size:18px;transform:scaleX(0.96);color:#cccccc;">index.css</span><svg class="ic" style="left:1861.75px;top:232.73px;width:20.5px;height:20.5px;"><use href="#html5"/></svg><span class="t" style="left:1892.3px;top:234.04px;font-size:18px;transform:scaleX(1.04);color:#cccccc;">index.html</span><span class="t" style="left:1863.5px;top:265.6px;font-size:18.5px;transform:scaleX(0.77);color:#e6cd3c;font-weight:bold;">JS</span><span class="t" style="left:1892.3px;top:265.72px;font-size:18px;transform:scaleX(1.02);color:#cccccc;">preload.js</span><span class="t" style="left:1863.5px;top:297.28px;font-size:18.5px;transform:scaleX(0.77);color:#e6cd3c;font-weight:bold;">JS</span><span class="t" style="left:1892.3px;top:297.4px;font-size:18px;transform:scaleX(1.02);color:#cccccc;">render.js</span><svg class="ic" style="left:1862px;top:332.02px;width:20px;height:12px;"><use href="#phpbg"/></svg><span class="t" style="left:1865.3px;top:333.95px;font-size:8px;transform:scaleX(0.92);color:#222a50;font-weight:bold;font-style:italic;">php</span><span class="t" style="left:1892.3px;top:329.08px;font-size:18px;transform:scaleX(1.05);color:#cccccc;">upload.php</span><svg class="ic" style="left:1850.75px;top:359.45px;width:20.5px;height:20.5px;"><use href="#gitf"/></svg><span class="t" style="left:1881px;top:360.76px;font-size:18px;transform:scaleX(1.06);color:#cccccc;">.gitignore</span><span class="t" style="left:1852.5px;top:392.32px;font-size:18.5px;transform:scaleX(0.77);color:#e6cd3c;font-weight:bold;">JS</span><span class="t" style="left:1881px;top:392.44px;font-size:18px;transform:scaleX(1.03);color:#cccccc;">forge.config.js</span><div class="b" style="left:1800px;top:417.22px;width:314px;height:31.68px;background:#37373d;"></div><span class="t" style="left:1852.5px;top:424px;font-size:18.5px;transform:scaleX(0.77);color:#e6cd3c;font-weight:bold;">JS</span><span class="t" style="left:1881px;top:424.12px;font-size:18px;transform:scaleX(0.99);color:#e0e0e0;">main.js</span><svg class="ic" style="left:1851px;top:454.74px;width:20px;height:20px;"><use href="#npmf"/></svg><span class="t" style="left:1881px;top:455.8px;font-size:18px;transform:scaleX(1.02);color:#cccccc;">package-lock.json</span><svg class="ic" style="left:1851px;top:486.42px;width:20px;height:20px;"><use href="#npmf"/></svg><span class="t" style="left:1881px;top:487.48px;font-size:18px;color:#cccccc;">package.json</span><div class="b" style="left:1800px;top:1273px;width:314px;height:1px;background:#2b2b2b;"></div><svg class="ic" style="left:1803px;top:1277.5px;width:23px;height:23px;color:#cccccc;"><use href="#chevr"/></svg><span class="t" style="left:1829.3px;top:1281.66px;font-size:15.4px;transform:scaleX(0.98);color:#cccccc;font-weight:bold;">OUTLINE</span><div class="b" style="left:1800px;top:1304.68px;width:314px;height:1px;background:#2b2b2b;"></div><svg class="ic" style="left:1803px;top:1309.18px;width:23px;height:23px;color:#cccccc;"><use href="#chevr"/></svg><span class="t" style="left:1829.3px;top:1313.34px;font-size:15.4px;color:#cccccc;font-weight:bold;">TIMELINE</span><div class="b" style="left:1800px;top:1336.36px;width:314px;height:1px;background:#2b2b2b;"></div><svg class="ic" style="left:1803px;top:1340.86px;width:23px;height:23px;color:#cccccc;"><use href="#chevr"/></svg><span class="t" style="left:1829.3px;top:1345.02px;font-size:15.4px;color:#cccccc;font-weight:bold;">RUNNING TASKS</span><div class="b" style="left:2115px;top:50px;width:1325px;height:854px;background:#1f1f1f;"></div><div class="b" style="left:2115px;top:50px;width:1325px;height:49px;background:#181818;"></div><div class="b" style="left:2115px;top:99px;width:1325px;height:1px;background:#2b2b2b;"></div><div class="b" style="left:2287.6px;top:50px;width:1px;height:49px;background:#2b2b2b;"></div><svg class="ic" style="left:2131.25px;top:65.25px;width:20.5px;height:20.5px;"><use href="#html5"/></svg><span class="t" style="left:2162px;top:67.06px;font-size:18px;transform:scaleX(1.04);color:#9d9d9d;">index.html</span><div class="b" style="left:2460.4px;top:50px;width:1px;height:49px;background:#2b2b2b;"></div><span class="t" style="left:2306.6px;top:66.44px;font-size:18.5px;transform:scaleX(0.77);color:#e6cd3c;font-weight:bold;">JS</span><span class="t" style="left:2335.6px;top:67.06px;font-size:18px;transform:scaleX(1.01);color:#9d9d9d;">render.js</span><div class="b" style="left:2633.5px;top:50px;width:1px;height:49px;background:#2b2b2b;"></div><span class="t" style="left:2479.4px;top:66.44px;font-size:18.5px;transform:scaleX(0.77);color:#e6cd3c;font-weight:bold;">JS</span><span class="t" style="left:2508.4px;top:67.06px;font-size:18px;transform:scaleX(1.02);color:#9d9d9d;">preload.js</span><div class="b" style="left:2634.5px;top:50px;width:172.2px;height:50px;background:#1f1f1f;"></div><div class="b" style="left:2634.5px;top:50px;width:172.2px;height:1.5px;background:#0078d4;"></div><svg class="ic" style="left:2775px;top:64px;width:23px;height:23px;color:#e8e8e8;"><use href="#close"/></svg><div class="b" style="left:2805.7px;top:50px;width:1px;height:50px;background:#2b2b2b;"></div><span class="t" style="left:2652.5px;top:66.44px;font-size:18.5px;transform:scaleX(0.77);color:#e6cd3c;font-weight:bold;">JS</span><span class="t" style="left:2681.5px;top:67.06px;font-size:18px;transform:scaleX(0.99);color:#ffffff;">main.js</span><div class="b" style="left:2987.8px;top:50px;width:1px;height:49px;background:#2b2b2b;"></div><svg class="ic" style="left:2823.2px;top:69.5px;width:20px;height:12px;"><use href="#phpbg"/></svg><span class="t" style="left:2826.5px;top:71.43px;font-size:8px;transform:scaleX(0.92);color:#222a50;font-weight:bold;font-style:italic;">php</span><span class="t" style="left:2853.7px;top:67.06px;font-size:18px;transform:scaleX(1.05);color:#9d9d9d;">upload.php</span><div class="b" style="left:3160.3px;top:50px;width:1px;height:49px;background:#2b2b2b;"></div><svg class="ic" style="left:3005.3px;top:65.5px;width:20px;height:20px;"><use href="#cssbg"/></svg><span class="t" style="left:3008.1px;top:74.66px;font-size:9.5px;transform:scaleX(0.95);color:#fff;font-weight:bold;">css</span><span class="t" style="left:3035.8px;top:67.06px;font-size:18px;transform:scaleX(0.97);color:#9d9d9d;">index.css</span><svg class="ic" style="left:3320.5px;top:63.5px;width:23px;height:23px;color:#cccccc;"><use href="#run"/></svg><svg class="ic" style="left:3358.9px;top:63.5px;width:23px;height:23px;color:#cccccc;"><use href="#split"/></svg><svg class="ic" style="left:3395.8px;top:63.5px;width:23px;height:23px;color:#cccccc;"><use href="#dots"/></svg><span class="t" style="left:2142px;top:107.94px;font-size:18.5px;transform:scaleX(0.77);color:#e6cd3c;font-weight:bold;">JS</span><span class="t" style="left:2171px;top:107.76px;font-size:18px;transform:scaleX(0.99);color:#a9a9a9;">main.js</span><svg class="ic" style="left:2228.5px;top:105.5px;width:22px;height:22px;color:#a9a9a9;"><use href="#chevr"/></svg><span class="t" style="left:2251px;top:107.76px;font-size:18px;transform:scaleX(0.87);color:#a9a9a9;">...</span><div class="b" style="left:0;top:0;width:3440px;height:904px;overflow:hidden"><div class="b" style="left:2209px;top:572.74px;width:1093px;height:25.92px;border-top:2px solid #292929;border-bottom:2px solid #292929;box-sizing:border-box;"></div><div class="b" style="left:2209px;top:728.26px;width:1093px;height:25.92px;background:#212c38;"></div><div class="b" style="left:2209px;top:287.62px;width:1px;height:259.2px;background:#3b3b3b;"></div><div class="b" style="left:2209px;top:702.34px;width:1px;height:25.92px;background:#3b3b3b;"></div><div class="b" style="left:2209px;top:754.18px;width:1px;height:155.52px;background:#3b3b3b;"></div><div class="b" style="left:2229.58px;top:313.54px;width:1px;height:155.52px;background:#3b3b3b;"></div><div class="b" style="left:2229.58px;top:857.86px;width:1px;height:51.84px;background:#3b3b3b;"></div><div class="b" style="left:2250.16px;top:391.3px;width:1px;height:51.84px;background:#3b3b3b;"></div><span class="m" style="left:2161.21px;top:136.55px;font-size:17.15px;color:#6e7681;">1</span><span class="m" style="left:2208.8px;top:136.55px;font-size:17.15px;"><i style="color:#569cd6">const </i><i style="color:#ffd700">{</i><i style="color:#4fc1ff"> app</i><i style="color:#d4d4d4">, </i><i style="color:#4ec9b0">BrowserWindow</i><i style="color:#d4d4d4">, </i><i style="color:#4fc1ff">ipcMain</i><i style="color:#d4d4d4">, </i><i style="color:#4fc1ff">desktopCapturer</i><i style="color:#d4d4d4"> </i><i style="color:#ffd700">}</i><i style="color:#d4d4d4"> = </i><i style="color:#dcdcaa">require</i><i style="color:#ffd700">(</i><i style="color:#ce9178">'electron'</i><i style="color:#ffd700">)</i><i style="color:#d4d4d4">;</i></span><span class="m" style="left:2161.21px;top:162.47px;font-size:17.15px;color:#6e7681;">2</span><span class="m" style="left:2208.8px;top:162.47px;font-size:17.15px;"><i style="color:#569cd6">const </i><i style="color:#4fc1ff">path</i><i style="color:#d4d4d4"> = </i><i style="color:#dcdcaa">require</i><i style="color:#ffd700">(</i><i style="color:#ce9178">'path'</i><i style="color:#ffd700">)</i><i style="color:#d4d4d4">;</i></span><span class="m" style="left:2161.21px;top:188.39px;font-size:17.15px;color:#6e7681;">3</span><span class="m" style="left:2208.8px;top:188.39px;font-size:17.15px;"><i style="color:#569cd6">const </i><i style="color:#dcdcaa">fetch</i><i style="color:#d4d4d4"> = </i><i style="color:#dcdcaa">require</i><i style="color:#ffd700">(</i><i style="color:#ce9178">'node-fetch'</i><i style="color:#ffd700">)</i><i style="color:#d4d4d4">;</i><i style="color:#d4d4d4">        </i><i style="color:#6a9955">// Make sure it's v2.x (for CommonJS support)</i></span><span class="m" style="left:2161.21px;top:214.31px;font-size:17.15px;color:#6e7681;">4</span><span class="m" style="left:2208.8px;top:214.31px;font-size:17.15px;"><i style="color:#569cd6">const </i><i style="color:#4ec9b0">FormData</i><i style="color:#d4d4d4"> = </i><i style="color:#dcdcaa">require</i><i style="color:#ffd700">(</i><i style="color:#ce9178">'form-data'</i><i style="color:#ffd700">)</i><i style="color:#d4d4d4">;</i><i style="color:#d4d4d4">      </i><i style="color:#6a9955">// Handles multipart/form-data</i></span><span class="m" style="left:2161.21px;top:240.23px;font-size:17.15px;color:#6e7681;">5</span><span class="m" style="left:2161.21px;top:266.15px;font-size:17.15px;color:#6e7681;">6</span><span class="m" style="left:2208.8px;top:266.15px;font-size:17.15px;"><i style="color:#569cd6">function </i><i style="color:#dcdcaa">createWindow</i><i style="color:#ffd700">()</i><i style="color:#d4d4d4"> </i><i style="color:#ffd700">{</i></span><span class="m" style="left:2161.21px;top:292.07px;font-size:17.15px;color:#6e7681;">7</span><span class="m" style="left:2208.8px;top:292.07px;font-size:17.15px;"><i style="color:#569cd6">  const </i><i style="color:#4fc1ff">win</i><i style="color:#d4d4d4"> = </i><i style="color:#569cd6">new </i><i style="color:#4ec9b0">BrowserWindow</i><i style="color:#da70d6">(</i><i style="color:#179fff">{</i></span><span class="m" style="left:2161.21px;top:317.99px;font-size:17.15px;color:#6e7681;">8</span><span class="m" style="left:2208.8px;top:317.99px;font-size:17.15px;"><i style="color:#9cdcfe">    width</i><i style="color:#d4d4d4">: </i><i style="color:#b5cea8">1000</i><i style="color:#d4d4d4">,</i></span><span class="m" style="left:2161.21px;top:343.91px;font-size:17.15px;color:#6e7681;">9</span><span class="m" style="left:2208.8px;top:343.91px;font-size:17.15px;"><i style="color:#9cdcfe">    height</i><i style="color:#d4d4d4">: </i><i style="color:#b5cea8">700</i><i style="color:#d4d4d4">,</i></span><span class="m" style="left:2150.92px;top:369.83px;font-size:17.15px;color:#6e7681;">10</span><span class="m" style="left:2208.8px;top:369.83px;font-size:17.15px;"><i style="color:#9cdcfe">    webPreferences</i><i style="color:#d4d4d4">: </i><i style="color:#ffd700">{</i></span><span class="m" style="left:2150.92px;top:395.75px;font-size:17.15px;color:#6e7681;">11</span><span class="m" style="left:2208.8px;top:395.75px;font-size:17.15px;"><i style="color:#9cdcfe">      contextIsolation</i><i style="color:#d4d4d4">: </i><i style="color:#569cd6">true</i><i style="color:#d4d4d4">,</i></span><span class="m" style="left:2150.92px;top:421.67px;font-size:17.15px;color:#6e7681;">12</span><span class="m" style="left:2208.8px;top:421.67px;font-size:17.15px;"><i style="color:#9cdcfe">      preload</i><i style="color:#d4d4d4">: </i><i style="color:#4fc1ff">path</i><i style="color:#d4d4d4">.</i><i style="color:#dcdcaa">join</i><i style="color:#da70d6">(</i><i style="color:#9cdcfe">__dirname</i><i style="color:#d4d4d4">, </i><i style="color:#ce9178">'src'</i><i style="color:#d4d4d4">, </i><i style="color:#ce9178">'preload.js'</i><i style="color:#da70d6">)</i><i style="color:#d4d4d4">,</i></span><span class="m" style="left:2150.92px;top:447.59px;font-size:17.15px;color:#6e7681;">13</span><span class="m" style="left:2208.8px;top:447.59px;font-size:17.15px;"><i style="color:#d4d4d4">    </i><i style="color:#ffd700">}</i><i style="color:#d4d4d4">,</i></span><span class="m" style="left:2150.92px;top:473.51px;font-size:17.15px;color:#6e7681;">14</span><span class="m" style="left:2208.8px;top:473.51px;font-size:17.15px;"><i style="color:#d4d4d4">  </i><i style="color:#179fff">}</i><i style="color:#da70d6">)</i><i style="color:#d4d4d4">;</i></span><span class="m" style="left:2150.92px;top:499.43px;font-size:17.15px;color:#6e7681;">15</span><span class="m" style="left:2150.92px;top:525.35px;font-size:17.15px;color:#6e7681;">16</span><span class="m" style="left:2208.8px;top:525.35px;font-size:17.15px;"><i style="color:#4fc1ff">  win</i><i style="color:#d4d4d4">.</i><i style="color:#dcdcaa">loadFile</i><i style="color:#da70d6">(</i><i style="color:#4fc1ff">path</i><i style="color:#d4d4d4">.</i><i style="color:#dcdcaa">join</i><i style="color:#179fff">(</i><i style="color:#9cdcfe">__dirname</i><i style="color:#d4d4d4">, </i><i style="color:#ce9178">'src'</i><i style="color:#d4d4d4">, </i><i style="color:#ce9178">'index.html'</i><i style="color:#179fff">)</i><i style="color:#da70d6">)</i><i style="color:#d4d4d4">;</i></span><span class="m" style="left:2150.92px;top:551.27px;font-size:17.15px;color:#6e7681;">17</span><span class="m" style="left:2208.8px;top:551.27px;font-size:17.15px;"><i style="color:#ffd700">}</i></span><span class="m" style="left:2150.92px;top:577.19px;font-size:17.15px;color:#cccccc;">18</span><span class="m" style="left:2150.92px;top:603.11px;font-size:17.15px;color:#6e7681;">19</span><span class="m" style="left:2208.8px;top:603.11px;font-size:17.15px;"><i style="color:#4fc1ff">app</i><i style="color:#d4d4d4">.</i><i style="color:#dcdcaa">whenReady</i><i style="color:#ffd700">()</i><i style="color:#d4d4d4">.</i><i style="color:#dcdcaa">then</i><i style="color:#ffd700">(</i><i style="color:#dcdcaa">createWindow</i><i style="color:#ffd700">)</i><i style="color:#d4d4d4">;</i></span><span class="m" style="left:2150.92px;top:629.03px;font-size:17.15px;color:#6e7681;">20</span><span class="m" style="left:2150.92px;top:654.95px;font-size:17.15px;color:#6e7681;">21</span><span class="m" style="left:2208.8px;top:654.95px;font-size:17.15px;"><i style="color:#6a9955">// </i></span><svg class="ic" style="left:2243px;top:651.6px;width:20px;height:20px;"><use href="#emoji"/></svg><span class="m" style="left:2265.38px;top:654.95px;font-size:17.15px;"><i style="color:#6a9955"> Provide screen sources to the renderer</i></span><span class="m" style="left:2150.92px;top:680.87px;font-size:17.15px;color:#6e7681;">22</span><span class="m" style="left:2208.8px;top:680.87px;font-size:17.15px;"><i style="color:#4fc1ff">ipcMain</i><i style="color:#d4d4d4">.</i><i style="color:#dcdcaa">handle</i><i style="color:#ffd700">(</i><i style="color:#ce9178">'get-sources'</i><i style="color:#d4d4d4">, </i><i style="color:#569cd6">async </i><i style="color:#da70d6">()</i><i style="color:#d4d4d4"> </i><i style="color:#569cd6">=&gt;</i><i style="color:#d4d4d4"> </i><i style="color:#da70d6">{</i></span><span class="m" style="left:2150.92px;top:706.79px;font-size:17.15px;color:#6e7681;">23</span><span class="m" style="left:2208.8px;top:706.79px;font-size:17.15px;"><i style="color:#c586c0">  return </i><i style="color:#c586c0">await </i><i style="color:#4fc1ff">desktopCapturer</i><i style="color:#d4d4d4">.</i><i style="color:#dcdcaa">getSources</i><i style="color:#179fff">(</i><i style="color:#ffd700">{</i><i style="color:#9cdcfe"> types</i><i style="color:#d4d4d4">: </i><i style="color:#da70d6">[</i><i style="color:#ce9178">'screen'</i><i style="color:#da70d6">]</i><i style="color:#d4d4d4"> </i><i style="color:#ffd700">}</i><i style="color:#179fff">)</i><i style="color:#d4d4d4">;</i></span><span class="m" style="left:2150.92px;top:732.71px;font-size:17.15px;color:#6e7681;">24</span><span class="m" style="left:2208.8px;top:732.71px;font-size:17.15px;"><i style="color:#da70d6">}</i><i style="color:#ffd700">)</i><i style="color:#d4d4d4">;</i></span><span class="m" style="left:2150.92px;top:758.63px;font-size:17.15px;color:#6e7681;">28</span><span class="m" style="left:2208.8px;top:758.63px;font-size:17.15px;"><i style="color:#569cd6">  const </i><i style="color:#4fc1ff">filename</i><i style="color:#d4d4d4"> = </i><i style="color:#ce9178">`screenshot-</i><i style="color:#569cd6">${</i><i style="color:#4ec9b0">Date</i><i style="color:#d4d4d4">.</i><i style="color:#dcdcaa">now</i><i style="color:#ffd700">()</i><i style="color:#569cd6">}</i><i style="color:#ce9178">.png`</i><i style="color:#d4d4d4">;</i></span><span class="m" style="left:2150.92px;top:784.55px;font-size:17.15px;color:#6e7681;">29</span><span class="m" style="left:2150.92px;top:810.47px;font-size:17.15px;color:#6e7681;">30</span><span class="m" style="left:2208.8px;top:810.47px;font-size:17.15px;"><i style="color:#569cd6">  const </i><i style="color:#4fc1ff">form</i><i style="color:#d4d4d4"> = </i><i style="color:#569cd6">new </i><i style="color:#4ec9b0">FormData</i><i style="color:#179fff">()</i><i style="color:#d4d4d4">;</i></span><span class="m" style="left:2150.92px;top:836.39px;font-size:17.15px;color:#6e7681;">31</span><span class="m" style="left:2208.8px;top:836.39px;font-size:17.15px;"><i style="color:#4fc1ff">  form</i><i style="color:#d4d4d4">.</i><i style="color:#dcdcaa">append</i><i style="color:#179fff">(</i><i style="color:#ce9178">'file'</i><i style="color:#d4d4d4">, </i><i style="color:#4ec9b0">Buffer</i><i style="color:#d4d4d4">.</i><i style="color:#dcdcaa">from</i><i style="color:#ffd700">(</i><i style="color:#9cdcfe">buffer</i><i style="color:#ffd700">)</i><i style="color:#d4d4d4">, </i><i style="color:#ffd700">{</i></span><span class="m" style="left:2150.92px;top:862.31px;font-size:17.15px;color:#6e7681;">32</span><span class="m" style="left:2208.8px;top:862.31px;font-size:17.15px;"><i style="color:#9cdcfe">    filename</i><i style="color:#d4d4d4">,</i></span><span class="m" style="left:2150.92px;top:888.23px;font-size:17.15px;color:#6e7681;">33</span><span class="m" style="left:2208.8px;top:888.23px;font-size:17.15px;"><i style="color:#9cdcfe">    contentType</i><i style="color:#d4d4d4">: </i><i style="color:#ce9178">'image/png'</i><i style="color:#d4d4d4">,</i></span><svg class="ic" style="left:2182px;top:730.22px;width:22px;height:22px;color:#c5c5c5;"><use href="#chevr"/></svg><svg class="ic" style="left:2244.5px;top:734.72px;width:15px;height:15px;color:#7c8690;"><use href="#dots"/></svg><div class="b" style="left:2796.5px;top:155px;width:2px;height:2px;background:#9a9a9a;"></div><div class="b" style="left:2801.1px;top:155px;width:2px;height:2px;background:#9a9a9a;"></div><div class="b" style="left:2805.7px;top:155px;width:2px;height:2px;background:#9a9a9a;"></div></div><div class="b" style="left:3311px;top:133px;width:12px;height:1.3px;background:#6d6d52;opacity:.75;"></div><div class="b" style="left:3324.2px;top:133px;width:16px;height:1.3px;background:#47693f;opacity:.75;"></div><div class="b" style="left:3341.4px;top:133px;width:6px;height:1.3px;background:#3f6f96;opacity:.75;"></div><div class="b" style="left:3348.6px;top:133px;width:22px;height:1.3px;background:#3f6f96;opacity:.75;"></div><div class="b" style="left:3371.8px;top:133px;width:12px;height:1.3px;background:#777;opacity:.75;"></div><div class="b" style="left:3385px;top:133px;width:3px;height:1.3px;background:#777;opacity:.75;"></div><div class="b" style="left:3311px;top:134.94px;width:9px;height:1.3px;background:#3f6f96;opacity:.75;"></div><div class="b" style="left:3321.2px;top:134.94px;width:6px;height:1.3px;background:#7a5a4a;opacity:.75;"></div><div class="b" style="left:3328.4px;top:134.94px;width:11.6px;height:1.3px;background:#3f6f96;opacity:.75;"></div><div class="b" style="left:3311px;top:136.88px;width:9px;height:1.3px;background:#3f6f96;opacity:.75;"></div><div class="b" style="left:3321.2px;top:136.88px;width:22px;height:1.3px;background:#7a5a4a;opacity:.75;"></div><div class="b" style="left:3344.4px;top:136.88px;width:6px;height:1.3px;background:#777;opacity:.75;"></div><div class="b" style="left:3351.6px;top:136.88px;width:6px;height:1.3px;background:#6d6d52;opacity:.75;"></div><div class="b" style="left:3358.8px;top:136.88px;width:22px;height:1.3px;background:#3f6f96;opacity:.75;"></div><div class="b" style="left:3382px;top:136.88px;width:19px;height:1.3px;background:#777;opacity:.75;"></div><div class="b" style="left:3311px;top:138.82px;width:16px;height:1.3px;background:#3f6f96;opacity:.75;"></div><div class="b" style="left:3328.2px;top:138.82px;width:9px;height:1.3px;background:#3f6f96;opacity:.75;"></div><div class="b" style="left:3338.4px;top:138.82px;width:22px;height:1.3px;background:#6d6d52;opacity:.75;"></div><div class="b" style="left:3361.6px;top:138.82px;width:12px;height:1.3px;background:#7a5a4a;opacity:.75;"></div><div class="b" style="left:3374.8px;top:138.82px;width:9px;height:1.3px;background:#777;opacity:.75;"></div><div class="b" style="left:3385px;top:138.82px;width:1px;height:1.3px;background:#777;opacity:.75;"></div><div class="b" style="left:3311px;top:142.7px;width:12px;height:1.3px;background:#777;opacity:.75;"></div><div class="b" style="left:3324.2px;top:142.7px;width:9px;height:1.3px;background:#3f6f96;opacity:.75;"></div><div class="b" style="left:3334.4px;top:142.7px;width:1.6px;height:1.3px;background:#777;opacity:.75;"></div><div class="b" style="left:3313px;top:144.64px;width:9px;height:1.3px;background:#3f8877;opacity:.75;"></div><div class="b" style="left:3323.2px;top:144.64px;width:6px;height:1.3px;background:#777;opacity:.75;"></div><div class="b" style="left:3330.4px;top:144.64px;width:6px;height:1.3px;background:#777;opacity:.75;"></div><div class="b" style="left:3337.6px;top:144.64px;width:6px;height:1.3px;background:#777;opacity:.75;"></div><div class="b" style="left:3344.8px;top:144.64px;width:1.2px;height:1.3px;background:#7a5a4a;opacity:.75;"></div><div class="b" style="left:3313px;top:146.58px;width:16px;height:1.3px;background:#7a5a4a;opacity:.75;"></div><div class="b" style="left:3313px;top:148.52px;width:12px;height:1.3px;background:#7a5a4a;opacity:.75;"></div><div class="b" style="left:3326.2px;top:148.52px;width:1.8px;height:1.3px;background:#7a5a4a;opacity:.75;"></div><div class="b" style="left:3313px;top:150.46px;width:12px;height:1.3px;background:#3f8877;opacity:.75;"></div><div class="b" style="left:3326.2px;top:150.46px;width:8.8px;height:1.3px;background:#6d6d52;opacity:.75;"></div><div class="b" style="left:3313px;top:152.4px;width:9px;height:1.3px;background:#3f6f96;opacity:.75;"></div><div class="b" style="left:3323.2px;top:152.4px;width:18.8px;height:1.3px;background:#3f8877;opacity:.75;"></div><div class="b" style="left:3313px;top:154.34px;width:22px;height:1.3px;background:#7a5a4a;opacity:.75;"></div><div class="b" style="left:3336.2px;top:154.34px;width:12px;height:1.3px;background:#47693f;opacity:.75;"></div><div class="b" style="left:3349.4px;top:154.34px;width:16px;height:1.3px;background:#3f8877;opacity:.75;"></div><div class="b" style="left:3366.6px;top:154.34px;width:4.4px;height:1.3px;background:#3f6f96;opacity:.75;"></div><div class="b" style="left:3313px;top:156.28px;width:6px;height:1.3px;background:#777;opacity:.75;"></div><div class="b" style="left:3313px;top:158.22px;width:5px;height:1.3px;background:#6d6d52;opacity:.75;"></div><div class="b" style="left:3313px;top:162.1px;width:12px;height:1.3px;background:#6d6d52;opacity:.75;"></div><div class="b" style="left:3326.2px;top:162.1px;width:16px;height:1.3px;background:#7a5a4a;opacity:.75;"></div><div class="b" style="left:3343.4px;top:162.1px;width:6px;height:1.3px;background:#47693f;opacity:.75;"></div><div class="b" style="left:3350.6px;top:162.1px;width:6px;height:1.3px;background:#777;opacity:.75;"></div><div class="b" style="left:3357.8px;top:162.1px;width:13.2px;height:1.3px;background:#3f8877;opacity:.75;"></div><div class="b" style="left:3313px;top:164.04px;width:1px;height:1.3px;background:#47693f;opacity:.75;"></div><div class="b" style="left:3313px;top:167.92px;width:12px;height:1.3px;background:#777;opacity:.75;"></div><div class="b" style="left:3326.2px;top:167.92px;width:16px;height:1.3px;background:#777;opacity:.75;"></div><div class="b" style="left:3343.4px;top:167.92px;width:4.6px;height:1.3px;background:#3f6f96;opacity:.75;"></div><div class="b" style="left:3313px;top:171.8px;width:6px;height:1.3px;background:#3f8877;opacity:.75;"></div><div class="b" style="left:3320.2px;top:171.8px;width:16px;height:1.3px;background:#47693f;opacity:.75;"></div><div class="b" style="left:3337.4px;top:171.8px;width:6px;height:1.3px;background:#3f6f96;opacity:.75;"></div><div class="b" style="left:3344.6px;top:171.8px;width:12px;height:1.3px;background:#47693f;opacity:.75;"></div><div class="b" style="left:3357.8px;top:171.8px;width:0.2px;height:1.3px;background:#47693f;opacity:.75;"></div><div class="b" style="left:3313px;top:173.74px;width:16px;height:1.3px;background:#3f8877;opacity:.75;"></div><div class="b" style="left:3330.2px;top:173.74px;width:16px;height:1.3px;background:#47693f;opacity:.75;"></div><div class="b" style="left:3347.4px;top:173.74px;width:9.6px;height:1.3px;background:#3f6f96;opacity:.75;"></div><div class="b" style="left:3313px;top:175.68px;width:16px;height:1.3px;background:#3f8877;opacity:.75;"></div><div class="b" style="left:3330.2px;top:175.68px;width:9px;height:1.3px;background:#777;opacity:.75;"></div><div class="b" style="left:3340.4px;top:175.68px;width:6px;height:1.3px;background:#7a5a4a;opacity:.75;"></div><div class="b" style="left:3347.6px;top:175.68px;width:6px;height:1.3px;background:#6d6d52;opacity:.75;"></div><div class="b" style="left:3354.8px;top:175.68px;width:12px;height:1.3px;background:#6d6d52;opacity:.75;"></div><div class="b" style="left:3368px;top:175.68px;width:9px;height:1.3px;background:#7a5a4a;opacity:.75;"></div><div class="b" style="left:3378.2px;top:175.68px;width:0.8px;height:1.3px;background:#7a5a4a;opacity:.75;"></div><div class="b" style="left:3313px;top:177.62px;width:3px;height:1.3px;background:#6d6d52;opacity:.75;"></div><div class="b" style="left:3313px;top:181.5px;width:16px;height:1.3px;background:#7a5a4a;opacity:.75;"></div><div class="b" style="left:3330.2px;top:181.5px;width:22px;height:1.3px;background:#3f8877;opacity:.75;"></div><div class="b" style="left:3353.4px;top:181.5px;width:3.6px;height:1.3px;background:#7a5a4a;opacity:.75;"></div><div class="b" style="left:3313px;top:183.44px;width:22px;height:1.3px;background:#3f8877;opacity:.75;"></div><div class="b" style="left:3336.2px;top:183.44px;width:6.8px;height:1.3px;background:#3f8877;opacity:.75;"></div><div class="b" style="left:3313px;top:185.38px;width:16px;height:1.3px;background:#6d6d52;opacity:.75;"></div><div class="b" style="left:3330.2px;top:185.38px;width:9px;height:1.3px;background:#3f6f96;opacity:.75;"></div><div class="b" style="left:3340.4px;top:185.38px;width:9px;height:1.3px;background:#6d6d52;opacity:.75;"></div><div class="b" style="left:3350.6px;top:185.38px;width:9px;height:1.3px;background:#47693f;opacity:.75;"></div><div class="b" style="left:3360.8px;top:185.38px;width:2.2px;height:1.3px;background:#3f6f96;opacity:.75;"></div><div class="b" style="left:3313px;top:189.26px;width:16px;height:1.3px;background:#777;opacity:.75;"></div><div class="b" style="left:3330.2px;top:189.26px;width:9px;height:1.3px;background:#3f8877;opacity:.75;"></div><div class="b" style="left:3340.4px;top:189.26px;width:12px;height:1.3px;background:#3f6f96;opacity:.75;"></div><div class="b" style="left:3313px;top:191.2px;width:9px;height:1.3px;background:#7a5a4a;opacity:.75;"></div><div class="b" style="left:3323.2px;top:191.2px;width:22px;height:1.3px;background:#3f8877;opacity:.75;"></div><div class="b" style="left:3346.4px;top:191.2px;width:12.6px;height:1.3px;background:#777;opacity:.75;"></div><div class="b" style="left:3313px;top:193.14px;width:12px;height:1.3px;background:#6d6d52;opacity:.75;"></div><div class="b" style="left:3326.2px;top:193.14px;width:0.8px;height:1.3px;background:#777;opacity:.75;"></div><div class="b" style="left:3313px;top:195.08px;width:6px;height:1.3px;background:#7a5a4a;opacity:.75;"></div><div class="b" style="left:3320.2px;top:195.08px;width:22px;height:1.3px;background:#7a5a4a;opacity:.75;"></div><div class="b" style="left:3313px;top:197.02px;width:16px;height:1.3px;background:#7a5a4a;opacity:.75;"></div><div class="b" style="left:3330.2px;top:197.02px;width:2.8px;height:1.3px;background:#3f6f96;opacity:.75;"></div><div class="b" style="left:3313px;top:198.96px;width:6px;height:1.3px;background:#47693f;opacity:.75;"></div><div class="b" style="left:3313px;top:202.84px;width:8px;height:1.3px;background:#3f6f96;opacity:.75;"></div><div class="b" style="left:3313px;top:204.78px;width:9px;height:1.3px;background:#3f6f96;opacity:.75;"></div><div class="b" style="left:3323.2px;top:204.78px;width:9px;height:1.3px;background:#7a5a4a;opacity:.75;"></div><div class="b" style="left:3333.4px;top:204.78px;width:9px;height:1.3px;background:#3f6f96;opacity:.75;"></div><div class="b" style="left:3343.6px;top:204.78px;width:12px;height:1.3px;background:#777;opacity:.75;"></div><div class="b" style="left:3356.8px;top:204.78px;width:6px;height:1.3px;background:#3f6f96;opacity:.75;"></div><div class="b" style="left:3364px;top:204.78px;width:6px;height:1.3px;background:#777;opacity:.75;"></div><div class="b" style="left:3371.2px;top:204.78px;width:9px;height:1.3px;background:#777;opacity:.75;"></div><div class="b" style="left:3381.4px;top:204.78px;width:1.6px;height:1.3px;background:#3f8877;opacity:.75;"></div><div class="b" style="left:3313px;top:206.72px;width:20px;height:1.3px;background:#3f6f96;opacity:.75;"></div><div class="b" style="left:3313px;top:208.66px;width:6px;height:1.3px;background:#6d6d52;opacity:.75;"></div><div class="b" style="left:3320.2px;top:208.66px;width:8.8px;height:1.3px;background:#7a5a4a;opacity:.75;"></div><div class="b" style="left:3313px;top:210.6px;width:6px;height:1.3px;background:#47693f;opacity:.75;"></div><div class="b" style="left:3313px;top:214.48px;width:12px;height:1.3px;background:#3f8877;opacity:.75;"></div><div class="b" style="left:3326.2px;top:214.48px;width:22px;height:1.3px;background:#3f8877;opacity:.75;"></div><div class="b" style="left:3349.4px;top:214.48px;width:3.6px;height:1.3px;background:#3f6f96;opacity:.75;"></div><div class="b" style="left:3313px;top:218.36px;width:6px;height:1.3px;background:#7a5a4a;opacity:.75;"></div><div class="b" style="left:3320.2px;top:218.36px;width:16px;height:1.3px;background:#7a5a4a;opacity:.75;"></div><div class="b" style="left:3337.4px;top:218.36px;width:1.6px;height:1.3px;background:#3f8877;opacity:.75;"></div><div class="b" style="left:3313px;top:220.3px;width:6px;height:1.3px;background:#6d6d52;opacity:.75;"></div><div class="b" style="left:3320.2px;top:220.3px;width:6px;height:1.3px;background:#47693f;opacity:.75;"></div><div class="b" style="left:3327.4px;top:220.3px;width:12px;height:1.3px;background:#47693f;opacity:.75;"></div><div class="b" style="left:3340.6px;top:220.3px;width:12px;height:1.3px;background:#7a5a4a;opacity:.75;"></div><div class="b" style="left:3353.8px;top:220.3px;width:9px;height:1.3px;background:#777;opacity:.75;"></div><div class="b" style="left:3364px;top:220.3px;width:6px;height:1.3px;background:#6d6d52;opacity:.75;"></div><div class="b" style="left:3371.2px;top:220.3px;width:22px;height:1.3px;background:#3f8877;opacity:.75;"></div><div class="b" style="left:3394.4px;top:220.3px;width:8.6px;height:1.3px;background:#47693f;opacity:.75;"></div><div class="b" style="left:3313px;top:222.24px;width:14px;height:1.3px;background:#3f6f96;opacity:.75;"></div><div class="b" style="left:3313px;top:224.18px;width:20px;height:1.3px;background:#3f8877;opacity:.75;"></div><div class="b" style="left:3313px;top:226.12px;width:6px;height:1.3px;background:#47693f;opacity:.75;"></div><div class="b" style="left:3320.2px;top:226.12px;width:12px;height:1.3px;background:#777;opacity:.75;"></div><div class="b" style="left:3333.4px;top:226.12px;width:12px;height:1.3px;background:#6d6d52;opacity:.75;"></div><div class="b" style="left:3346.6px;top:226.12px;width:12px;height:1.3px;background:#6d6d52;opacity:.75;"></div><div class="b" style="left:3359.8px;top:226.12px;width:13.2px;height:1.3px;background:#777;opacity:.75;"></div><div class="b" style="left:3313px;top:228.06px;width:10px;height:1.3px;background:#3f8877;opacity:.75;"></div><div class="b" style="left:3313px;top:230px;width:9px;height:1.3px;background:#777;opacity:.75;"></div><div class="b" style="left:3323.2px;top:230px;width:9px;height:1.3px;background:#6d6d52;opacity:.75;"></div><div class="b" style="left:3333.4px;top:230px;width:9.6px;height:1.3px;background:#47693f;opacity:.75;"></div><div class="b" style="left:3313px;top:231.94px;width:9px;height:1.3px;background:#6d6d52;opacity:.75;"></div><div class="b" style="left:3323.2px;top:231.94px;width:22px;height:1.3px;background:#7a5a4a;opacity:.75;"></div><div class="b" style="left:3346.4px;top:231.94px;width:10.6px;height:1.3px;background:#47693f;opacity:.75;"></div><div class="b" style="left:3313px;top:233.88px;width:6px;height:1.3px;background:#3f6f96;opacity:.75;"></div><div class="b" style="left:3320.2px;top:233.88px;width:0.8px;height:1.3px;background:#7a5a4a;opacity:.75;"></div><div class="b" style="left:3313px;top:235.82px;width:3px;height:1.3px;background:#6d6d52;opacity:.75;"></div><div class="b" style="left:3313px;top:237.76px;width:22px;height:1.3px;background:#3f8877;opacity:.75;"></div><div class="b" style="left:3336.2px;top:237.76px;width:16px;height:1.3px;background:#47693f;opacity:.75;"></div><div class="b" style="left:3313px;top:239.7px;width:12px;height:1.3px;background:#3f8877;opacity:.75;"></div><div class="b" style="left:3326.2px;top:239.7px;width:6px;height:1.3px;background:#6d6d52;opacity:.75;"></div><div class="b" style="left:3333.4px;top:239.7px;width:6px;height:1.3px;background:#6d6d52;opacity:.75;"></div><div class="b" style="left:3340.6px;top:239.7px;width:16px;height:1.3px;background:#6d6d52;opacity:.75;"></div><div class="b" style="left:3357.8px;top:239.7px;width:5.2px;height:1.3px;background:#6d6d52;opacity:.75;"></div><div class="b" style="left:3313px;top:241.64px;width:3px;height:1.3px;background:#777;opacity:.75;"></div><div class="b" style="left:3420px;top:132px;width:20px;height:772px;background:#252525;border-left:1px solid #2e2e2e;box-sizing:border-box;"></div><div class="b" style="left:3421px;top:285px;width:19px;height:2px;background:#7a7a7a;"></div><div class="b" style="left:2115px;top:904px;width:1325px;height:1px;background:#2b2b2b;"></div><span class="t" style="left:2145.2px;top:922.96px;font-size:15.4px;transform:scaleX(0.89);color:#9d9d9d;">PROBLEMS</span><span class="t" style="left:2256.2px;top:922.96px;font-size:15.4px;transform:scaleX(0.93);color:#9d9d9d;">OUTPUT</span><span class="t" style="left:2350.2px;top:922.96px;font-size:15.4px;transform:scaleX(0.91);color:#9d9d9d;">DEBUG CONSOLE</span><span class="t" style="left:2508px;top:922.96px;font-size:15.4px;transform:scaleX(0.94);color:#e7e7e7;">TERMINAL</span><span class="t" style="left:2616.4px;top:922.96px;font-size:15.4px;transform:scaleX(0.85);color:#9d9d9d;">PORTS</span><span class="t" style="left:2696.7px;top:922.96px;font-size:15.4px;transform:scaleX(0.94);color:#9d9d9d;">POSTMAN CONSOLE</span><div class="b" style="left:2505px;top:945.5px;width:79.5px;height:1.5px;background:#0078d4;"></div><svg class="ic" style="left:3102px;top:919px;width:23px;height:23px;color:#cccccc;"><use href="#term"/></svg><span class="t" style="left:3132.3px;top:921.26px;font-size:18px;transform:scaleX(0.87);color:#cccccc;">electron</span><svg class="ic" style="left:3200.5px;top:920px;width:21px;height:21px;color:#cccccc;"><use href="#plus"/></svg><svg class="ic" style="left:3225.5px;top:923.5px;width:15px;height:15px;color:#cccccc;"><use href="#chevd"/></svg><svg class="ic" style="left:3254px;top:919px;width:23px;height:23px;color:#cccccc;"><use href="#split"/></svg><svg class="ic" style="left:3287.6px;top:919.5px;width:22px;height:22px;color:#cccccc;"><use href="#trash"/></svg><svg class="ic" style="left:3322.3px;top:919px;width:23px;height:23px;color:#cccccc;"><use href="#dots"/></svg><svg class="ic" style="left:3358.2px;top:919px;width:23px;height:23px;color:#cccccc;"><use href="#chevu"/></svg><svg class="ic" style="left:3395.8px;top:919px;width:23px;height:23px;color:#cccccc;"><use href="#close"/></svg><span class="m" style="left:2145px;top:974.55px;font-size:18.33px;font-weight:bold;color:#1ec17c;">[nodemon] clean exit - waiting for changes before restart</span><span class="m" style="left:2145px;top:999.55px;font-size:18.33px;"><i style="color:#cccccc">PS C:\Users\User\Documents\Sourav\screen-record&gt; </i><i style="color:#e5e510">npm</i><i style="color:#cccccc"> run dev</i></span><span class="m" style="left:2145px;top:1049.55px;font-size:18.33px;-webkit-text-stroke:.3px #cccccc;color:#cccccc;">&gt; screen-record@1.0.0 dev</span><span class="m" style="left:2145px;top:1074.55px;font-size:18.33px;-webkit-text-stroke:.3px #cccccc;color:#cccccc;">&gt; nodemon --exec electron . --watch src/index.js --watch src --ext js,html,css</span><span class="m" style="left:2145px;top:1124.55px;font-size:18.33px;font-weight:bold;color:#e5e510;">[nodemon] 3.1.10</span><span class="m" style="left:2145px;top:1149.55px;font-size:18.33px;font-weight:bold;color:#e5e510;">[nodemon] to restart at any time, enter `rs`</span><span class="m" style="left:2145px;top:1174.55px;font-size:18.33px;font-weight:bold;color:#e5e510;">[nodemon] watching path(s): src\index.js src\**\*</span><span class="m" style="left:2145px;top:1199.55px;font-size:18.33px;font-weight:bold;color:#e5e510;">[nodemon] watching extensions: js,html,css</span><span class="m" style="left:2145px;top:1224.55px;font-size:18.33px;font-weight:bold;color:#1ec17c;">[nodemon] starting `electron .`</span><span class="m" style="left:2145px;top:1274.55px;font-size:18.33px;-webkit-text-stroke:.3px #cccccc;color:#cccccc;">Γ£à Screenshot uploaded to: https://chat.mcqstudy.com/ss/screenshot-1747370203.png</span><div class="b" style="left:2453px;top:1294.6px;width:622px;height:25px;background:#3a3d41;"></div><span class="m" style="left:2145px;top:1299.55px;font-size:18.33px;-webkit-text-stroke:.3px #cccccc;color:#cccccc;">Γ£à Screenshot uploaded to: https://chat.mcqstudy.com/ss/screenshot-1747370207.png</span><span class="m" style="left:2145px;top:1324.55px;font-size:18.33px;-webkit-text-stroke:.3px #cccccc;color:#cccccc;">Γ£à Screenshot uploaded to: https://chat.mcqstudy.com/ss/screenshot-1747370210.png</span><div class="b" style="left:2145.5px;top:1345.1px;width:10px;height:22px;border:1px solid #cccccc;box-sizing:border-box;"></div><div class="b" style="left:3420px;top:968px;width:20px;height:400px;background:#1b1b1b;border-left:1px solid #2b2b2b;box-sizing:border-box;"></div><div class="b" style="left:3421px;top:1131px;width:19px;height:237px;background:#404040;"></div><div class="b" style="left:3421px;top:1134px;width:6px;height:18px;background:#8a8a8a;"></div><div class="b" style="left:3434px;top:968px;width:6px;height:9px;background:#f14c4c;"></div><div class="b" style="left:1727px;top:1368px;width:1713px;height:1px;background:#2b2b2b;"></div><div class="b" style="left:1727px;top:1369px;width:53px;height:31px;background:#0078d4;"></div><svg class="ic" style="left:1744.7px;top:1374px;width:22px;height:22px;color:#fff;"><use href="#remote"/></svg><svg class="ic" style="left:1790px;top:1374.5px;width:21px;height:21px;color:#cccccc;"><use href="#branch"/></svg><span class="t" style="left:1817px;top:1376.95px;font-size:16.6px;transform:scaleX(1.01);color:#cccccc;">main</span><svg class="ic" style="left:1862.9px;top:1374.5px;width:21px;height:21px;color:#cccccc;"><use href="#sync"/></svg><svg class="ic" style="left:2597.5px;top:1374.5px;width:21px;height:21px;color:#cccccc;"><use href="#commit"/></svg><span class="t" style="left:2623.5px;top:1376.95px;font-size:16.6px;transform:scaleX(1.02);color:#cccccc;">Asiful Haque (1 day ago)</span><span class="t" style="left:2833.9px;top:1376.95px;font-size:16.6px;transform:scaleX(0.98);color:#cccccc;">Ln 18, Col 1</span><span class="t" style="left:2945.7px;top:1376.95px;font-size:16.6px;transform:scaleX(0.94);color:#cccccc;">Spaces: 2</span><span class="t" style="left:3039.2px;top:1376.95px;font-size:16.6px;transform:scaleX(0.95);color:#cccccc;">UTF-8</span><span class="t" style="left:3107.3px;top:1376.95px;font-size:16.6px;transform:scaleX(0.85);color:#cccccc;">CRLF</span><span class="t" style="left:3196.2px;top:1376.95px;font-size:16.6px;transform:scaleX(0.97);color:#cccccc;">JavaScript</span><span class="t" style="left:3363.3px;top:1376.95px;font-size:16.6px;transform:scaleX(1.03);color:#cccccc;">Prettier</span><span class="t" style="left:3169.7px;top:1376.96px;font-size:16px;transform:scaleX(1.01);color:#cccccc;font-weight:bold;">{ }</span><svg class="ic" style="left:3293.5px;top:1373.5px;width:23px;height:23px;color:#cccccc;"><use href="#copilot"/></svg><svg class="ic" style="left:3337px;top:1375px;width:20px;height:20px;color:#cccccc;"><use href="#checkall"/></svg><div class="b" style="left:1726.5px;top:0px;width:4.5px;height:401px;background:#222526;"></div><div class="b" style="left:1726.5px;top:401px;width:4.5px;height:641px;background:#c4c4c4;"></div><div class="b" style="left:1726.5px;top:824px;width:4.5px;height:40px;background:#c4506a;"></div><div class="b" style="left:1726.5px;top:1042px;width:4.5px;height:327px;background:#0e0e0e;"></div><div class="b" style="left:0px;top:1400px;width:1710px;height:40px;background:#efefef;"></div><div class="b" style="left:1710px;top:1400px;width:1730px;height:40px;background:linear-gradient(90deg,#c4dcea,#cfe0eb 40%,#d3e0ea);"></div><svg class="ic" style="left:15.75px;top:1411.75px;width:16.5px;height:16.5px;"><use href="#tbwin"/></svg><div class="b" style="left:48.5px;top:1400px;width:287px;height:40px;background:#fff;border:1px solid #c4c4c4;border-bottom:none;box-sizing:border-box;"></div><svg class="ic" style="left:60px;top:1412px;width:16px;height:16px;"><use href="#tbsearch"/></svg><span class="t" style="left:88.8px;top:1413.14px;font-size:14.6px;transform:scaleX(0.99);color:#3b3b3b;">Type here to search</span><svg class="ic" style="left:263px;top:1401px;width:70px;height:39px;"><use href="#eleph"/></svg><svg class="ic" style="left:349.8px;top:1406.5px;width:26px;height:26px;"><use href="#tbcopilot"/></svg><svg class="ic" style="left:398.8px;top:1406.5px;width:26px;height:26px;"><use href="#tbfz"/></svg><svg class="ic" style="left:447.8px;top:1406.5px;width:26px;height:26px;"><use href="#tbexp"/></svg><div class="b" style="left:440.8px;top:1437.5px;width:40px;height:2.5px;background:#0a6fc9;"></div><svg class="ic" style="left:496.8px;top:1406.5px;width:26px;height:26px;"><use href="#tbff"/></svg><svg class="ic" style="left:545.8px;top:1406.5px;width:26px;height:26px;"><use href="#tbchrome"/></svg><svg class="ic" style="left:594.8px;top:1406.5px;width:26px;height:26px;"><use href="#tbrar"/></svg><svg class="ic" style="left:643.8px;top:1406.5px;width:26px;height:26px;"><use href="#tbslack"/></svg><svg class="ic" style="left:693.3px;top:1407px;width:25px;height:25px;"><use href="#tbdoc"/></svg><svg class="ic" style="left:741.8px;top:1406.5px;width:26px;height:26px;"><use href="#tbpaint"/></svg><svg class="ic" style="left:790.8px;top:1406.5px;width:26px;height:26px;"><use href="#tbvsc"/></svg><div class="b" style="left:783.8px;top:1437.5px;width:40px;height:2.5px;background:#0a6fc9;"></div><svg class="ic" style="left:839.8px;top:1406.5px;width:26px;height:26px;"><use href="#tbvlc"/></svg><svg class="ic" style="left:888.8px;top:1406.5px;width:26px;height:26px;"><use href="#tbas"/></svg><svg class="ic" style="left:937.8px;top:1406.5px;width:26px;height:26px;"><use href="#tbchrome"/></svg><div class="b" style="left:930.8px;top:1437.5px;width:40px;height:2.5px;background:#0a6fc9;"></div><div class="b" style="left:975.8px;top:1400px;width:48px;height:40px;background:#fafafa;"></div><svg class="ic" style="left:986.8px;top:1406.5px;width:26px;height:26px;"><use href="#tbchrome"/></svg><div class="b" style="left:976.3px;top:1437.5px;width:47px;height:2.5px;background:#0a6fc9;"></div><svg class="ic" style="left:1035.8px;top:1406.5px;width:26px;height:26px;"><use href="#tbelectron"/></svg><div class="b" style="left:1028.8px;top:1437.5px;width:40px;height:2.5px;background:#0a6fc9;"></div><div class="b" style="left:955px;top:1421px;width:15px;height:15px;background:#c2185b;border-radius:8px;"></div><span class="t" style="left:959.33px;top:1423.96px;font-size:9.5px;color:#fff;">S</span><div class="b" style="left:1003px;top:1421px;width:15px;height:15px;background:#3a4250;border-radius:8px;"></div><div class="b" style="left:1528.5px;top:1395px;width:165px;height:33px;background:#dcefd7;border-radius:16px;opacity:.85;"></div><span class="t" style="left:1569px;top:1405.07px;font-size:13.5px;transform:scaleX(0.94);color:#b7cdb3;">Customize Chrome</span><div class="b" style="left:1710px;top:1392px;width:17px;height:9px;background:#0078d4;"></div><svg class="ic" style="left:3230.6px;top:1411px;width:16px;height:16px;"><use href="#tray1"/></svg><svg class="ic" style="left:3254.5px;top:1410.5px;width:17px;height:17px;"><use href="#tray2"/></svg><svg class="ic" style="left:3278.5px;top:1410.5px;width:17px;height:17px;"><use href="#tray3"/></svg><svg class="ic" style="left:3304.6px;top:1411px;width:16px;height:16px;"><use href="#tray4"/></svg><span class="t" style="left:3330.5px;top:1405.01px;font-size:11.8px;transform:scaleX(0.95);color:#222;">10:42 AM</span><span class="t" style="left:3329.5px;top:1423.01px;font-size:11.8px;transform:scaleX(0.98);color:#222;">5/16/2025</span><svg class="ic" style="left:3400.5px;top:1409.5px;width:17px;height:17px;"><use href="#tray5"/></svg><div class="b" style="left:3407px;top:1420px;width:14px;height:14px;background:#eef3f7;border:1px solid #555;border-radius:8px;box-sizing:border-box;"></div><span class="t" style="left:3411.5px;top:1423.38px;font-size:9px;color:#222;">2</span><div class="b" style="left:1226px;top:352px;width:985px;height:690px;background:#fff;box-shadow:0 0 0 1px #333;"></div><div class="b" style="left:1226px;top:352px;width:985px;height:27px;background:#000;"></div><div class="b" style="left:1235px;top:357.5px;width:16px;height:16px;background:#3a3f4f;border-radius:8px;"></div><span class="t" style="left:1257px;top:360.09px;font-size:12.3px;transform:scaleX(0.98);color:#fff;">Screenshot App</span><div class="b" style="left:2094px;top:365.5px;width:11px;height:1.2px;background:#fff;"></div><div class="b" style="left:2141px;top:360.5px;width:10px;height:10px;border:1.200px solid #fff;box-sizing:border-box;"></div><svg class="ic" style="left:2179.5px;top:357px;width:17px;height:17px;color:#fff;"><use href="#cx"/></svg><div class="b" style="left:1226px;top:379px;width:985px;height:22px;background:#1f2426;"></div><span class="t" style="left:1232px;top:384.59px;font-size:12.3px;transform:scaleX(0.98);color:#e6e6e6;">File</span><span class="t" style="left:1262.42px;top:384.59px;font-size:12.3px;transform:scaleX(0.98);color:#e6e6e6;">Edit</span><span class="t" style="left:1294.2px;top:384.59px;font-size:12.3px;transform:scaleX(0.98);color:#e6e6e6;">View</span><span class="t" style="left:1331.11px;top:384.59px;font-size:12.3px;transform:scaleX(0.98);color:#e6e6e6;">Window</span><span class="t" style="left:1384.98px;top:384.59px;font-size:12.3px;transform:scaleX(0.98);color:#e6e6e6;">Help</span><span class="t" style="left:1514.5px;top:424.57px;font-size:33px;transform:scaleX(0.98);color:#e9e9e9;font-weight:bold;">Auto Screenshot Capture</span><div class="b" style="left:1323px;top:494px;width:774px;height:385px;background:#efefef;border:1px solid #dcdcdc;box-sizing:border-box;overflow:hidden;"></div><div class="b" style="left:1554.5px;top:886px;width:160px;height:39px;background:#a5dfc4;border-radius:3px;"></div><span class="t" style="left:1596.44px;top:898.88px;font-size:15.5px;transform:scaleX(0.95);color:#92a99e;">Capturing...</span><div class="b" style="left:1718.5px;top:886px;width:148.5px;height:39px;background:#f0506e;border-radius:3px;"></div><span class="t" style="left:1735.45px;top:898.2px;font-size:16.3px;transform:scaleX(0.95);color:#16080b;-webkit-text-stroke:.3px;">Stop Screenshot</span></div></div><div class="b" style="left:14px;top:6px;width:28px;height:28px;background:#2b382a;border-radius:9px;"></div><svg class="ic" style="left:20.5px;top:12.5px;width:15px;height:15px;color:#e6ece3;"><use href="#cchev"/></svg><svg class="ic" style="left:56px;top:12px;width:16px;height:16px;"><use href="#fgpt"/></svg><span class="t tabt" style="left:80px;top:14.79px;font-size:12.300px;width:48.42px;color:#dde3da;transform:scaleX(.95)">Next.js</span><div class="b" style="left:129.8px;top:13px;width:1.6px;height:15px;background:#4a5747;border-radius:1px;"></div><svg class="ic" style="left:142px;top:12px;width:16px;height:16px;"><use href="#fgpt"/></svg><span class="t tabt" style="left:166px;top:14.79px;font-size:12.300px;width:48.42px;color:#dde3da;transform:scaleX(.95)">Intervie</span><div class="b" style="left:215.8px;top:13px;width:1.6px;height:15px;background:#4a5747;border-radius:1px;"></div><svg class="ic" style="left:228px;top:12px;width:16px;height:16px;"><use href="#fwa"/></svg><span class="t tabt" style="left:252px;top:14.79px;font-size:12.300px;width:48.42px;color:#dde3da;transform:scaleX(.95)">WhatsA</span><div class="b" style="left:301.8px;top:13px;width:1.6px;height:15px;background:#4a5747;border-radius:1px;"></div><svg class="ic" style="left:314px;top:12px;width:16px;height:16px;"><use href="#flc"/></svg><span class="t tabt" style="left:338px;top:14.79px;font-size:12.300px;width:48.42px;color:#dde3da;transform:scaleX(.95)">SQL 50</span><div class="b" style="left:387.8px;top:13px;width:1.6px;height:15px;background:#4a5747;border-radius:1px;"></div><svg class="ic" style="left:400px;top:12px;width:16px;height:16px;"><use href="#fjobs"/></svg><span class="t tabt" style="left:424px;top:14.79px;font-size:12.300px;width:48.42px;color:#dde3da;transform:scaleX(.95)">Compre</span><div class="b" style="left:473.8px;top:13px;width:1.6px;height:15px;background:#4a5747;border-radius:1px;"></div><svg class="ic" style="left:486px;top:12px;width:16px;height:16px;"><use href="#fgh"/></svg><span class="t tabt" style="left:510px;top:14.79px;font-size:12.300px;width:48.42px;color:#dde3da;transform:scaleX(.95)">SE-Inte</span><div class="b" style="left:559.8px;top:13px;width:1.6px;height:15px;background:#4a5747;border-radius:1px;"></div><svg class="ic" style="left:572px;top:12px;width:16px;height:16px;"><use href="#fgh"/></svg><span class="t tabt" style="left:596px;top:14.79px;font-size:12.300px;width:48.42px;color:#dde3da;transform:scaleX(.95)">Assesm</span><div class="b" style="left:645.8px;top:13px;width:1.6px;height:15px;background:#4a5747;border-radius:1px;"></div><svg class="ic" style="left:658px;top:12px;width:16px;height:16px;"><use href="#fostad"/></svg><span class="t tabt" style="left:682px;top:14.79px;font-size:12.300px;width:48.42px;color:#dde3da;transform:scaleX(.95)">Ostad -</span><div class="b" style="left:731.8px;top:13px;width:1.6px;height:15px;background:#4a5747;border-radius:1px;"></div><svg class="ic" style="left:744px;top:12px;width:16px;height:16px;"><use href="#fli"/></svg><span class="t tabt" style="left:768px;top:14.79px;font-size:12.300px;width:48.42px;color:#dde3da;transform:scaleX(.95)">LinkedI</span><div class="b" style="left:817.8px;top:13px;width:1.6px;height:15px;background:#4a5747;border-radius:1px;"></div><svg class="ic" style="left:830px;top:12px;width:16px;height:16px;"><use href="#fyt"/></svg><span class="t tabt" style="left:854px;top:14.79px;font-size:12.300px;width:48.42px;color:#dde3da;transform:scaleX(.95)">Shadcn</span><div class="b" style="left:903.8px;top:13px;width:1.6px;height:15px;background:#4a5747;border-radius:1px;"></div><svg class="ic" style="left:916px;top:12px;width:16px;height:16px;"><use href="#fgit"/></svg><span class="t tabt" style="left:940px;top:14.79px;font-size:12.300px;width:48.42px;color:#dde3da;transform:scaleX(.95)">project</span><div class="b" style="left:989.8px;top:13px;width:1.6px;height:15px;background:#4a5747;border-radius:1px;"></div><svg class="ic" style="left:1002px;top:12px;width:16px;height:16px;"><use href="#fv0"/></svg><span class="t tabt" style="left:1026px;top:14.79px;font-size:12.300px;width:48.42px;color:#dde3da;transform:scaleX(.95)">Project</span><div class="b" style="left:1075.8px;top:13px;width:1.6px;height:15px;background:#4a5747;border-radius:1px;"></div><svg class="ic" style="left:1088px;top:12px;width:16px;height:16px;"><use href="#fv0"/></svg><span class="t tabt" style="left:1112px;top:14.79px;font-size:12.300px;width:48.42px;color:#dde3da;transform:scaleX(.95)">Analytic</span><div class="b" style="left:1161.8px;top:13px;width:1.6px;height:15px;background:#4a5747;border-radius:1px;"></div><svg class="ic" style="left:1174px;top:12px;width:16px;height:16px;"><use href="#fslash"/></svg><span class="t tabt" style="left:1198px;top:14.79px;font-size:12.300px;width:48.42px;color:#dde3da;transform:scaleX(.95)">Input -</span><div class="b" style="left:1247.8px;top:13px;width:1.6px;height:15px;background:#4a5747;border-radius:1px;"></div><svg class="ic" style="left:1260px;top:12px;width:16px;height:16px;"><use href="#ftri"/></svg><span class="t tabt" style="left:1284px;top:14.79px;font-size:12.300px;width:48.42px;color:#dde3da;transform:scaleX(.95)">Create</span><div class="b" style="left:1333.8px;top:13px;width:1.6px;height:15px;background:#4a5747;border-radius:1px;"></div><svg class="ic" style="left:1346px;top:12px;width:16px;height:16px;"><use href="#fglobe"/></svg><span class="t tabt" style="left:1370px;top:14.79px;font-size:12.300px;width:48.42px;color:#dde3da;transform:scaleX(.95)">screens</span><div class="b" style="left:1420px;top:6px;width:84px;height:36px;background:#323f2f;border-radius:9px 9px 0 0;"></div><div class="b" style="left:1412px;top:32px;width:8px;height:8px;background:radial-gradient(circle at 0 0,transparent 7.500px,#323f2f 8px)"></div><div class="b" style="left:1504px;top:32px;width:8px;height:8px;background:radial-gradient(circle at 100% 0,transparent 7.500px,#323f2f 8px)"></div><svg class="ic" style="left:1429px;top:12px;width:16px;height:16px;"><use href="#fglobe"/></svg><span class="t" style="left:1453px;top:14.79px;font-size:12.3px;transform:scaleX(0.95);color:#eef3ec;">scr</span><svg class="ic" style="left:1478.5px;top:13.5px;width:13px;height:13px;color:#e8ede6;"><use href="#cx"/></svg><svg class="ic" style="left:1512.5px;top:11.5px;width:17px;height:17px;color:#e8ede6;"><use href="#cplus"/></svg><div class="b" style="left:1605px;top:19.5px;width:11px;height:1.2px;background:#e8ede6;"></div><div class="b" style="left:1652px;top:14.5px;width:10px;height:10px;border:1.200px solid #e8ede6;box-sizing:border-box;"></div><svg class="ic" style="left:1694px;top:11px;width:18px;height:18px;color:#e8ede6;stroke-width:.6;"><use href="#cx"/></svg><svg class="ic" style="left:20.5px;top:53.5px;width:19px;height:19px;color:#c7d0c3;"><use href="#cback"/></svg><svg class="ic" style="left:56.5px;top:53.5px;width:19px;height:19px;color:#7d8a79;"><use href="#cfwd"/></svg><svg class="ic" style="left:92.5px;top:53.5px;width:19px;height:19px;color:#c7d0c3;"><use href="#creload"/></svg><div class="b" style="left:128.5px;top:46px;width:1263px;height:34px;background:#1b2819;border-radius:17px;"></div><div class="b" style="left:133px;top:51px;width:24px;height:24px;background:#2c3a2a;border-radius:12px;"></div><svg class="ic" style="left:137.5px;top:55.5px;width:15px;height:15px;color:#e3e9df;"><use href="#ctune"/></svg><span class="t" style="left:165px;top:55.95px;font-size:14px;transform:scaleX(1.01);color:#e9eee6;">chat.mcqstudy.com/ss/screenshot-1747370539.png</span><svg class="ic" style="left:1358.5px;top:53px;width:19px;height:19px;color:#d5dcd1;"><use href="#cstar"/></svg><svg class="ic" style="left:1409px;top:53px;width:19px;height:19px" viewBox="0 0 19 19"><path fill="#a66ad6" d="M1 18C3 10 8 3 18 1c-1 5-4 9-8 11l-3-.5 1 2c-2 1.500-4 2.500-7 3.500z"/></svg><svg class="ic" style="left:1444px;top:53px;width:19px;height:19px" viewBox="0 0 19 19"><path fill="#e81111" d="M11 1l6 4-7 11-6-4z"/><path fill="#7a0808" d="M4 13l4 2.500-1 1.500-5 1z"/></svg><div class="b" style="left:1480px;top:55px;width:20px;height:16px;background:#eef1ff;border-radius:3px;border:1.500px solid #3b6cf0;box-sizing:border-box;"></div><div class="b" style="left:1486.5px;top:59.5px;width:7px;height:7px;background:#2a57e0;border-radius:4px;"></div><svg class="ic" style="left:1516.5px;top:53.5px;width:19px;height:19px;color:#d5dcd1;"><use href="#cpuzzle"/></svg><div class="b" style="left:1552.5px;top:55px;width:1.5px;height:16px;background:#4c5a49;"></div><div class="b" style="left:1564px;top:46px;width:117px;height:34px;background:#1f561c;border-radius:17px;"></div><div class="b" style="left:1573px;top:53px;width:20px;height:20px;background:#55624f;border-radius:10px;border:1.500px solid #3f8a3a;box-sizing:border-box;background:radial-gradient(circle at 40% 40%,#8a8a96,#3a3f4a 70%);"></div><span class="t" style="left:1599px;top:56.72px;font-size:12.5px;transform:scaleX(0.96);color:#dcefd8;">Verify it's you</span><svg class="ic" style="left:1695px;top:54px;width:18px;height:18px;color:#d5dcd1;"><use href="#cmore"/></svg><div class="b" style="left:1727px;top:0px;width:1713px;height:1400px;background:#181818;"></div><div class="b" style="left:1727px;top:0px;width:1713px;height:49px;background:#1f1f1f;"></div><div class="b" style="left:1727px;top:49px;width:1713px;height:1px;background:#2b2b2b;"></div><svg class="ic" style="left:1744.500px;top:12.500px;width:24px;height:24px" viewBox="0 0 24 24"><path fill="#1a8ad4" fill-rule="evenodd" d="M17.500 .8L23.300 3.600v16.800L17.500 23.200 7.300 13.600 3.100 16.900 1 15.700 4.900 12 1 8.300l2.100-1.200 4.200 3.300zM17.500 7.300L11.300 12l6.200 4.700z"/><path fill="#2fb3f7" d="M17.500 .8L23.300 3.600v16.800L17.500 23.200z"/></svg><span class="t" style="left:1793.5px;top:16.46px;font-size:18px;transform:scaleX(0.92);color:#9d9d9d;">File</span><span class="t" style="left:1844.4px;top:16.46px;font-size:18px;color:#9d9d9d;">Edit</span><span class="t" style="left:1898.3px;top:16.46px;font-size:18px;transform:scaleX(1.01);color:#9d9d9d;">Selection</span><span class="t" style="left:1996.3px;top:16.46px;font-size:18px;transform:scaleX(1.03);color:#9d9d9d;">View</span><span class="t" style="left:2058.9px;top:16.46px;font-size:18px;transform:scaleX(0.99);color:#9d9d9d;">Go</span><svg class="ic" style="left:2110px;top:13.2px;width:23px;height:23px;color:#9d9d9d;"><use href="#dots"/></svg><svg class="ic" style="left:2190px;top:13.5px;width:23px;height:23px;color:#9d9d9d;"><use href="#arrl"/></svg><svg class="ic" style="left:2227.5px;top:13.5px;width:23px;height:23px;color:#9d9d9d;"><use href="#arrr"/></svg><div class="b" style="left:2269.5px;top:8.5px;width:651px;height:32.5px;background:#292929;border:1px solid #3a3a3a;border-radius:9px;box-sizing:border-box;"></div><svg class="ic" style="left:2530.5px;top:14.5px;width:21px;height:21px;color:#9d9d9d;"><use href="#search"/></svg><span class="t" style="left:2555.5px;top:16.06px;font-size:18px;transform:scaleX(0.96);color:#9d9d9d;">screen-record</span><svg class="ic" style="left:2938.5px;top:13px;width:24px;height:24px;color:#9d9d9d;"><use href="#copilot"/></svg><svg class="ic" style="left:2966px;top:18px;width:15px;height:15px;color:#9d9d9d;"><use href="#chevd"/></svg><svg class="ic" style="left:3157.5px;top:13px;width:23px;height:23px;color:#9d9d9d;"><use href="#lay0"/></svg><svg class="ic" style="left:3194.5px;top:13px;width:23px;height:23px;color:#9d9d9d;"><use href="#lay1"/></svg><svg class="ic" style="left:3231.5px;top:13px;width:23px;height:23px;color:#9d9d9d;"><use href="#lay2"/></svg><svg class="ic" style="left:3269.5px;top:13px;width:23px;height:23px;color:#9d9d9d;"><use href="#lay3"/></svg><svg class="ic" style="left:3315.8px;top:15.5px;width:17px;height:17px;color:#9d9d9d;"><use href="#wmin"/></svg><svg class="ic" style="left:3361.7px;top:17px;width:16px;height:16px;color:#9d9d9d;"><use href="#wmax"/></svg><svg class="ic" style="left:3406.3px;top:15.5px;width:19px;height:19px;color:#9d9d9d;"><use href="#close"/></svg><div class="b" style="left:1799px;top:50px;width:1px;height:1318px;background:#2b2b2b;"></div><div class="b" style="left:1730px;top:50px;width:3px;height:69px;background:#2a6fb5;"></div><svg class="ic" style="left:1746.5px;top:66.55px;width:36px;height:36px;color:#d7d7d7;"><use href="#files"/></svg><svg class="ic" style="left:1746.5px;top:135.65px;width:36px;height:36px;color:#868686;"><use href="#search"/></svg><svg class="ic" style="left:1746.5px;top:204.75px;width:36px;height:36px;color:#868686;"><use href="#scm"/></svg><svg class="ic" style="left:1746.5px;top:273.85px;width:36px;height:36px;color:#868686;"><use href="#debug"/></svg><svg class="ic" style="left:1746.5px;top:342.95px;width:36px;height:36px;color:#868686;"><use href="#ext"/></svg><svg class="ic" style="left:1746.5px;top:412.05px;width:36px;height:36px;color:#868686;"><use href="#remoteexp"/></svg><svg class="ic" style="left:1747px;top:481.65px;width:35px;height:35px" viewBox="0 0 35 35"><circle cx="17.500" cy="17.500" r="17.500" fill="#868686"/><path fill="#181818" d="M30 6L15 17.500l15 9.500-2 2.500L11 18.500 28 4z"/><circle cx="29" cy="17.500" r="2" fill="#181818"/></svg><svg class="ic" style="left:1747px;top:550.25px;width:35px;height:35px" viewBox="0 0 35 35"><g fill="none" stroke="#868686" stroke-width="2.500"><circle cx="17.500" cy="19" r="14"/><circle cx="17.500" cy="19" r="9.500"/><circle cx="6" cy="6.500" r="2.500"/><circle cx="29" cy="6.500" r="2.500"/></g><path fill="#868686" d="M8.500 17h18v3a4 4 0 0 1-8 0 4 4 0 0 1-2 0 4 4 0 0 1-8 0z"/></svg><svg class="ic" style="left:1748.5px;top:1247.5px;width:33px;height:33px;color:#868686;"><use href="#account"/></svg><svg class="ic" style="left:1748.5px;top:1315px;width:33px;height:33px;color:#868686;"><use href="#gear"/></svg><div class="b" style="left:1765px;top:1333.5px;width:24px;height:24px;background:#0078d4;border-radius:12px;"></div><span class="t" style="left:1773.38px;top:1340px;font-size:13px;color:#fff;font-weight:bold;">1</span><div class="b" style="left:2114px;top:50px;width:1px;height:1318px;background:#2b2b2b;"></div><span class="t" style="left:1829.3px;top:68.26px;font-size:15.4px;transform:scaleX(0.85);color:#cccccc;">EXPLORER</span><svg class="ic" style="left:2071.5px;top:64.1px;width:23px;height:23px;color:#cccccc;"><use href="#dots"/></svg><svg class="ic" style="left:1802.5px;top:105.5px;width:23px;height:23px;color:#cccccc;"><use href="#chevd"/></svg><span class="t" style="left:1829.3px;top:109.66px;font-size:15.4px;transform:scaleX(0.93);color:#cccccc;font-weight:bold;">SCREEN-RECORD</span><svg class="ic" style="left:1968.9px;top:105.5px;width:23px;height:23px;color:#cccccc;"><use href="#newfile"/></svg><svg class="ic" style="left:2003.7px;top:105.5px;width:23px;height:23px;color:#cccccc;"><use href="#newfolder"/></svg><svg class="ic" style="left:2037.4px;top:105.5px;width:23px;height:23px;color:#cccccc;"><use href="#refresh"/></svg><svg class="ic" style="left:2072.1px;top:105.5px;width:23px;height:23px;color:#cccccc;"><use href="#collapse"/></svg><svg class="ic" style="left:1821.5px;top:136.44px;width:23px;height:23px;color:#cccccc;"><use href="#chevr"/></svg><svg class="ic" style="left:1850.5px;top:137.94px;width:22px;height:20px;"><use href="#fnode"/></svg><span class="t" style="left:1881px;top:139px;font-size:18px;transform:scaleX(1.02);color:#8c8c8c;">node_modules</span><svg class="ic" style="left:1821.5px;top:168.12px;width:23px;height:23px;color:#cccccc;"><use href="#chevd"/></svg><svg class="ic" style="left:1850.5px;top:169.62px;width:22px;height:20px;"><use href="#fsrc"/></svg><span class="t" style="left:1881px;top:170.68px;font-size:18px;transform:scaleX(0.93);color:#cccccc;">src</span><svg class="ic" style="left:1862px;top:201.3px;width:20px;height:20px;"><use href="#cssbg"/></svg><span class="t" style="left:1864.8px;top:210.46px;font-size:9.5px;transform:scaleX(0.95);color:#fff;font-weight:bold;">css</span><span class="t" style="left:1892.3px;top:202.36px;font-size:18px;transform:scaleX(0.96);color:#cccccc;">index.css</span><svg class="ic" style="left:1861.75px;top:232.73px;width:20.5px;height:20.5px;"><use href="#html5"/></svg><span class="t" style="left:1892.3px;top:234.04px;font-size:18px;transform:scaleX(1.04);color:#cccccc;">index.html</span><span class="t" style="left:1863.5px;top:265.6px;font-size:18.5px;transform:scaleX(0.77);color:#e6cd3c;font-weight:bold;">JS</span><span class="t" style="left:1892.3px;top:265.72px;font-size:18px;transform:scaleX(1.02);color:#cccccc;">preload.js</span><span class="t" style="left:1863.5px;top:297.28px;font-size:18.5px;transform:scaleX(0.77);color:#e6cd3c;font-weight:bold;">JS</span><span class="t" style="left:1892.3px;top:297.4px;font-size:18px;transform:scaleX(1.02);color:#cccccc;">render.js</span><svg class="ic" style="left:1862px;top:332.02px;width:20px;height:12px;"><use href="#phpbg"/></svg><span class="t" style="left:1865.3px;top:333.95px;font-size:8px;transform:scaleX(0.92);color:#222a50;font-weight:bold;font-style:italic;">php</span><span class="t" style="left:1892.3px;top:329.08px;font-size:18px;transform:scaleX(1.05);color:#cccccc;">upload.php</span><svg class="ic" style="left:1850.75px;top:359.45px;width:20.5px;height:20.5px;"><use href="#gitf"/></svg><span class="t" style="left:1881px;top:360.76px;font-size:18px;transform:scaleX(1.06);color:#cccccc;">.gitignore</span><span class="t" style="left:1852.5px;top:392.32px;font-size:18.5px;transform:scaleX(0.77);color:#e6cd3c;font-weight:bold;">JS</span><span class="t" style="left:1881px;top:392.44px;font-size:18px;transform:scaleX(1.03);color:#cccccc;">forge.config.js</span><div class="b" style="left:1800px;top:417.22px;width:314px;height:31.68px;background:#37373d;"></div><span class="t" style="left:1852.5px;top:424px;font-size:18.5px;transform:scaleX(0.77);color:#e6cd3c;font-weight:bold;">JS</span><span class="t" style="left:1881px;top:424.12px;font-size:18px;transform:scaleX(0.99);color:#e0e0e0;">main.js</span><svg class="ic" style="left:1851px;top:454.74px;width:20px;height:20px;"><use href="#npmf"/></svg><span class="t" style="left:1881px;top:455.8px;font-size:18px;transform:scaleX(1.02);color:#cccccc;">package-lock.json</span><svg class="ic" style="left:1851px;top:486.42px;width:20px;height:20px;"><use href="#npmf"/></svg><span class="t" style="left:1881px;top:487.48px;font-size:18px;color:#cccccc;">package.json</span><div class="b" style="left:1800px;top:1273px;width:314px;height:1px;background:#2b2b2b;"></div><svg class="ic" style="left:1803px;top:1277.5px;width:23px;height:23px;color:#cccccc;"><use href="#chevr"/></svg><span class="t" style="left:1829.3px;top:1281.66px;font-size:15.4px;transform:scaleX(0.98);color:#cccccc;font-weight:bold;">OUTLINE</span><div class="b" style="left:1800px;top:1304.68px;width:314px;height:1px;background:#2b2b2b;"></div><svg class="ic" style="left:1803px;top:1309.18px;width:23px;height:23px;color:#cccccc;"><use href="#chevr"/></svg><span class="t" style="left:1829.3px;top:1313.34px;font-size:15.4px;color:#cccccc;font-weight:bold;">TIMELINE</span><div class="b" style="left:1800px;top:1336.36px;width:314px;height:1px;background:#2b2b2b;"></div><svg class="ic" style="left:1803px;top:1340.86px;width:23px;height:23px;color:#cccccc;"><use href="#chevr"/></svg><span class="t" style="left:1829.3px;top:1345.02px;font-size:15.4px;color:#cccccc;font-weight:bold;">RUNNING TASKS</span><div class="b" style="left:2115px;top:50px;width:1325px;height:854px;background:#1f1f1f;"></div><div class="b" style="left:2115px;top:50px;width:1325px;height:49px;background:#181818;"></div><div class="b" style="left:2115px;top:99px;width:1325px;height:1px;background:#2b2b2b;"></div><div class="b" style="left:2287.6px;top:50px;width:1px;height:49px;background:#2b2b2b;"></div><svg class="ic" style="left:2131.25px;top:65.25px;width:20.5px;height:20.5px;"><use href="#html5"/></svg><span class="t" style="left:2162px;top:67.06px;font-size:18px;transform:scaleX(1.04);color:#9d9d9d;">index.html</span><div class="b" style="left:2460.4px;top:50px;width:1px;height:49px;background:#2b2b2b;"></div><span class="t" style="left:2306.6px;top:66.44px;font-size:18.5px;transform:scaleX(0.77);color:#e6cd3c;font-weight:bold;">JS</span><span class="t" style="left:2335.6px;top:67.06px;font-size:18px;transform:scaleX(1.01);color:#9d9d9d;">render.js</span><div class="b" style="left:2633.5px;top:50px;width:1px;height:49px;background:#2b2b2b;"></div><span class="t" style="left:2479.4px;top:66.44px;font-size:18.5px;transform:scaleX(0.77);color:#e6cd3c;font-weight:bold;">JS</span><span class="t" style="left:2508.4px;top:67.06px;font-size:18px;transform:scaleX(1.02);color:#9d9d9d;">preload.js</span><div class="b" style="left:2634.5px;top:50px;width:172.2px;height:50px;background:#1f1f1f;"></div><div class="b" style="left:2634.5px;top:50px;width:172.2px;height:1.5px;background:#0078d4;"></div><svg class="ic" style="left:2775px;top:64px;width:23px;height:23px;color:#e8e8e8;"><use href="#close"/></svg><div class="b" style="left:2805.7px;top:50px;width:1px;height:50px;background:#2b2b2b;"></div><span class="t" style="left:2652.5px;top:66.44px;font-size:18.5px;transform:scaleX(0.77);color:#e6cd3c;font-weight:bold;">JS</span><span class="t" style="left:2681.5px;top:67.06px;font-size:18px;transform:scaleX(0.99);color:#ffffff;">main.js</span><div class="b" style="left:2987.8px;top:50px;width:1px;height:49px;background:#2b2b2b;"></div><svg class="ic" style="left:2823.2px;top:69.5px;width:20px;height:12px;"><use href="#phpbg"/></svg><span class="t" style="left:2826.5px;top:71.43px;font-size:8px;transform:scaleX(0.92);color:#222a50;font-weight:bold;font-style:italic;">php</span><span class="t" style="left:2853.7px;top:67.06px;font-size:18px;transform:scaleX(1.05);color:#9d9d9d;">upload.php</span><div class="b" style="left:3160.3px;top:50px;width:1px;height:49px;background:#2b2b2b;"></div><svg class="ic" style="left:3005.3px;top:65.5px;width:20px;height:20px;"><use href="#cssbg"/></svg><span class="t" style="left:3008.1px;top:74.66px;font-size:9.5px;transform:scaleX(0.95);color:#fff;font-weight:bold;">css</span><span class="t" style="left:3035.8px;top:67.06px;font-size:18px;transform:scaleX(0.97);color:#9d9d9d;">index.css</span><svg class="ic" style="left:3320.5px;top:63.5px;width:23px;height:23px;color:#cccccc;"><use href="#run"/></svg><svg class="ic" style="left:3358.9px;top:63.5px;width:23px;height:23px;color:#cccccc;"><use href="#split"/></svg><svg class="ic" style="left:3395.8px;top:63.5px;width:23px;height:23px;color:#cccccc;"><use href="#dots"/></svg><span class="t" style="left:2142px;top:107.94px;font-size:18.5px;transform:scaleX(0.77);color:#e6cd3c;font-weight:bold;">JS</span><span class="t" style="left:2171px;top:107.76px;font-size:18px;transform:scaleX(0.99);color:#a9a9a9;">main.js</span><svg class="ic" style="left:2228.5px;top:105.5px;width:22px;height:22px;color:#a9a9a9;"><use href="#chevr"/></svg><span class="t" style="left:2251px;top:107.76px;font-size:18px;transform:scaleX(0.87);color:#a9a9a9;">...</span><div class="b" style="left:0;top:0;width:3440px;height:904px;overflow:hidden"><div class="b" style="left:2209px;top:572.74px;width:1093px;height:25.92px;border-top:2px solid #292929;border-bottom:2px solid #292929;box-sizing:border-box;"></div><div class="b" style="left:2209px;top:728.26px;width:1093px;height:25.92px;background:#212c38;"></div><div class="b" style="left:2209px;top:287.62px;width:1px;height:259.2px;background:#3b3b3b;"></div><div class="b" style="left:2209px;top:702.34px;width:1px;height:25.92px;background:#3b3b3b;"></div><div class="b" style="left:2209px;top:754.18px;width:1px;height:155.52px;background:#3b3b3b;"></div><div class="b" style="left:2229.58px;top:313.54px;width:1px;height:155.52px;background:#3b3b3b;"></div><div class="b" style="left:2229.58px;top:857.86px;width:1px;height:51.84px;background:#3b3b3b;"></div><div class="b" style="left:2250.16px;top:391.3px;width:1px;height:51.84px;background:#3b3b3b;"></div><span class="m" style="left:2161.21px;top:136.55px;font-size:17.15px;color:#6e7681;">1</span><span class="m" style="left:2208.8px;top:136.55px;font-size:17.15px;"><i style="color:#569cd6">const </i><i style="color:#ffd700">{</i><i style="color:#4fc1ff"> app</i><i style="color:#d4d4d4">, </i><i style="color:#4ec9b0">BrowserWindow</i><i style="color:#d4d4d4">, </i><i style="color:#4fc1ff">ipcMain</i><i style="color:#d4d4d4">, </i><i style="color:#4fc1ff">desktopCapturer</i><i style="color:#d4d4d4"> </i><i style="color:#ffd700">}</i><i style="color:#d4d4d4"> = </i><i style="color:#dcdcaa">require</i><i style="color:#ffd700">(</i><i style="color:#ce9178">'electron'</i><i style="color:#ffd700">)</i><i style="color:#d4d4d4">;</i></span><span class="m" style="left:2161.21px;top:162.47px;font-size:17.15px;color:#6e7681;">2</span><span class="m" style="left:2208.8px;top:162.47px;font-size:17.15px;"><i style="color:#569cd6">const </i><i style="color:#4fc1ff">path</i><i style="color:#d4d4d4"> = </i><i style="color:#dcdcaa">require</i><i style="color:#ffd700">(</i><i style="color:#ce9178">'path'</i><i style="color:#ffd700">)</i><i style="color:#d4d4d4">;</i></span><span class="m" style="left:2161.21px;top:188.39px;font-size:17.15px;color:#6e7681;">3</span><span class="m" style="left:2208.8px;top:188.39px;font-size:17.15px;"><i style="color:#569cd6">const </i><i style="color:#dcdcaa">fetch</i><i style="color:#d4d4d4"> = </i><i style="color:#dcdcaa">require</i><i style="color:#ffd700">(</i><i style="color:#ce9178">'node-fetch'</i><i style="color:#ffd700">)</i><i style="color:#d4d4d4">;</i><i style="color:#d4d4d4">        </i><i style="color:#6a9955">// Make sure it's v2.x (for CommonJS support)</i></span><span class="m" style="left:2161.21px;top:214.31px;font-size:17.15px;color:#6e7681;">4</span><span class="m" style="left:2208.8px;top:214.31px;font-size:17.15px;"><i style="color:#569cd6">const </i><i style="color:#4ec9b0">FormData</i><i style="color:#d4d4d4"> = </i><i style="color:#dcdcaa">require</i><i style="color:#ffd700">(</i><i style="color:#ce9178">'form-data'</i><i style="color:#ffd700">)</i><i style="color:#d4d4d4">;</i><i style="color:#d4d4d4">      </i><i style="color:#6a9955">// Handles multipart/form-data</i></span><span class="m" style="left:2161.21px;top:240.23px;font-size:17.15px;color:#6e7681;">5</span><span class="m" style="left:2161.21px;top:266.15px;font-size:17.15px;color:#6e7681;">6</span><span class="m" style="left:2208.8px;top:266.15px;font-size:17.15px;"><i style="color:#569cd6">function </i><i style="color:#dcdcaa">createWindow</i><i style="color:#ffd700">()</i><i style="color:#d4d4d4"> </i><i style="color:#ffd700">{</i></span><span class="m" style="left:2161.21px;top:292.07px;font-size:17.15px;color:#6e7681;">7</span><span class="m" style="left:2208.8px;top:292.07px;font-size:17.15px;"><i style="color:#569cd6">  const </i><i style="color:#4fc1ff">win</i><i style="color:#d4d4d4"> = </i><i style="color:#569cd6">new </i><i style="color:#4ec9b0">BrowserWindow</i><i style="color:#da70d6">(</i><i style="color:#179fff">{</i></span><span class="m" style="left:2161.21px;top:317.99px;font-size:17.15px;color:#6e7681;">8</span><span class="m" style="left:2208.8px;top:317.99px;font-size:17.15px;"><i style="color:#9cdcfe">    width</i><i style="color:#d4d4d4">: </i><i style="color:#b5cea8">1000</i><i style="color:#d4d4d4">,</i></span><span class="m" style="left:2161.21px;top:343.91px;font-size:17.15px;color:#6e7681;">9</span><span class="m" style="left:2208.8px;top:343.91px;font-size:17.15px;"><i style="color:#9cdcfe">    height</i><i style="color:#d4d4d4">: </i><i style="color:#b5cea8">700</i><i style="color:#d4d4d4">,</i></span><span class="m" style="left:2150.92px;top:369.83px;font-size:17.15px;color:#6e7681;">10</span><span class="m" style="left:2208.8px;top:369.83px;font-size:17.15px;"><i style="color:#9cdcfe">    webPreferences</i><i style="color:#d4d4d4">: </i><i style="color:#ffd700">{</i></span><span class="m" style="left:2150.92px;top:395.75px;font-size:17.15px;color:#6e7681;">11</span><span class="m" style="left:2208.8px;top:395.75px;font-size:17.15px;"><i style="color:#9cdcfe">      contextIsolation</i><i style="color:#d4d4d4">: </i><i style="color:#569cd6">true</i><i style="color:#d4d4d4">,</i></span><span class="m" style="left:2150.92px;top:421.67px;font-size:17.15px;color:#6e7681;">12</span><span class="m" style="left:2208.8px;top:421.67px;font-size:17.15px;"><i style="color:#9cdcfe">      preload</i><i style="color:#d4d4d4">: </i><i style="color:#4fc1ff">path</i><i style="color:#d4d4d4">.</i><i style="color:#dcdcaa">join</i><i style="color:#da70d6">(</i><i style="color:#9cdcfe">__dirname</i><i style="color:#d4d4d4">, </i><i style="color:#ce9178">'src'</i><i style="color:#d4d4d4">, </i><i style="color:#ce9178">'preload.js'</i><i style="color:#da70d6">)</i><i style="color:#d4d4d4">,</i></span><span class="m" style="left:2150.92px;top:447.59px;font-size:17.15px;color:#6e7681;">13</span><span class="m" style="left:2208.8px;top:447.59px;font-size:17.15px;"><i style="color:#d4d4d4">    </i><i style="color:#ffd700">}</i><i style="color:#d4d4d4">,</i></span><span class="m" style="left:2150.92px;top:473.51px;font-size:17.15px;color:#6e7681;">14</span><span class="m" style="left:2208.8px;top:473.51px;font-size:17.15px;"><i style="color:#d4d4d4">  </i><i style="color:#179fff">}</i><i style="color:#da70d6">)</i><i style="color:#d4d4d4">;</i></span><span class="m" style="left:2150.92px;top:499.43px;font-size:17.15px;color:#6e7681;">15</span><span class="m" style="left:2150.92px;top:525.35px;font-size:17.15px;color:#6e7681;">16</span><span class="m" style="left:2208.8px;top:525.35px;font-size:17.15px;"><i style="color:#4fc1ff">  win</i><i style="color:#d4d4d4">.</i><i style="color:#dcdcaa">loadFile</i><i style="color:#da70d6">(</i><i style="color:#4fc1ff">path</i><i style="color:#d4d4d4">.</i><i style="color:#dcdcaa">join</i><i style="color:#179fff">(</i><i style="color:#9cdcfe">__dirname</i><i style="color:#d4d4d4">, </i><i style="color:#ce9178">'src'</i><i style="color:#d4d4d4">, </i><i style="color:#ce9178">'index.html'</i><i style="color:#179fff">)</i><i style="color:#da70d6">)</i><i style="color:#d4d4d4">;</i></span><span class="m" style="left:2150.92px;top:551.27px;font-size:17.15px;color:#6e7681;">17</span><span class="m" style="left:2208.8px;top:551.27px;font-size:17.15px;"><i style="color:#ffd700">}</i></span><span class="m" style="left:2150.92px;top:577.19px;font-size:17.15px;color:#cccccc;">18</span><span class="m" style="left:2150.92px;top:603.11px;font-size:17.15px;color:#6e7681;">19</span><span class="m" style="left:2208.8px;top:603.11px;font-size:17.15px;"><i style="color:#4fc1ff">app</i><i style="color:#d4d4d4">.</i><i style="color:#dcdcaa">whenReady</i><i style="color:#ffd700">()</i><i style="color:#d4d4d4">.</i><i style="color:#dcdcaa">then</i><i style="color:#ffd700">(</i><i style="color:#dcdcaa">createWindow</i><i style="color:#ffd700">)</i><i style="color:#d4d4d4">;</i></span><span class="m" style="left:2150.92px;top:629.03px;font-size:17.15px;color:#6e7681;">20</span><span class="m" style="left:2150.92px;top:654.95px;font-size:17.15px;color:#6e7681;">21</span><span class="m" style="left:2208.8px;top:654.95px;font-size:17.15px;"><i style="color:#6a9955">// </i></span><svg class="ic" style="left:2243px;top:651.6px;width:20px;height:20px;"><use href="#emoji"/></svg><span class="m" style="left:2265.38px;top:654.95px;font-size:17.15px;"><i style="color:#6a9955"> Provide screen sources to the renderer</i></span><span class="m" style="left:2150.92px;top:680.87px;font-size:17.15px;color:#6e7681;">22</span><span class="m" style="left:2208.8px;top:680.87px;font-size:17.15px;"><i style="color:#4fc1ff">ipcMain</i><i style="color:#d4d4d4">.</i><i style="color:#dcdcaa">handle</i><i style="color:#ffd700">(</i><i style="color:#ce9178">'get-sources'</i><i style="color:#d4d4d4">, </i><i style="color:#569cd6">async </i><i style="color:#da70d6">()</i><i style="color:#d4d4d4"> </i><i style="color:#569cd6">=&gt;</i><i style="color:#d4d4d4"> </i><i style="color:#da70d6">{</i></span><span class="m" style="left:2150.92px;top:706.79px;font-size:17.15px;color:#6e7681;">23</span><span class="m" style="left:2208.8px;top:706.79px;font-size:17.15px;"><i style="color:#c586c0">  return </i><i style="color:#c586c0">await </i><i style="color:#4fc1ff">desktopCapturer</i><i style="color:#d4d4d4">.</i><i style="color:#dcdcaa">getSources</i><i style="color:#179fff">(</i><i style="color:#ffd700">{</i><i style="color:#9cdcfe"> types</i><i style="color:#d4d4d4">: </i><i style="color:#da70d6">[</i><i style="color:#ce9178">'screen'</i><i style="color:#da70d6">]</i><i style="color:#d4d4d4"> </i><i style="color:#ffd700">}</i><i style="color:#179fff">)</i><i style="color:#d4d4d4">;</i></span><span class="m" style="left:2150.92px;top:732.71px;font-size:17.15px;color:#6e7681;">24</span><span class="m" style="left:2208.8px;top:732.71px;font-size:17.15px;"><i style="color:#da70d6">}</i><i style="color:#ffd700">)</i><i style="color:#d4d4d4">;</i></span><span class="m" style="left:2150.92px;top:758.63px;font-size:17.15px;color:#6e7681;">28</span><span class="m" style="left:2208.8px;top:758.63px;font-size:17.15px;"><i style="color:#569cd6">  const </i><i style="color:#4fc1ff">filename</i><i style="color:#d4d4d4"> = </i><i style="color:#ce9178">`screenshot-</i><i style="color:#569cd6">${</i><i style="color:#4ec9b0">Date</i><i style="color:#d4d4d4">.</i><i style="color:#dcdcaa">now</i><i style="color:#ffd700">()</i><i style="color:#569cd6">}</i><i style="color:#ce9178">.png`</i><i style="color:#d4d4d4">;</i></span><span class="m" style="left:2150.92px;top:784.55px;font-size:17.15px;color:#6e7681;">29</span><span class="m" style="left:2150.92px;top:810.47px;font-size:17.15px;color:#6e7681;">30</span><span class="m" style="left:2208.8px;top:810.47px;font-size:17.15px;"><i style="color:#569cd6">  const </i><i style="color:#4fc1ff">form</i><i style="color:#d4d4d4"> = </i><i style="color:#569cd6">new </i><i style="color:#4ec9b0">FormData</i><i style="color:#179fff">()</i><i style="color:#d4d4d4">;</i></span><span class="m" style="left:2150.92px;top:836.39px;font-size:17.15px;color:#6e7681;">31</span><span class="m" style="left:2208.8px;top:836.39px;font-size:17.15px;"><i style="color:#4fc1ff">  form</i><i style="color:#d4d4d4">.</i><i style="color:#dcdcaa">append</i><i style="color:#179fff">(</i><i style="color:#ce9178">'file'</i><i style="color:#d4d4d4">, </i><i style="color:#4ec9b0">Buffer</i><i style="color:#d4d4d4">.</i><i style="color:#dcdcaa">from</i><i style="color:#ffd700">(</i><i style="color:#9cdcfe">buffer</i><i style="color:#ffd700">)</i><i style="color:#d4d4d4">, </i><i style="color:#ffd700">{</i></span><span class="m" style="left:2150.92px;top:862.31px;font-size:17.15px;color:#6e7681;">32</span><span class="m" style="left:2208.8px;top:862.31px;font-size:17.15px;"><i style="color:#9cdcfe">    filename</i><i style="color:#d4d4d4">,</i></span><span class="m" style="left:2150.92px;top:888.23px;font-size:17.15px;color:#6e7681;">33</span><span class="m" style="left:2208.8px;top:888.23px;font-size:17.15px;"><i style="color:#9cdcfe">    contentType</i><i style="color:#d4d4d4">: </i><i style="color:#ce9178">'image/png'</i><i style="color:#d4d4d4">,</i></span><svg class="ic" style="left:2182px;top:730.22px;width:22px;height:22px;color:#c5c5c5;"><use href="#chevr"/></svg><svg class="ic" style="left:2244.5px;top:734.72px;width:15px;height:15px;color:#7c8690;"><use href="#dots"/></svg><div class="b" style="left:2796.5px;top:155px;width:2px;height:2px;background:#9a9a9a;"></div><div class="b" style="left:2801.1px;top:155px;width:2px;height:2px;background:#9a9a9a;"></div><div class="b" style="left:2805.7px;top:155px;width:2px;height:2px;background:#9a9a9a;"></div></div><div class="b" style="left:3311px;top:133px;width:12px;height:1.3px;background:#6d6d52;opacity:.75;"></div><div class="b" style="left:3324.2px;top:133px;width:16px;height:1.3px;background:#47693f;opacity:.75;"></div><div class="b" style="left:3341.4px;top:133px;width:6px;height:1.3px;background:#3f6f96;opacity:.75;"></div><div class="b" style="left:3348.6px;top:133px;width:22px;height:1.3px;background:#3f6f96;opacity:.75;"></div><div class="b" style="left:3371.8px;top:133px;width:12px;height:1.3px;background:#777;opacity:.75;"></div><div class="b" style="left:3385px;top:133px;width:3px;height:1.3px;background:#777;opacity:.75;"></div><div class="b" style="left:3311px;top:134.94px;width:9px;height:1.3px;background:#3f6f96;opacity:.75;"></div><div class="b" style="left:3321.2px;top:134.94px;width:6px;height:1.3px;background:#7a5a4a;opacity:.75;"></div><div class="b" style="left:3328.4px;top:134.94px;width:11.6px;height:1.3px;background:#3f6f96;opacity:.75;"></div><div class="b" style="left:3311px;top:136.88px;width:9px;height:1.3px;background:#3f6f96;opacity:.75;"></div><div class="b" style="left:3321.2px;top:136.88px;width:22px;height:1.3px;background:#7a5a4a;opacity:.75;"></div><div class="b" style="left:3344.4px;top:136.88px;width:6px;height:1.3px;background:#777;opacity:.75;"></div><div class="b" style="left:3351.6px;top:136.88px;width:6px;height:1.3px;background:#6d6d52;opacity:.75;"></div><div class="b" style="left:3358.8px;top:136.88px;width:22px;height:1.3px;background:#3f6f96;opacity:.75;"></div><div class="b" style="left:3382px;top:136.88px;width:19px;height:1.3px;background:#777;opacity:.75;"></div><div class="b" style="left:3311px;top:138.82px;width:16px;height:1.3px;background:#3f6f96;opacity:.75;"></div><div class="b" style="left:3328.2px;top:138.82px;width:9px;height:1.3px;background:#3f6f96;opacity:.75;"></div><div class="b" style="left:3338.4px;top:138.82px;width:22px;height:1.3px;background:#6d6d52;opacity:.75;"></div><div class="b" style="left:3361.6px;top:138.82px;width:12px;height:1.3px;background:#7a5a4a;opacity:.75;"></div><div class="b" style="left:3374.8px;top:138.82px;width:9px;height:1.3px;background:#777;opacity:.75;"></div><div class="b" style="left:3385px;top:138.82px;width:1px;height:1.3px;background:#777;opacity:.75;"></div><div class="b" style="left:3311px;top:142.7px;width:12px;height:1.3px;background:#777;opacity:.75;"></div><div class="b" style="left:3324.2px;top:142.7px;width:9px;height:1.3px;background:#3f6f96;opacity:.75;"></div><div class="b" style="left:3334.4px;top:142.7px;width:1.6px;height:1.3px;background:#777;opacity:.75;"></div><div class="b" style="left:3313px;top:144.64px;width:9px;height:1.3px;background:#3f8877;opacity:.75;"></div><div class="b" style="left:3323.2px;top:144.64px;width:6px;height:1.3px;background:#777;opacity:.75;"></div><div class="b" style="left:3330.4px;top:144.64px;width:6px;height:1.3px;background:#777;opacity:.75;"></div><div class="b" style="left:3337.6px;top:144.64px;width:6px;height:1.3px;background:#777;opacity:.75;"></div><div class="b" style="left:3344.8px;top:144.64px;width:1.2px;height:1.3px;background:#7a5a4a;opacity:.75;"></div><div class="b" style="left:3313px;top:146.58px;width:16px;height:1.3px;background:#7a5a4a;opacity:.75;"></div><div class="b" style="left:3313px;top:148.52px;width:12px;height:1.3px;background:#7a5a4a;opacity:.75;"></div><div class="b" style="left:3326.2px;top:148.52px;width:1.8px;height:1.3px;background:#7a5a4a;opacity:.75;"></div><div class="b" style="left:3313px;top:150.46px;width:12px;height:1.3px;background:#3f8877;opacity:.75;"></div><div class="b" style="left:3326.2px;top:150.46px;width:8.8px;height:1.3px;background:#6d6d52;opacity:.75;"></div><div class="b" style="left:3313px;top:152.4px;width:9px;height:1.3px;background:#3f6f96;opacity:.75;"></div><div class="b" style="left:3323.2px;top:152.4px;width:18.8px;height:1.3px;background:#3f8877;opacity:.75;"></div><div class="b" style="left:3313px;top:154.34px;width:22px;height:1.3px;background:#7a5a4a;opacity:.75;"></div><div class="b" style="left:3336.2px;top:154.34px;width:12px;height:1.3px;background:#47693f;opacity:.75;"></div><div class="b" style="left:3349.4px;top:154.34px;width:16px;height:1.3px;background:#3f8877;opacity:.75;"></div><div class="b" style="left:3366.6px;top:154.34px;width:4.4px;height:1.3px;background:#3f6f96;opacity:.75;"></div><div class="b" style="left:3313px;top:156.28px;width:6px;height:1.3px;background:#777;opacity:.75;"></div><div class="b" style="left:3313px;top:158.22px;width:5px;height:1.3px;background:#6d6d52;opacity:.75;"></div><div class="b" style="left:3313px;top:162.1px;width:12px;height:1.3px;background:#6d6d52;opacity:.75;"></div><div class="b" style="left:3326.2px;top:162.1px;width:16px;height:1.3px;background:#7a5a4a;opacity:.75;"></div><div class="b" style="left:3343.4px;top:162.1px;width:6px;height:1.3px;background:#47693f;opacity:.75;"></div><div class="b" style="left:3350.6px;top:162.1px;width:6px;height:1.3px;background:#777;opacity:.75;"></div><div class="b" style="left:3357.8px;top:162.1px;width:13.2px;height:1.3px;background:#3f8877;opacity:.75;"></div><div class="b" style="left:3313px;top:164.04px;width:1px;height:1.3px;background:#47693f;opacity:.75;"></div><div class="b" style="left:3313px;top:167.92px;width:12px;height:1.3px;background:#777;opacity:.75;"></div><div class="b" style="left:3326.2px;top:167.92px;width:16px;height:1.3px;background:#777;opacity:.75;"></div><div class="b" style="left:3343.4px;top:167.92px;width:4.6px;height:1.3px;background:#3f6f96;opacity:.75;"></div><div class="b" style="left:3313px;top:171.8px;width:6px;height:1.3px;background:#3f8877;opacity:.75;"></div><div class="b" style="left:3320.2px;top:171.8px;width:16px;height:1.3px;background:#47693f;opacity:.75;"></div><div class="b" style="left:3337.4px;top:171.8px;width:6px;height:1.3px;background:#3f6f96;opacity:.75;"></div><div class="b" style="left:3344.6px;top:171.8px;width:12px;height:1.3px;background:#47693f;opacity:.75;"></div><div class="b" style="left:3357.8px;top:171.8px;width:0.2px;height:1.3px;background:#47693f;opacity:.75;"></div><div class="b" style="left:3313px;top:173.74px;width:16px;height:1.3px;background:#3f8877;opacity:.75;"></div><div class="b" style="left:3330.2px;top:173.74px;width:16px;height:1.3px;background:#47693f;opacity:.75;"></div><div class="b" style="left:3347.4px;top:173.74px;width:9.6px;height:1.3px;background:#3f6f96;opacity:.75;"></div><div class="b" style="left:3313px;top:175.68px;width:16px;height:1.3px;background:#3f8877;opacity:.75;"></div><div class="b" style="left:3330.2px;top:175.68px;width:9px;height:1.3px;background:#777;opacity:.75;"></div><div class="b" style="left:3340.4px;top:175.68px;width:6px;height:1.3px;background:#7a5a4a;opacity:.75;"></div><div class="b" style="left:3347.6px;top:175.68px;width:6px;height:1.3px;background:#6d6d52;opacity:.75;"></div><div class="b" style="left:3354.8px;top:175.68px;width:12px;height:1.3px;background:#6d6d52;opacity:.75;"></div><div class="b" style="left:3368px;top:175.68px;width:9px;height:1.3px;background:#7a5a4a;opacity:.75;"></div><div class="b" style="left:3378.2px;top:175.68px;width:0.8px;height:1.3px;background:#7a5a4a;opacity:.75;"></div><div class="b" style="left:3313px;top:177.62px;width:3px;height:1.3px;background:#6d6d52;opacity:.75;"></div><div class="b" style="left:3313px;top:181.5px;width:16px;height:1.3px;background:#7a5a4a;opacity:.75;"></div><div class="b" style="left:3330.2px;top:181.5px;width:22px;height:1.3px;background:#3f8877;opacity:.75;"></div><div class="b" style="left:3353.4px;top:181.5px;width:3.6px;height:1.3px;background:#7a5a4a;opacity:.75;"></div><div class="b" style="left:3313px;top:183.44px;width:22px;height:1.3px;background:#3f8877;opacity:.75;"></div><div class="b" style="left:3336.2px;top:183.44px;width:6.8px;height:1.3px;background:#3f8877;opacity:.75;"></div><div class="b" style="left:3313px;top:185.38px;width:16px;height:1.3px;background:#6d6d52;opacity:.75;"></div><div class="b" style="left:3330.2px;top:185.38px;width:9px;height:1.3px;background:#3f6f96;opacity:.75;"></div><div class="b" style="left:3340.4px;top:185.38px;width:9px;height:1.3px;background:#6d6d52;opacity:.75;"></div><div class="b" style="left:3350.6px;top:185.38px;width:9px;height:1.3px;background:#47693f;opacity:.75;"></div><div class="b" style="left:3360.8px;top:185.38px;width:2.2px;height:1.3px;background:#3f6f96;opacity:.75;"></div><div class="b" style="left:3313px;top:189.26px;width:16px;height:1.3px;background:#777;opacity:.75;"></div><div class="b" style="left:3330.2px;top:189.26px;width:9px;height:1.3px;background:#3f8877;opacity:.75;"></div><div class="b" style="left:3340.4px;top:189.26px;width:12px;height:1.3px;background:#3f6f96;opacity:.75;"></div><div class="b" style="left:3313px;top:191.2px;width:9px;height:1.3px;background:#7a5a4a;opacity:.75;"></div><div class="b" style="left:3323.2px;top:191.2px;width:22px;height:1.3px;background:#3f8877;opacity:.75;"></div><div class="b" style="left:3346.4px;top:191.2px;width:12.6px;height:1.3px;background:#777;opacity:.75;"></div><div class="b" style="left:3313px;top:193.14px;width:12px;height:1.3px;background:#6d6d52;opacity:.75;"></div><div class="b" style="left:3326.2px;top:193.14px;width:0.8px;height:1.3px;background:#777;opacity:.75;"></div><div class="b" style="left:3313px;top:195.08px;width:6px;height:1.3px;background:#7a5a4a;opacity:.75;"></div><div class="b" style="left:3320.2px;top:195.08px;width:22px;height:1.3px;background:#7a5a4a;opacity:.75;"></div><div class="b" style="left:3313px;top:197.02px;width:16px;height:1.3px;background:#7a5a4a;opacity:.75;"></div><div class="b" style="left:3330.2px;top:197.02px;width:2.8px;height:1.3px;background:#3f6f96;opacity:.75;"></div><div class="b" style="left:3313px;top:198.96px;width:6px;height:1.3px;background:#47693f;opacity:.75;"></div><div class="b" style="left:3313px;top:202.84px;width:8px;height:1.3px;background:#3f6f96;opacity:.75;"></div><div class="b" style="left:3313px;top:204.78px;width:9px;height:1.3px;background:#3f6f96;opacity:.75;"></div><div class="b" style="left:3323.2px;top:204.78px;width:9px;height:1.3px;background:#7a5a4a;opacity:.75;"></div><div class="b" style="left:3333.4px;top:204.78px;width:9px;height:1.3px;background:#3f6f96;opacity:.75;"></div><div class="b" style="left:3343.6px;top:204.78px;width:12px;height:1.3px;background:#777;opacity:.75;"></div><div class="b" style="left:3356.8px;top:204.78px;width:6px;height:1.3px;background:#3f6f96;opacity:.75;"></div><div class="b" style="left:3364px;top:204.78px;width:6px;height:1.3px;background:#777;opacity:.75;"></div><div class="b" style="left:3371.2px;top:204.78px;width:9px;height:1.3px;background:#777;opacity:.75;"></div><div class="b" style="left:3381.4px;top:204.78px;width:1.6px;height:1.3px;background:#3f8877;opacity:.75;"></div><div class="b" style="left:3313px;top:206.72px;width:20px;height:1.3px;background:#3f6f96;opacity:.75;"></div><div class="b" style="left:3313px;top:208.66px;width:6px;height:1.3px;background:#6d6d52;opacity:.75;"></div><div class="b" style="left:3320.2px;top:208.66px;width:8.8px;height:1.3px;background:#7a5a4a;opacity:.75;"></div><div class="b" style="left:3313px;top:210.6px;width:6px;height:1.3px;background:#47693f;opacity:.75;"></div><div class="b" style="left:3313px;top:214.48px;width:12px;height:1.3px;background:#3f8877;opacity:.75;"></div><div class="b" style="left:3326.2px;top:214.48px;width:22px;height:1.3px;background:#3f8877;opacity:.75;"></div><div class="b" style="left:3349.4px;top:214.48px;width:3.6px;height:1.3px;background:#3f6f96;opacity:.75;"></div><div class="b" style="left:3313px;top:218.36px;width:6px;height:1.3px;background:#7a5a4a;opacity:.75;"></div><div class="b" style="left:3320.2px;top:218.36px;width:16px;height:1.3px;background:#7a5a4a;opacity:.75;"></div><div class="b" style="left:3337.4px;top:218.36px;width:1.6px;height:1.3px;background:#3f8877;opacity:.75;"></div><div class="b" style="left:3313px;top:220.3px;width:6px;height:1.3px;background:#6d6d52;opacity:.75;"></div><div class="b" style="left:3320.2px;top:220.3px;width:6px;height:1.3px;background:#47693f;opacity:.75;"></div><div class="b" style="left:3327.4px;top:220.3px;width:12px;height:1.3px;background:#47693f;opacity:.75;"></div><div class="b" style="left:3340.6px;top:220.3px;width:12px;height:1.3px;background:#7a5a4a;opacity:.75;"></div><div class="b" style="left:3353.8px;top:220.3px;width:9px;height:1.3px;background:#777;opacity:.75;"></div><div class="b" style="left:3364px;top:220.3px;width:6px;height:1.3px;background:#6d6d52;opacity:.75;"></div><div class="b" style="left:3371.2px;top:220.3px;width:22px;height:1.3px;background:#3f8877;opacity:.75;"></div><div class="b" style="left:3394.4px;top:220.3px;width:8.6px;height:1.3px;background:#47693f;opacity:.75;"></div><div class="b" style="left:3313px;top:222.24px;width:14px;height:1.3px;background:#3f6f96;opacity:.75;"></div><div class="b" style="left:3313px;top:224.18px;width:20px;height:1.3px;background:#3f8877;opacity:.75;"></div><div class="b" style="left:3313px;top:226.12px;width:6px;height:1.3px;background:#47693f;opacity:.75;"></div><div class="b" style="left:3320.2px;top:226.12px;width:12px;height:1.3px;background:#777;opacity:.75;"></div><div class="b" style="left:3333.4px;top:226.12px;width:12px;height:1.3px;background:#6d6d52;opacity:.75;"></div><div class="b" style="left:3346.6px;top:226.12px;width:12px;height:1.3px;background:#6d6d52;opacity:.75;"></div><div class="b" style="left:3359.8px;top:226.12px;width:13.2px;height:1.3px;background:#777;opacity:.75;"></div><div class="b" style="left:3313px;top:228.06px;width:10px;height:1.3px;background:#3f8877;opacity:.75;"></div><div class="b" style="left:3313px;top:230px;width:9px;height:1.3px;background:#777;opacity:.75;"></div><div class="b" style="left:3323.2px;top:230px;width:9px;height:1.3px;background:#6d6d52;opacity:.75;"></div><div class="b" style="left:3333.4px;top:230px;width:9.6px;height:1.3px;background:#47693f;opacity:.75;"></div><div class="b" style="left:3313px;top:231.94px;width:9px;height:1.3px;background:#6d6d52;opacity:.75;"></div><div class="b" style="left:3323.2px;top:231.94px;width:22px;height:1.3px;background:#7a5a4a;opacity:.75;"></div><div class="b" style="left:3346.4px;top:231.94px;width:10.6px;height:1.3px;background:#47693f;opacity:.75;"></div><div class="b" style="left:3313px;top:233.88px;width:6px;height:1.3px;background:#3f6f96;opacity:.75;"></div><div class="b" style="left:3320.2px;top:233.88px;width:0.8px;height:1.3px;background:#7a5a4a;opacity:.75;"></div><div class="b" style="left:3313px;top:235.82px;width:3px;height:1.3px;background:#6d6d52;opacity:.75;"></div><div class="b" style="left:3313px;top:237.76px;width:22px;height:1.3px;background:#3f8877;opacity:.75;"></div><div class="b" style="left:3336.2px;top:237.76px;width:16px;height:1.3px;background:#47693f;opacity:.75;"></div><div class="b" style="left:3313px;top:239.7px;width:12px;height:1.3px;background:#3f8877;opacity:.75;"></div><div class="b" style="left:3326.2px;top:239.7px;width:6px;height:1.3px;background:#6d6d52;opacity:.75;"></div><div class="b" style="left:3333.4px;top:239.7px;width:6px;height:1.3px;background:#6d6d52;opacity:.75;"></div><div class="b" style="left:3340.6px;top:239.7px;width:16px;height:1.3px;background:#6d6d52;opacity:.75;"></div><div class="b" style="left:3357.8px;top:239.7px;width:5.2px;height:1.3px;background:#6d6d52;opacity:.75;"></div><div class="b" style="left:3313px;top:241.64px;width:3px;height:1.3px;background:#777;opacity:.75;"></div><div class="b" style="left:3420px;top:132px;width:20px;height:772px;background:#252525;border-left:1px solid #2e2e2e;box-sizing:border-box;"></div><div class="b" style="left:3421px;top:285px;width:19px;height:2px;background:#7a7a7a;"></div><div class="b" style="left:2115px;top:904px;width:1325px;height:1px;background:#2b2b2b;"></div><span class="t" style="left:2145.2px;top:922.96px;font-size:15.4px;transform:scaleX(0.89);color:#9d9d9d;">PROBLEMS</span><span class="t" style="left:2256.2px;top:922.96px;font-size:15.4px;transform:scaleX(0.93);color:#9d9d9d;">OUTPUT</span><span class="t" style="left:2350.2px;top:922.96px;font-size:15.4px;transform:scaleX(0.91);color:#9d9d9d;">DEBUG CONSOLE</span><span class="t" style="left:2508px;top:922.96px;font-size:15.4px;transform:scaleX(0.94);color:#e7e7e7;">TERMINAL</span><span class="t" style="left:2616.4px;top:922.96px;font-size:15.4px;transform:scaleX(0.85);color:#9d9d9d;">PORTS</span><span class="t" style="left:2696.7px;top:922.96px;font-size:15.4px;transform:scaleX(0.94);color:#9d9d9d;">POSTMAN CONSOLE</span><div class="b" style="left:2505px;top:945.5px;width:79.5px;height:1.5px;background:#0078d4;"></div><svg class="ic" style="left:3102px;top:919px;width:23px;height:23px;color:#cccccc;"><use href="#term"/></svg><span class="t" style="left:3132.3px;top:921.26px;font-size:18px;transform:scaleX(0.87);color:#cccccc;">electron</span><svg class="ic" style="left:3200.5px;top:920px;width:21px;height:21px;color:#cccccc;"><use href="#plus"/></svg><svg class="ic" style="left:3225.5px;top:923.5px;width:15px;height:15px;color:#cccccc;"><use href="#chevd"/></svg><svg class="ic" style="left:3254px;top:919px;width:23px;height:23px;color:#cccccc;"><use href="#split"/></svg><svg class="ic" style="left:3287.6px;top:919.5px;width:22px;height:22px;color:#cccccc;"><use href="#trash"/></svg><svg class="ic" style="left:3322.3px;top:919px;width:23px;height:23px;color:#cccccc;"><use href="#dots"/></svg><svg class="ic" style="left:3358.2px;top:919px;width:23px;height:23px;color:#cccccc;"><use href="#chevu"/></svg><svg class="ic" style="left:3395.8px;top:919px;width:23px;height:23px;color:#cccccc;"><use href="#close"/></svg><span class="m" style="left:2145px;top:974.55px;font-size:18.33px;-webkit-text-stroke:.3px #cccccc;color:#cccccc;">&gt; screen-record@1.0.0 dev</span><span class="m" style="left:2145px;top:999.55px;font-size:18.33px;-webkit-text-stroke:.3px #cccccc;color:#cccccc;">&gt; nodemon --exec electron . --watch src/index.js --watch src --ext js,html,css</span><span class="m" style="left:2145px;top:1049.55px;font-size:18.33px;font-weight:bold;color:#e5e510;">[nodemon] 3.1.10</span><span class="m" style="left:2145px;top:1074.55px;font-size:18.33px;font-weight:bold;color:#e5e510;">[nodemon] to restart at any time, enter `rs`</span><span class="m" style="left:2145px;top:1099.55px;font-size:18.33px;font-weight:bold;color:#e5e510;">[nodemon] watching path(s): src\index.js src\**\*</span><span class="m" style="left:2145px;top:1124.55px;font-size:18.33px;font-weight:bold;color:#e5e510;">[nodemon] watching extensions: js,html,css</span><span class="m" style="left:2145px;top:1149.55px;font-size:18.33px;font-weight:bold;color:#1ec17c;">[nodemon] starting `electron .`</span><span class="m" style="left:2145px;top:1199.55px;font-size:18.33px;-webkit-text-stroke:.3px #cccccc;color:#cccccc;">Γ£à Screenshot uploaded to: https://chat.mcqstudy.com/ss/screenshot-1747370203.png</span><span class="m" style="left:2145px;top:1224.55px;font-size:18.33px;-webkit-text-stroke:.3px #cccccc;color:#cccccc;">Γ£à Screenshot uploaded to: https://chat.mcqstudy.com/ss/screenshot-1747370207.png</span><span class="m" style="left:2145px;top:1249.55px;font-size:18.33px;-webkit-text-stroke:.3px #cccccc;color:#cccccc;">Γ£à Screenshot uploaded to: https://chat.mcqstudy.com/ss/screenshot-1747370210.png</span><div class="b" style="left:2453px;top:1269.6px;width:594px;height:25px;background:#3a3d41;"></div><span class="m" style="left:2145px;top:1274.55px;font-size:18.33px;-webkit-text-stroke:.3px #cccccc;color:#cccccc;">Γ£à Screenshot uploaded to: https://chat.mcqstudy.com/ss/screenshot-1747370539.png</span><span class="m" style="left:2145px;top:1299.55px;font-size:18.33px;-webkit-text-stroke:.3px #cccccc;color:#cccccc;">Γ£à Screenshot uploaded to: https://chat.mcqstudy.com/ss/screenshot-1747370543.png</span><span class="m" style="left:2145px;top:1324.55px;font-size:18.33px;-webkit-text-stroke:.3px #cccccc;color:#cccccc;">Γ£à Screenshot uploaded to: https://chat.mcqstudy.com/ss/screenshot-1747370549.png</span><div class="b" style="left:2145.5px;top:1345.1px;width:10px;height:22px;border:1px solid #cccccc;box-sizing:border-box;"></div><div class="b" style="left:3420px;top:968px;width:20px;height:400px;background:#1b1b1b;border-left:1px solid #2b2b2b;box-sizing:border-box;"></div><div class="b" style="left:3421px;top:1154px;width:19px;height:214px;background:#262626;"></div><div class="b" style="left:3421px;top:1119px;width:6px;height:18px;background:#8a8a8a;"></div><div class="b" style="left:3434px;top:968px;width:6px;height:9px;background:#f14c4c;"></div><div class="b" style="left:1727px;top:1368px;width:1713px;height:1px;background:#2b2b2b;"></div><div class="b" style="left:1727px;top:1369px;width:53px;height:31px;background:#0078d4;"></div><svg class="ic" style="left:1744.7px;top:1374px;width:22px;height:22px;color:#fff;"><use href="#remote"/></svg><svg class="ic" style="left:1790px;top:1374.5px;width:21px;height:21px;color:#cccccc;"><use href="#branch"/></svg><span class="t" style="left:1817px;top:1376.95px;font-size:16.6px;transform:scaleX(1.01);color:#cccccc;">main</span><svg class="ic" style="left:1862.9px;top:1374.5px;width:21px;height:21px;color:#cccccc;"><use href="#sync"/></svg><svg class="ic" style="left:2597.5px;top:1374.5px;width:21px;height:21px;color:#cccccc;"><use href="#commit"/></svg><span class="t" style="left:2623.5px;top:1376.95px;font-size:16.6px;transform:scaleX(1.02);color:#cccccc;">Asiful Haque (1 day ago)</span><span class="t" style="left:2833.9px;top:1376.95px;font-size:16.6px;transform:scaleX(0.98);color:#cccccc;">Ln 18, Col 1</span><span class="t" style="left:2945.7px;top:1376.95px;font-size:16.6px;transform:scaleX(0.94);color:#cccccc;">Spaces: 2</span><span class="t" style="left:3039.2px;top:1376.95px;font-size:16.6px;transform:scaleX(0.95);color:#cccccc;">UTF-8</span><span class="t" style="left:3107.3px;top:1376.95px;font-size:16.6px;transform:scaleX(0.85);color:#cccccc;">CRLF</span><span class="t" style="left:3196.2px;top:1376.95px;font-size:16.6px;transform:scaleX(0.97);color:#cccccc;">JavaScript</span><span class="t" style="left:3363.3px;top:1376.95px;font-size:16.6px;transform:scaleX(1.03);color:#cccccc;">Prettier</span><span class="t" style="left:3169.7px;top:1376.96px;font-size:16px;transform:scaleX(1.01);color:#cccccc;font-weight:bold;">{ }</span><svg class="ic" style="left:3293.5px;top:1373.5px;width:23px;height:23px;color:#cccccc;"><use href="#copilot"/></svg><svg class="ic" style="left:3337px;top:1375px;width:20px;height:20px;color:#cccccc;"><use href="#checkall"/></svg><div class="b" style="left:1726.5px;top:0px;width:4.5px;height:401px;background:#222526;"></div><div class="b" style="left:1726.5px;top:401px;width:4.5px;height:641px;background:#c4c4c4;"></div><div class="b" style="left:1726.5px;top:824px;width:4.5px;height:40px;background:#c4506a;"></div><div class="b" style="left:1726.5px;top:1042px;width:4.5px;height:327px;background:#0e0e0e;"></div><div class="b" style="left:0px;top:1400px;width:1710px;height:40px;background:#efefef;"></div><div class="b" style="left:1710px;top:1400px;width:1730px;height:40px;background:linear-gradient(90deg,#c4dcea,#cfe0eb 40%,#d3e0ea);"></div><svg class="ic" style="left:15.75px;top:1411.75px;width:16.5px;height:16.5px;"><use href="#tbwin"/></svg><div class="b" style="left:48.5px;top:1400px;width:287px;height:40px;background:#fff;border:1px solid #c4c4c4;border-bottom:none;box-sizing:border-box;"></div><svg class="ic" style="left:60px;top:1412px;width:16px;height:16px;"><use href="#tbsearch"/></svg><span class="t" style="left:88.8px;top:1413.14px;font-size:14.6px;transform:scaleX(0.99);color:#3b3b3b;">Type here to search</span><svg class="ic" style="left:263px;top:1401px;width:70px;height:39px;"><use href="#eleph"/></svg><svg class="ic" style="left:349.8px;top:1406.5px;width:26px;height:26px;"><use href="#tbcopilot"/></svg><svg class="ic" style="left:398.8px;top:1406.5px;width:26px;height:26px;"><use href="#tbfz"/></svg><svg class="ic" style="left:447.8px;top:1406.5px;width:26px;height:26px;"><use href="#tbexp"/></svg><div class="b" style="left:440.8px;top:1437.5px;width:40px;height:2.5px;background:#0a6fc9;"></div><svg class="ic" style="left:496.8px;top:1406.5px;width:26px;height:26px;"><use href="#tbff"/></svg><svg class="ic" style="left:545.8px;top:1406.5px;width:26px;height:26px;"><use href="#tbchrome"/></svg><svg class="ic" style="left:594.8px;top:1406.5px;width:26px;height:26px;"><use href="#tbrar"/></svg><svg class="ic" style="left:643.8px;top:1406.5px;width:26px;height:26px;"><use href="#tbslack"/></svg><svg class="ic" style="left:693.3px;top:1407px;width:25px;height:25px;"><use href="#tbdoc"/></svg><svg class="ic" style="left:741.8px;top:1406.5px;width:26px;height:26px;"><use href="#tbpaint"/></svg><svg class="ic" style="left:790.8px;top:1406.5px;width:26px;height:26px;"><use href="#tbvsc"/></svg><div class="b" style="left:783.8px;top:1437.5px;width:40px;height:2.5px;background:#0a6fc9;"></div><svg class="ic" style="left:839.8px;top:1406.5px;width:26px;height:26px;"><use href="#tbvlc"/></svg><svg class="ic" style="left:888.8px;top:1406.5px;width:26px;height:26px;"><use href="#tbas"/></svg><svg class="ic" style="left:937.8px;top:1406.5px;width:26px;height:26px;"><use href="#tbchrome"/></svg><div class="b" style="left:930.8px;top:1437.5px;width:40px;height:2.5px;background:#0a6fc9;"></div><div class="b" style="left:975.8px;top:1400px;width:48px;height:40px;background:#fafafa;"></div><svg class="ic" style="left:986.8px;top:1406.5px;width:26px;height:26px;"><use href="#tbchrome"/></svg><div class="b" style="left:976.3px;top:1437.5px;width:47px;height:2.5px;background:#0a6fc9;"></div><svg class="ic" style="left:1035.8px;top:1406.5px;width:26px;height:26px;"><use href="#tbelectron"/></svg><div class="b" style="left:1028.8px;top:1437.5px;width:40px;height:2.5px;background:#0a6fc9;"></div><div class="b" style="left:955px;top:1421px;width:15px;height:15px;background:#c2185b;border-radius:8px;"></div><span class="t" style="left:959.33px;top:1423.96px;font-size:9.5px;color:#fff;">S</span><div class="b" style="left:1003px;top:1421px;width:15px;height:15px;background:#3a4250;border-radius:8px;"></div><div class="b" style="left:1528.5px;top:1395px;width:165px;height:33px;background:#dcefd7;border-radius:16px;opacity:.85;"></div><span class="t" style="left:1569px;top:1405.07px;font-size:13.5px;transform:scaleX(0.94);color:#b7cdb3;">Customize Chrome</span><div class="b" style="left:1710px;top:1392px;width:17px;height:9px;background:#0078d4;"></div><svg class="ic" style="left:3230.6px;top:1411px;width:16px;height:16px;"><use href="#tray1"/></svg><svg class="ic" style="left:3254.5px;top:1410.5px;width:17px;height:17px;"><use href="#tray2"/></svg><svg class="ic" style="left:3278.5px;top:1410.5px;width:17px;height:17px;"><use href="#tray3"/></svg><svg class="ic" style="left:3304.6px;top:1411px;width:16px;height:16px;"><use href="#tray4"/></svg><span class="t" style="left:3330.5px;top:1405.01px;font-size:11.8px;transform:scaleX(0.95);color:#222;">10:42 AM</span><span class="t" style="left:3329.5px;top:1423.01px;font-size:11.8px;transform:scaleX(0.98);color:#222;">5/16/2025</span><svg class="ic" style="left:3400.5px;top:1409.5px;width:17px;height:17px;"><use href="#tray5"/></svg><div class="b" style="left:3407px;top:1420px;width:14px;height:14px;background:#eef3f7;border:1px solid #555;border-radius:8px;box-sizing:border-box;"></div><span class="t" style="left:3411.5px;top:1423.38px;font-size:9px;color:#222;">2</span><svg class="ic" style="left:2053px;top:1043px;width:14px;height:21px" viewBox="0 0 14 21"><path fill="#fff" stroke="#000" stroke-width="1" d="M1 1v15.500l3.600-3.400 2.600 6 2.400-1-2.600-5.900h5z"/></svg></div></body></html>
